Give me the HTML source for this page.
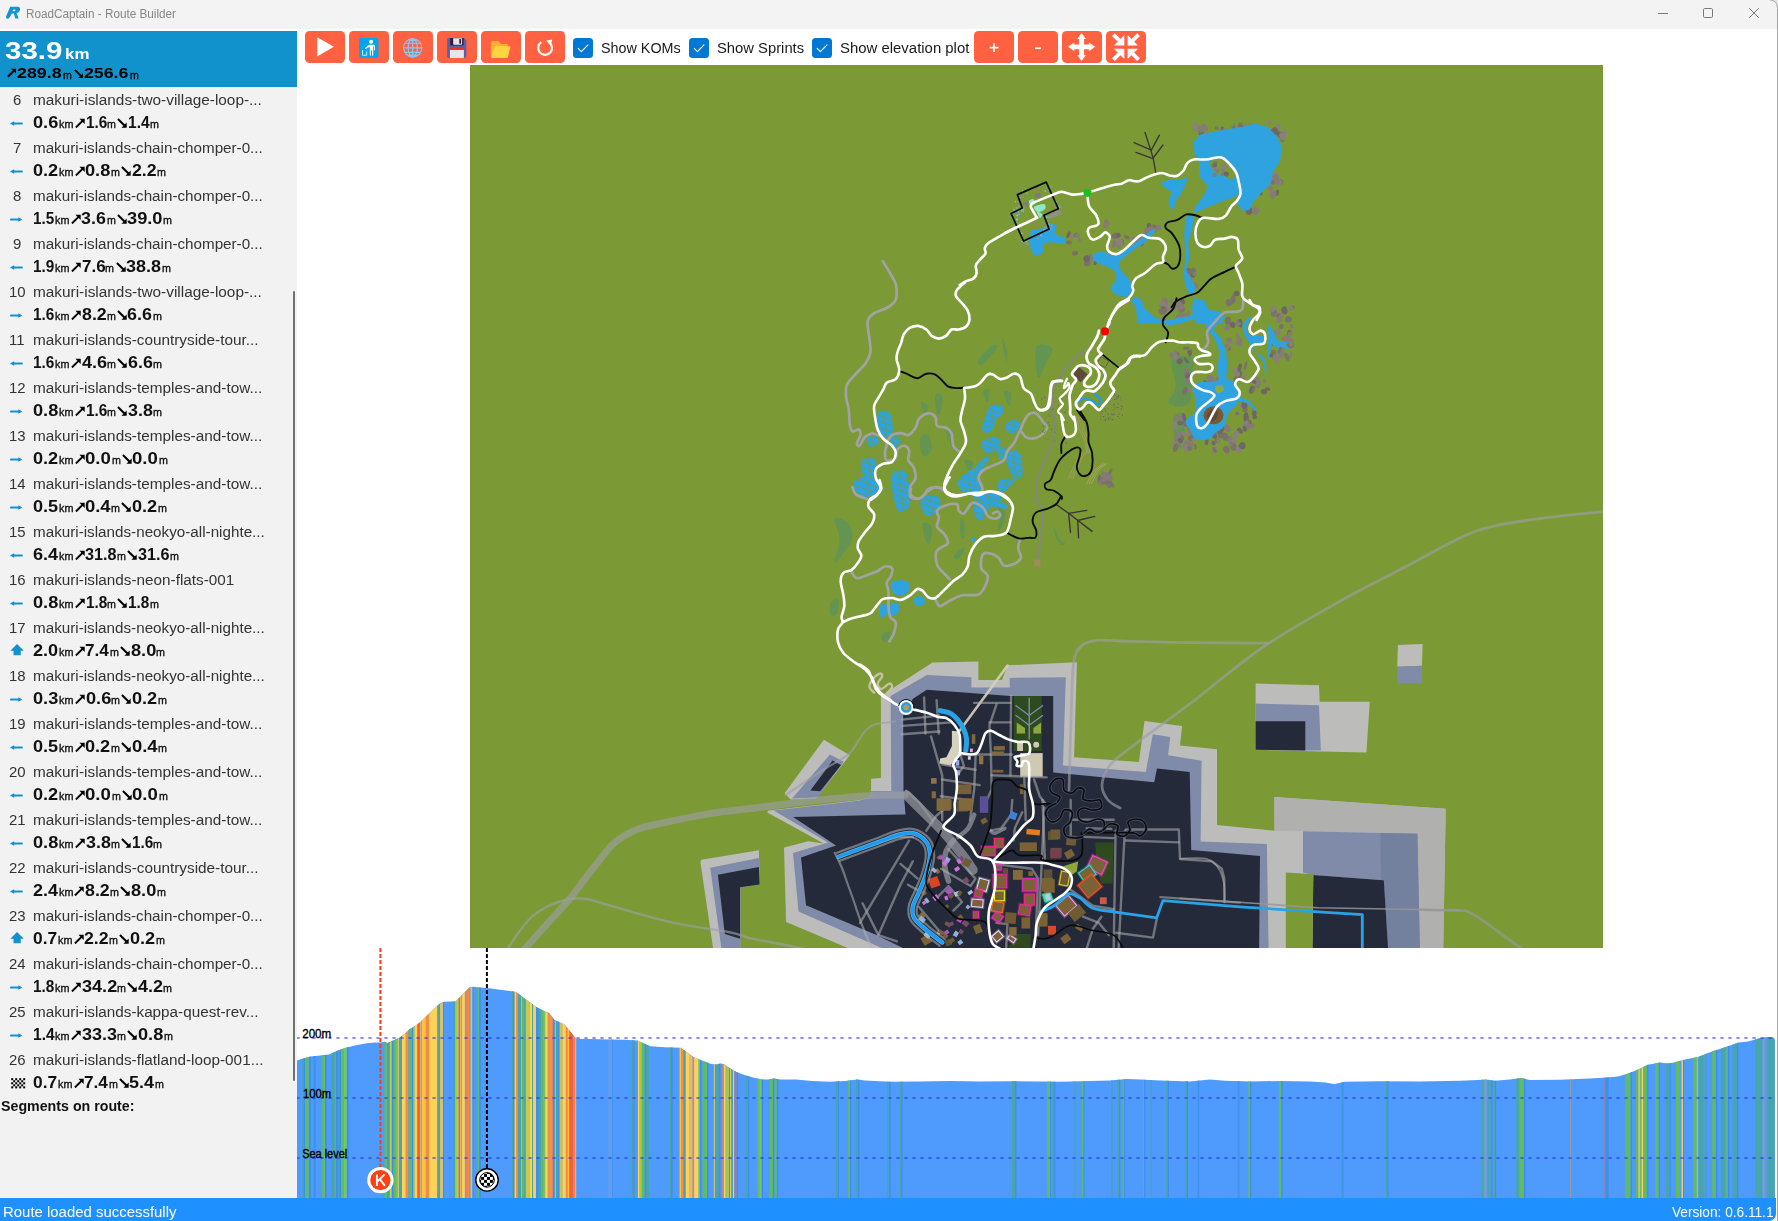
<!DOCTYPE html>
<html><head><meta charset="utf-8"><title>RoadCaptain - Route Builder</title>
<style>
html,body{margin:0;padding:0;}
body{width:1778px;height:1221px;overflow:hidden;background:#fff;position:relative;font-family:"Liberation Sans",sans-serif;}
.t{position:absolute;white-space:nowrap;transform-origin:0 0;line-height:normal;display:block;}
#titlebar{position:absolute;left:0;top:0;width:1778px;height:29px;background:#f3f3f3;}
#sidebar{position:absolute;left:0;top:31px;width:297px;height:1167px;background:#f2f2f2;}
#summary{position:absolute;left:0;top:0;width:297px;height:56px;background:#1192cc;}
#toolbar{position:absolute;left:297px;top:29px;width:1480px;height:36px;background:#fff;}
.btn{position:absolute;top:2px;width:40px;height:32px;border-radius:4.5px;background:#ff6141;}
.btn svg{position:absolute;left:0;top:0;}
.cb{position:absolute;top:9px;width:20px;height:20px;border-radius:3.5px;background:#0078d4;}
#map{position:absolute;left:470px;top:65px;width:1133px;height:883px;background:#7b9a36;overflow:hidden;}
#plot{position:absolute;left:297px;top:948px;width:1480px;height:250px;}
#status{position:absolute;left:0;top:1198px;width:1776px;height:23px;background:#1e90ff;border-bottom-right-radius:7px;}
#thumb{position:absolute;left:293px;top:260px;width:2px;height:790px;background:#727272;border-radius:1px;}
.row{position:absolute;left:0;width:290px;height:48px;}
</style></head><body>

<div id="titlebar">
<svg style="position:absolute;left:5px;top:6px" width="16" height="14" viewBox="0 0 16 14"><path d="M5.2 0.8 L12.6 0.8 C15.2 0.8 15.6 3.2 14.6 5 C13.9 6.3 12.8 6.9 11.6 7.1 L13.6 12.6 L10.3 12.6 L8.9 7.6 L6.9 7.6 L4.6 11.6 C3.9 12.8 2.6 13 1.6 12.4 C0.8 11.9 0.8 10.8 1.4 9.8 Z" fill="#1593d0"/><path d="M8.3 3.4 L10.6 3.4 L9.8 5.2 L7.4 5.2 Z" fill="#f3f3f3"/></svg>
<span class="t" style="left:26.30px;top:7.04px;font-size:12px;color:#868686;transform:scaleX(0.9777);">RoadCaptain - Route Builder</span>
<svg style="position:absolute;left:1640px;top:0" width="138" height="29" viewBox="0 0 138 29" fill="none" stroke="#7a7a7a" stroke-width="1"><path d="M18 13.5 H28"/><rect x="63.5" y="8.5" width="9" height="9" rx="1.2"/><path d="M109.3 8.3 L118.7 17.7 M118.7 8.3 L109.3 17.7"/></svg>
</div>
<div id="sidebar"><div id="summary">
<span class="t" style="left:5.20px;top:6.58px;font-size:23px;font-weight:bold;color:#fff;transform:scaleX(1.2823);">33.9</span>
<span class="t" style="left:64.80px;top:14.73px;font-size:14px;font-weight:bold;color:#fff;transform:scaleX(1.2059);">km</span>
<svg style="position:absolute;left:6.50px;top:37.30px" width="9.6" height="9.6" viewBox="0 0 10 10"><path d="M0.9 9.1 L8.2 1.8" stroke="#000" stroke-width="2.0" fill="none"/><path d="M4.3 0.7 H9.3 V5.7 Z" fill="#000"/></svg>
<span class="t" style="left:17.40px;top:33.47px;font-size:15.5px;font-weight:bold;color:#000;transform:scaleX(1.1498);">289.8</span>
<span class="t" style="left:63.20px;top:37.55px;font-size:11px;color:#000;transform:scaleX(0.9604);-webkit-text-stroke:0.3px #000;">m</span>
<svg style="position:absolute;left:73.60px;top:37.60px" width="9.6" height="9.6" viewBox="0 0 10 10"><path d="M0.9 0.9 L8.2 8.2" stroke="#000" stroke-width="2.0" fill="none"/><path d="M4.3 9.3 H9.3 V4.3 Z" fill="#000"/></svg>
<span class="t" style="left:84.40px;top:33.47px;font-size:15.5px;font-weight:bold;color:#000;transform:scaleX(1.1447);">256.6</span>
<span class="t" style="left:130.00px;top:37.55px;font-size:11px;color:#000;transform:scaleX(0.9604);-webkit-text-stroke:0.3px #000;">m</span>
</div>
<div class="row" style="top:56px">
<span class="t" style="left:13.04px;top:5.02px;font-size:14.67px;color:#333;transform:scaleX(1.0200);">6</span>
<span class="t" style="left:33.00px;top:5.02px;font-size:14.67px;color:#333;transform:scaleX(1.0486);">makuri-islands-two-village-loop-...</span>
<svg style="position:absolute;left:9px;top:29.8px" width="15" height="13" viewBox="0 0 15 13"><path d="M4 6.5 H12.8" stroke="#1192cc" stroke-width="2.2" stroke-linecap="round" fill="none"/><path d="M0.9 6.5 L5.1 4.2 V8.8 Z" fill="#1192cc"/></svg>
<span class="t" style="left:33.00px;top:26.72px;font-size:16px;font-weight:bold;color:#111;transform:scaleX(1.1375);">0.6</span>
<span class="t" style="left:58.90px;top:31.25px;font-size:11px;color:#111;transform:scaleX(0.9821);-webkit-text-stroke:0.35px #111;">km</span>
<svg style="position:absolute;left:74.70px;top:30.60px" width="10.4" height="10.4" viewBox="0 0 10 10"><path d="M0.9 9.1 L8.2 1.8" stroke="#000" stroke-width="1.9" fill="none"/><path d="M4.3 0.7 H9.3 V5.7 Z" fill="#000"/></svg>
<span class="t" style="left:85.50px;top:26.72px;font-size:16px;font-weight:bold;color:#111;transform:scaleX(0.9576);">1.6</span>
<span class="t" style="left:107.10px;top:31.25px;font-size:11px;color:#111;transform:scaleX(0.9713);-webkit-text-stroke:0.35px #111;">m</span>
<svg style="position:absolute;left:117.20px;top:30.90px" width="10.4" height="10.4" viewBox="0 0 10 10"><path d="M0.9 0.9 L8.2 8.2" stroke="#000" stroke-width="1.9" fill="none"/><path d="M4.3 9.3 H9.3 V4.3 Z" fill="#000"/></svg>
<span class="t" style="left:128.00px;top:26.72px;font-size:16px;font-weight:bold;color:#111;transform:scaleX(0.9711);">1.4</span>
<span class="t" style="left:149.90px;top:31.25px;font-size:11px;color:#111;transform:scaleX(0.9713);-webkit-text-stroke:0.35px #111;">m</span>
</div>
<div class="row" style="top:104px">
<span class="t" style="left:13.04px;top:5.02px;font-size:14.67px;color:#333;transform:scaleX(1.0200);">7</span>
<span class="t" style="left:33.00px;top:5.02px;font-size:14.67px;color:#333;transform:scaleX(1.0372);">makuri-islands-chain-chomper-0...</span>
<svg style="position:absolute;left:9px;top:29.8px" width="15" height="13" viewBox="0 0 15 13"><path d="M4 6.5 H12.8" stroke="#1192cc" stroke-width="2.2" stroke-linecap="round" fill="none"/><path d="M0.9 6.5 L5.1 4.2 V8.8 Z" fill="#1192cc"/></svg>
<span class="t" style="left:33.00px;top:26.72px;font-size:16px;font-weight:bold;color:#111;transform:scaleX(1.1330);">0.2</span>
<span class="t" style="left:58.80px;top:31.25px;font-size:11px;color:#111;transform:scaleX(0.9821);-webkit-text-stroke:0.35px #111;">km</span>
<svg style="position:absolute;left:74.60px;top:30.60px" width="10.4" height="10.4" viewBox="0 0 10 10"><path d="M0.9 9.1 L8.2 1.8" stroke="#000" stroke-width="1.9" fill="none"/><path d="M4.3 0.7 H9.3 V5.7 Z" fill="#000"/></svg>
<span class="t" style="left:85.40px;top:26.72px;font-size:16px;font-weight:bold;color:#111;transform:scaleX(1.1375);">0.8</span>
<span class="t" style="left:111.00px;top:31.25px;font-size:11px;color:#111;transform:scaleX(0.9713);-webkit-text-stroke:0.35px #111;">m</span>
<svg style="position:absolute;left:121.10px;top:30.90px" width="10.4" height="10.4" viewBox="0 0 10 10"><path d="M0.9 0.9 L8.2 8.2" stroke="#000" stroke-width="1.9" fill="none"/><path d="M4.3 9.3 H9.3 V4.3 Z" fill="#000"/></svg>
<span class="t" style="left:131.90px;top:26.72px;font-size:16px;font-weight:bold;color:#111;transform:scaleX(1.1060);">2.2</span>
<span class="t" style="left:156.80px;top:31.25px;font-size:11px;color:#111;transform:scaleX(0.9713);-webkit-text-stroke:0.35px #111;">m</span>
</div>
<div class="row" style="top:152px">
<span class="t" style="left:13.04px;top:5.02px;font-size:14.67px;color:#333;transform:scaleX(1.0200);">8</span>
<span class="t" style="left:33.00px;top:5.02px;font-size:14.67px;color:#333;transform:scaleX(1.0372);">makuri-islands-chain-chomper-0...</span>
<svg style="position:absolute;left:9px;top:29.8px" width="15" height="13" viewBox="0 0 15 13"><path d="M2.05 6.5 H9.6" stroke="#1192cc" stroke-width="2.2" stroke-linecap="round" fill="none"/><path d="M13.5 6.5 L9.3 4.2 V8.8 Z" fill="#1192cc"/></svg>
<span class="t" style="left:33.00px;top:26.72px;font-size:16px;font-weight:bold;color:#111;transform:scaleX(0.9531);">1.5</span>
<span class="t" style="left:54.80px;top:31.25px;font-size:11px;color:#111;transform:scaleX(0.9821);-webkit-text-stroke:0.35px #111;">km</span>
<svg style="position:absolute;left:70.60px;top:30.60px" width="10.4" height="10.4" viewBox="0 0 10 10"><path d="M0.9 9.1 L8.2 1.8" stroke="#000" stroke-width="1.9" fill="none"/><path d="M4.3 0.7 H9.3 V5.7 Z" fill="#000"/></svg>
<span class="t" style="left:81.40px;top:26.72px;font-size:16px;font-weight:bold;color:#111;transform:scaleX(1.1150);">3.6</span>
<span class="t" style="left:106.50px;top:31.25px;font-size:11px;color:#111;transform:scaleX(0.9713);-webkit-text-stroke:0.35px #111;">m</span>
<svg style="position:absolute;left:116.60px;top:30.90px" width="10.4" height="10.4" viewBox="0 0 10 10"><path d="M0.9 0.9 L8.2 8.2" stroke="#000" stroke-width="1.9" fill="none"/><path d="M4.3 9.3 H9.3 V4.3 Z" fill="#000"/></svg>
<span class="t" style="left:127.40px;top:26.72px;font-size:16px;font-weight:bold;color:#111;transform:scaleX(1.1400);">39.0</span>
<span class="t" style="left:163.20px;top:31.25px;font-size:11px;color:#111;transform:scaleX(0.9713);-webkit-text-stroke:0.35px #111;">m</span>
</div>
<div class="row" style="top:200px">
<span class="t" style="left:13.04px;top:5.02px;font-size:14.67px;color:#333;transform:scaleX(1.0200);">9</span>
<span class="t" style="left:33.00px;top:5.02px;font-size:14.67px;color:#333;transform:scaleX(1.0372);">makuri-islands-chain-chomper-0...</span>
<svg style="position:absolute;left:9px;top:29.8px" width="15" height="13" viewBox="0 0 15 13"><path d="M4 6.5 H12.8" stroke="#1192cc" stroke-width="2.2" stroke-linecap="round" fill="none"/><path d="M0.9 6.5 L5.1 4.2 V8.8 Z" fill="#1192cc"/></svg>
<span class="t" style="left:33.00px;top:26.72px;font-size:16px;font-weight:bold;color:#111;transform:scaleX(0.9576);">1.9</span>
<span class="t" style="left:54.90px;top:31.25px;font-size:11px;color:#111;transform:scaleX(0.9821);-webkit-text-stroke:0.35px #111;">km</span>
<svg style="position:absolute;left:70.70px;top:30.60px" width="10.4" height="10.4" viewBox="0 0 10 10"><path d="M0.9 9.1 L8.2 1.8" stroke="#000" stroke-width="1.9" fill="none"/><path d="M4.3 0.7 H9.3 V5.7 Z" fill="#000"/></svg>
<span class="t" style="left:81.50px;top:26.72px;font-size:16px;font-weight:bold;color:#111;transform:scaleX(1.0610);">7.6</span>
<span class="t" style="left:105.40px;top:31.25px;font-size:11px;color:#111;transform:scaleX(0.9713);-webkit-text-stroke:0.35px #111;">m</span>
<svg style="position:absolute;left:115.50px;top:30.90px" width="10.4" height="10.4" viewBox="0 0 10 10"><path d="M0.9 0.9 L8.2 8.2" stroke="#000" stroke-width="1.9" fill="none"/><path d="M4.3 9.3 H9.3 V4.3 Z" fill="#000"/></svg>
<span class="t" style="left:126.30px;top:26.72px;font-size:16px;font-weight:bold;color:#111;transform:scaleX(1.1239);">38.8</span>
<span class="t" style="left:161.60px;top:31.25px;font-size:11px;color:#111;transform:scaleX(0.9713);-webkit-text-stroke:0.35px #111;">m</span>
</div>
<div class="row" style="top:248px">
<span class="t" style="left:8.88px;top:5.02px;font-size:14.67px;color:#333;transform:scaleX(1.0200);">10</span>
<span class="t" style="left:33.00px;top:5.02px;font-size:14.67px;color:#333;transform:scaleX(1.0486);">makuri-islands-two-village-loop-...</span>
<svg style="position:absolute;left:9px;top:29.8px" width="15" height="13" viewBox="0 0 15 13"><path d="M2.05 6.5 H9.6" stroke="#1192cc" stroke-width="2.2" stroke-linecap="round" fill="none"/><path d="M13.5 6.5 L9.3 4.2 V8.8 Z" fill="#1192cc"/></svg>
<span class="t" style="left:33.00px;top:26.72px;font-size:16px;font-weight:bold;color:#111;transform:scaleX(0.9576);">1.6</span>
<span class="t" style="left:54.90px;top:31.25px;font-size:11px;color:#111;transform:scaleX(0.9821);-webkit-text-stroke:0.35px #111;">km</span>
<svg style="position:absolute;left:70.70px;top:30.60px" width="10.4" height="10.4" viewBox="0 0 10 10"><path d="M0.9 9.1 L8.2 1.8" stroke="#000" stroke-width="1.9" fill="none"/><path d="M4.3 0.7 H9.3 V5.7 Z" fill="#000"/></svg>
<span class="t" style="left:81.50px;top:26.72px;font-size:16px;font-weight:bold;color:#111;transform:scaleX(1.1105);">8.2</span>
<span class="t" style="left:106.50px;top:31.25px;font-size:11px;color:#111;transform:scaleX(0.9713);-webkit-text-stroke:0.35px #111;">m</span>
<svg style="position:absolute;left:116.60px;top:30.90px" width="10.4" height="10.4" viewBox="0 0 10 10"><path d="M0.9 0.9 L8.2 8.2" stroke="#000" stroke-width="1.9" fill="none"/><path d="M4.3 9.3 H9.3 V4.3 Z" fill="#000"/></svg>
<span class="t" style="left:127.40px;top:26.72px;font-size:16px;font-weight:bold;color:#111;transform:scaleX(1.1150);">6.6</span>
<span class="t" style="left:152.50px;top:31.25px;font-size:11px;color:#111;transform:scaleX(0.9713);-webkit-text-stroke:0.35px #111;">m</span>
</div>
<div class="row" style="top:296px">
<span class="t" style="left:9.43px;top:5.02px;font-size:14.67px;color:#333;transform:scaleX(1.0200);">11</span>
<span class="t" style="left:33.00px;top:5.02px;font-size:14.67px;color:#333;transform:scaleX(1.0446);">makuri-islands-countryside-tour...</span>
<svg style="position:absolute;left:9px;top:29.8px" width="15" height="13" viewBox="0 0 15 13"><path d="M4 6.5 H12.8" stroke="#1192cc" stroke-width="2.2" stroke-linecap="round" fill="none"/><path d="M0.9 6.5 L5.1 4.2 V8.8 Z" fill="#1192cc"/></svg>
<span class="t" style="left:33.00px;top:26.72px;font-size:16px;font-weight:bold;color:#111;transform:scaleX(0.9576);">1.6</span>
<span class="t" style="left:54.90px;top:31.25px;font-size:11px;color:#111;transform:scaleX(0.9821);-webkit-text-stroke:0.35px #111;">km</span>
<svg style="position:absolute;left:70.70px;top:30.60px" width="10.4" height="10.4" viewBox="0 0 10 10"><path d="M0.9 9.1 L8.2 1.8" stroke="#000" stroke-width="1.9" fill="none"/><path d="M4.3 0.7 H9.3 V5.7 Z" fill="#000"/></svg>
<span class="t" style="left:81.50px;top:26.72px;font-size:16px;font-weight:bold;color:#111;transform:scaleX(1.1285);">4.6</span>
<span class="t" style="left:106.90px;top:31.25px;font-size:11px;color:#111;transform:scaleX(0.9713);-webkit-text-stroke:0.35px #111;">m</span>
<svg style="position:absolute;left:117.00px;top:30.90px" width="10.4" height="10.4" viewBox="0 0 10 10"><path d="M0.9 0.9 L8.2 8.2" stroke="#000" stroke-width="1.9" fill="none"/><path d="M4.3 9.3 H9.3 V4.3 Z" fill="#000"/></svg>
<span class="t" style="left:127.80px;top:26.72px;font-size:16px;font-weight:bold;color:#111;transform:scaleX(1.1150);">6.6</span>
<span class="t" style="left:152.90px;top:31.25px;font-size:11px;color:#111;transform:scaleX(0.9713);-webkit-text-stroke:0.35px #111;">m</span>
</div>
<div class="row" style="top:344px">
<span class="t" style="left:8.88px;top:5.02px;font-size:14.67px;color:#333;transform:scaleX(1.0200);">12</span>
<span class="t" style="left:33.00px;top:5.02px;font-size:14.67px;color:#333;transform:scaleX(1.0460);">makuri-islands-temples-and-tow...</span>
<svg style="position:absolute;left:9px;top:29.8px" width="15" height="13" viewBox="0 0 15 13"><path d="M2.05 6.5 H9.6" stroke="#1192cc" stroke-width="2.2" stroke-linecap="round" fill="none"/><path d="M13.5 6.5 L9.3 4.2 V8.8 Z" fill="#1192cc"/></svg>
<span class="t" style="left:33.00px;top:26.72px;font-size:16px;font-weight:bold;color:#111;transform:scaleX(1.1375);">0.8</span>
<span class="t" style="left:58.90px;top:31.25px;font-size:11px;color:#111;transform:scaleX(0.9821);-webkit-text-stroke:0.35px #111;">km</span>
<svg style="position:absolute;left:74.70px;top:30.60px" width="10.4" height="10.4" viewBox="0 0 10 10"><path d="M0.9 9.1 L8.2 1.8" stroke="#000" stroke-width="1.9" fill="none"/><path d="M4.3 0.7 H9.3 V5.7 Z" fill="#000"/></svg>
<span class="t" style="left:85.50px;top:26.72px;font-size:16px;font-weight:bold;color:#111;transform:scaleX(0.9576);">1.6</span>
<span class="t" style="left:107.10px;top:31.25px;font-size:11px;color:#111;transform:scaleX(0.9713);-webkit-text-stroke:0.35px #111;">m</span>
<svg style="position:absolute;left:117.20px;top:30.90px" width="10.4" height="10.4" viewBox="0 0 10 10"><path d="M0.9 0.9 L8.2 8.2" stroke="#000" stroke-width="1.9" fill="none"/><path d="M4.3 9.3 H9.3 V4.3 Z" fill="#000"/></svg>
<span class="t" style="left:128.00px;top:26.72px;font-size:16px;font-weight:bold;color:#111;transform:scaleX(1.1150);">3.8</span>
<span class="t" style="left:153.10px;top:31.25px;font-size:11px;color:#111;transform:scaleX(0.9713);-webkit-text-stroke:0.35px #111;">m</span>
</div>
<div class="row" style="top:392px">
<span class="t" style="left:8.88px;top:5.02px;font-size:14.67px;color:#333;transform:scaleX(1.0200);">13</span>
<span class="t" style="left:33.00px;top:5.02px;font-size:14.67px;color:#333;transform:scaleX(1.0460);">makuri-islands-temples-and-tow...</span>
<svg style="position:absolute;left:9px;top:29.8px" width="15" height="13" viewBox="0 0 15 13"><path d="M2.05 6.5 H9.6" stroke="#1192cc" stroke-width="2.2" stroke-linecap="round" fill="none"/><path d="M13.5 6.5 L9.3 4.2 V8.8 Z" fill="#1192cc"/></svg>
<span class="t" style="left:33.00px;top:26.72px;font-size:16px;font-weight:bold;color:#111;transform:scaleX(1.1330);">0.2</span>
<span class="t" style="left:58.80px;top:31.25px;font-size:11px;color:#111;transform:scaleX(0.9821);-webkit-text-stroke:0.35px #111;">km</span>
<svg style="position:absolute;left:74.60px;top:30.60px" width="10.4" height="10.4" viewBox="0 0 10 10"><path d="M0.9 9.1 L8.2 1.8" stroke="#000" stroke-width="1.9" fill="none"/><path d="M4.3 0.7 H9.3 V5.7 Z" fill="#000"/></svg>
<span class="t" style="left:85.40px;top:26.72px;font-size:16px;font-weight:bold;color:#111;transform:scaleX(1.1600);">0.0</span>
<span class="t" style="left:111.50px;top:31.25px;font-size:11px;color:#111;transform:scaleX(0.9713);-webkit-text-stroke:0.35px #111;">m</span>
<svg style="position:absolute;left:121.60px;top:30.90px" width="10.4" height="10.4" viewBox="0 0 10 10"><path d="M0.9 0.9 L8.2 8.2" stroke="#000" stroke-width="1.9" fill="none"/><path d="M4.3 9.3 H9.3 V4.3 Z" fill="#000"/></svg>
<span class="t" style="left:132.40px;top:26.72px;font-size:16px;font-weight:bold;color:#111;transform:scaleX(1.1600);">0.0</span>
<span class="t" style="left:158.50px;top:31.25px;font-size:11px;color:#111;transform:scaleX(0.9713);-webkit-text-stroke:0.35px #111;">m</span>
</div>
<div class="row" style="top:440px">
<span class="t" style="left:8.88px;top:5.02px;font-size:14.67px;color:#333;transform:scaleX(1.0200);">14</span>
<span class="t" style="left:33.00px;top:5.02px;font-size:14.67px;color:#333;transform:scaleX(1.0460);">makuri-islands-temples-and-tow...</span>
<svg style="position:absolute;left:9px;top:29.8px" width="15" height="13" viewBox="0 0 15 13"><path d="M2.05 6.5 H9.6" stroke="#1192cc" stroke-width="2.2" stroke-linecap="round" fill="none"/><path d="M13.5 6.5 L9.3 4.2 V8.8 Z" fill="#1192cc"/></svg>
<span class="t" style="left:33.00px;top:26.72px;font-size:16px;font-weight:bold;color:#111;transform:scaleX(1.1330);">0.5</span>
<span class="t" style="left:58.80px;top:31.25px;font-size:11px;color:#111;transform:scaleX(0.9821);-webkit-text-stroke:0.35px #111;">km</span>
<svg style="position:absolute;left:74.60px;top:30.60px" width="10.4" height="10.4" viewBox="0 0 10 10"><path d="M0.9 9.1 L8.2 1.8" stroke="#000" stroke-width="1.9" fill="none"/><path d="M4.3 0.7 H9.3 V5.7 Z" fill="#000"/></svg>
<span class="t" style="left:85.40px;top:26.72px;font-size:16px;font-weight:bold;color:#111;transform:scaleX(1.1510);">0.4</span>
<span class="t" style="left:111.30px;top:31.25px;font-size:11px;color:#111;transform:scaleX(0.9713);-webkit-text-stroke:0.35px #111;">m</span>
<svg style="position:absolute;left:121.40px;top:30.90px" width="10.4" height="10.4" viewBox="0 0 10 10"><path d="M0.9 0.9 L8.2 8.2" stroke="#000" stroke-width="1.9" fill="none"/><path d="M4.3 9.3 H9.3 V4.3 Z" fill="#000"/></svg>
<span class="t" style="left:132.20px;top:26.72px;font-size:16px;font-weight:bold;color:#111;transform:scaleX(1.1330);">0.2</span>
<span class="t" style="left:157.70px;top:31.25px;font-size:11px;color:#111;transform:scaleX(0.9713);-webkit-text-stroke:0.35px #111;">m</span>
</div>
<div class="row" style="top:488px">
<span class="t" style="left:8.88px;top:5.02px;font-size:14.67px;color:#333;transform:scaleX(1.0200);">15</span>
<span class="t" style="left:33.00px;top:5.02px;font-size:14.67px;color:#333;transform:scaleX(1.0385);">makuri-islands-neokyo-all-nighte...</span>
<svg style="position:absolute;left:9px;top:29.8px" width="15" height="13" viewBox="0 0 15 13"><path d="M4 6.5 H12.8" stroke="#1192cc" stroke-width="2.2" stroke-linecap="round" fill="none"/><path d="M0.9 6.5 L5.1 4.2 V8.8 Z" fill="#1192cc"/></svg>
<span class="t" style="left:33.00px;top:26.72px;font-size:16px;font-weight:bold;color:#111;transform:scaleX(1.1285);">6.4</span>
<span class="t" style="left:58.70px;top:31.25px;font-size:11px;color:#111;transform:scaleX(0.9821);-webkit-text-stroke:0.35px #111;">km</span>
<svg style="position:absolute;left:74.50px;top:30.60px" width="10.4" height="10.4" viewBox="0 0 10 10"><path d="M0.9 9.1 L8.2 1.8" stroke="#000" stroke-width="1.9" fill="none"/><path d="M4.3 0.7 H9.3 V5.7 Z" fill="#000"/></svg>
<span class="t" style="left:85.30px;top:26.72px;font-size:16px;font-weight:bold;color:#111;transform:scaleX(1.0115);">31.8</span>
<span class="t" style="left:117.10px;top:31.25px;font-size:11px;color:#111;transform:scaleX(0.9713);-webkit-text-stroke:0.35px #111;">m</span>
<svg style="position:absolute;left:127.20px;top:30.90px" width="10.4" height="10.4" viewBox="0 0 10 10"><path d="M0.9 0.9 L8.2 8.2" stroke="#000" stroke-width="1.9" fill="none"/><path d="M4.3 9.3 H9.3 V4.3 Z" fill="#000"/></svg>
<span class="t" style="left:138.00px;top:26.72px;font-size:16px;font-weight:bold;color:#111;transform:scaleX(1.0115);">31.6</span>
<span class="t" style="left:169.80px;top:31.25px;font-size:11px;color:#111;transform:scaleX(0.9713);-webkit-text-stroke:0.35px #111;">m</span>
</div>
<div class="row" style="top:536px">
<span class="t" style="left:8.88px;top:5.02px;font-size:14.67px;color:#333;transform:scaleX(1.0200);">16</span>
<span class="t" style="left:33.00px;top:5.02px;font-size:14.67px;color:#333;transform:scaleX(1.0427);">makuri-islands-neon-flats-001</span>
<svg style="position:absolute;left:9px;top:29.8px" width="15" height="13" viewBox="0 0 15 13"><path d="M4 6.5 H12.8" stroke="#1192cc" stroke-width="2.2" stroke-linecap="round" fill="none"/><path d="M0.9 6.5 L5.1 4.2 V8.8 Z" fill="#1192cc"/></svg>
<span class="t" style="left:33.00px;top:26.72px;font-size:16px;font-weight:bold;color:#111;transform:scaleX(1.1375);">0.8</span>
<span class="t" style="left:58.90px;top:31.25px;font-size:11px;color:#111;transform:scaleX(0.9821);-webkit-text-stroke:0.35px #111;">km</span>
<svg style="position:absolute;left:74.70px;top:30.60px" width="10.4" height="10.4" viewBox="0 0 10 10"><path d="M0.9 9.1 L8.2 1.8" stroke="#000" stroke-width="1.9" fill="none"/><path d="M4.3 0.7 H9.3 V5.7 Z" fill="#000"/></svg>
<span class="t" style="left:85.50px;top:26.72px;font-size:16px;font-weight:bold;color:#111;transform:scaleX(0.9576);">1.8</span>
<span class="t" style="left:107.10px;top:31.25px;font-size:11px;color:#111;transform:scaleX(0.9713);-webkit-text-stroke:0.35px #111;">m</span>
<svg style="position:absolute;left:117.20px;top:30.90px" width="10.4" height="10.4" viewBox="0 0 10 10"><path d="M0.9 0.9 L8.2 8.2" stroke="#000" stroke-width="1.9" fill="none"/><path d="M4.3 9.3 H9.3 V4.3 Z" fill="#000"/></svg>
<span class="t" style="left:128.00px;top:26.72px;font-size:16px;font-weight:bold;color:#111;transform:scaleX(0.9576);">1.8</span>
<span class="t" style="left:149.60px;top:31.25px;font-size:11px;color:#111;transform:scaleX(0.9713);-webkit-text-stroke:0.35px #111;">m</span>
</div>
<div class="row" style="top:584px">
<span class="t" style="left:8.88px;top:5.02px;font-size:14.67px;color:#333;transform:scaleX(1.0200);">17</span>
<span class="t" style="left:33.00px;top:5.02px;font-size:14.67px;color:#333;transform:scaleX(1.0385);">makuri-islands-neokyo-all-nighte...</span>
<svg style="position:absolute;left:9.5px;top:28.8px" width="14" height="13" viewBox="0 0 14 13"><path d="M7 0 L13.8 6.8 H10.75 V11.2 H3.5 V6.8 H0.4 Z" fill="#1192cc"/></svg>
<span class="t" style="left:33.00px;top:26.72px;font-size:16px;font-weight:bold;color:#111;transform:scaleX(1.1330);">2.0</span>
<span class="t" style="left:58.80px;top:31.25px;font-size:11px;color:#111;transform:scaleX(0.9821);-webkit-text-stroke:0.35px #111;">km</span>
<svg style="position:absolute;left:74.60px;top:30.60px" width="10.4" height="10.4" viewBox="0 0 10 10"><path d="M0.9 9.1 L8.2 1.8" stroke="#000" stroke-width="1.9" fill="none"/><path d="M4.3 0.7 H9.3 V5.7 Z" fill="#000"/></svg>
<span class="t" style="left:85.40px;top:26.72px;font-size:16px;font-weight:bold;color:#111;transform:scaleX(1.0745);">7.4</span>
<span class="t" style="left:109.60px;top:31.25px;font-size:11px;color:#111;transform:scaleX(0.9713);-webkit-text-stroke:0.35px #111;">m</span>
<svg style="position:absolute;left:119.70px;top:30.90px" width="10.4" height="10.4" viewBox="0 0 10 10"><path d="M0.9 0.9 L8.2 8.2" stroke="#000" stroke-width="1.9" fill="none"/><path d="M4.3 9.3 H9.3 V4.3 Z" fill="#000"/></svg>
<span class="t" style="left:130.50px;top:26.72px;font-size:16px;font-weight:bold;color:#111;transform:scaleX(1.1375);">8.0</span>
<span class="t" style="left:156.10px;top:31.25px;font-size:11px;color:#111;transform:scaleX(0.9713);-webkit-text-stroke:0.35px #111;">m</span>
</div>
<div class="row" style="top:632px">
<span class="t" style="left:8.88px;top:5.02px;font-size:14.67px;color:#333;transform:scaleX(1.0200);">18</span>
<span class="t" style="left:33.00px;top:5.02px;font-size:14.67px;color:#333;transform:scaleX(1.0385);">makuri-islands-neokyo-all-nighte...</span>
<svg style="position:absolute;left:9px;top:29.8px" width="15" height="13" viewBox="0 0 15 13"><path d="M2.05 6.5 H9.6" stroke="#1192cc" stroke-width="2.2" stroke-linecap="round" fill="none"/><path d="M13.5 6.5 L9.3 4.2 V8.8 Z" fill="#1192cc"/></svg>
<span class="t" style="left:33.00px;top:26.72px;font-size:16px;font-weight:bold;color:#111;transform:scaleX(1.1375);">0.3</span>
<span class="t" style="left:58.90px;top:31.25px;font-size:11px;color:#111;transform:scaleX(0.9821);-webkit-text-stroke:0.35px #111;">km</span>
<svg style="position:absolute;left:74.70px;top:30.60px" width="10.4" height="10.4" viewBox="0 0 10 10"><path d="M0.9 9.1 L8.2 1.8" stroke="#000" stroke-width="1.9" fill="none"/><path d="M4.3 0.7 H9.3 V5.7 Z" fill="#000"/></svg>
<span class="t" style="left:85.50px;top:26.72px;font-size:16px;font-weight:bold;color:#111;transform:scaleX(1.1375);">0.6</span>
<span class="t" style="left:111.10px;top:31.25px;font-size:11px;color:#111;transform:scaleX(0.9713);-webkit-text-stroke:0.35px #111;">m</span>
<svg style="position:absolute;left:121.20px;top:30.90px" width="10.4" height="10.4" viewBox="0 0 10 10"><path d="M0.9 0.9 L8.2 8.2" stroke="#000" stroke-width="1.9" fill="none"/><path d="M4.3 9.3 H9.3 V4.3 Z" fill="#000"/></svg>
<span class="t" style="left:132.00px;top:26.72px;font-size:16px;font-weight:bold;color:#111;transform:scaleX(1.1330);">0.2</span>
<span class="t" style="left:157.50px;top:31.25px;font-size:11px;color:#111;transform:scaleX(0.9713);-webkit-text-stroke:0.35px #111;">m</span>
</div>
<div class="row" style="top:680px">
<span class="t" style="left:8.88px;top:5.02px;font-size:14.67px;color:#333;transform:scaleX(1.0200);">19</span>
<span class="t" style="left:33.00px;top:5.02px;font-size:14.67px;color:#333;transform:scaleX(1.0460);">makuri-islands-temples-and-tow...</span>
<svg style="position:absolute;left:9px;top:29.8px" width="15" height="13" viewBox="0 0 15 13"><path d="M4 6.5 H12.8" stroke="#1192cc" stroke-width="2.2" stroke-linecap="round" fill="none"/><path d="M0.9 6.5 L5.1 4.2 V8.8 Z" fill="#1192cc"/></svg>
<span class="t" style="left:33.00px;top:26.72px;font-size:16px;font-weight:bold;color:#111;transform:scaleX(1.1330);">0.5</span>
<span class="t" style="left:58.80px;top:31.25px;font-size:11px;color:#111;transform:scaleX(0.9821);-webkit-text-stroke:0.35px #111;">km</span>
<svg style="position:absolute;left:74.60px;top:30.60px" width="10.4" height="10.4" viewBox="0 0 10 10"><path d="M0.9 9.1 L8.2 1.8" stroke="#000" stroke-width="1.9" fill="none"/><path d="M4.3 0.7 H9.3 V5.7 Z" fill="#000"/></svg>
<span class="t" style="left:85.40px;top:26.72px;font-size:16px;font-weight:bold;color:#111;transform:scaleX(1.1330);">0.2</span>
<span class="t" style="left:110.90px;top:31.25px;font-size:11px;color:#111;transform:scaleX(0.9713);-webkit-text-stroke:0.35px #111;">m</span>
<svg style="position:absolute;left:121.00px;top:30.90px" width="10.4" height="10.4" viewBox="0 0 10 10"><path d="M0.9 0.9 L8.2 8.2" stroke="#000" stroke-width="1.9" fill="none"/><path d="M4.3 9.3 H9.3 V4.3 Z" fill="#000"/></svg>
<span class="t" style="left:131.80px;top:26.72px;font-size:16px;font-weight:bold;color:#111;transform:scaleX(1.1510);">0.4</span>
<span class="t" style="left:157.70px;top:31.25px;font-size:11px;color:#111;transform:scaleX(0.9713);-webkit-text-stroke:0.35px #111;">m</span>
</div>
<div class="row" style="top:728px">
<span class="t" style="left:8.88px;top:5.02px;font-size:14.67px;color:#333;transform:scaleX(1.0200);">20</span>
<span class="t" style="left:33.00px;top:5.02px;font-size:14.67px;color:#333;transform:scaleX(1.0460);">makuri-islands-temples-and-tow...</span>
<svg style="position:absolute;left:9px;top:29.8px" width="15" height="13" viewBox="0 0 15 13"><path d="M4 6.5 H12.8" stroke="#1192cc" stroke-width="2.2" stroke-linecap="round" fill="none"/><path d="M0.9 6.5 L5.1 4.2 V8.8 Z" fill="#1192cc"/></svg>
<span class="t" style="left:33.00px;top:26.72px;font-size:16px;font-weight:bold;color:#111;transform:scaleX(1.1330);">0.2</span>
<span class="t" style="left:58.80px;top:31.25px;font-size:11px;color:#111;transform:scaleX(0.9821);-webkit-text-stroke:0.35px #111;">km</span>
<svg style="position:absolute;left:74.60px;top:30.60px" width="10.4" height="10.4" viewBox="0 0 10 10"><path d="M0.9 9.1 L8.2 1.8" stroke="#000" stroke-width="1.9" fill="none"/><path d="M4.3 0.7 H9.3 V5.7 Z" fill="#000"/></svg>
<span class="t" style="left:85.40px;top:26.72px;font-size:16px;font-weight:bold;color:#111;transform:scaleX(1.1600);">0.0</span>
<span class="t" style="left:111.50px;top:31.25px;font-size:11px;color:#111;transform:scaleX(0.9713);-webkit-text-stroke:0.35px #111;">m</span>
<svg style="position:absolute;left:121.60px;top:30.90px" width="10.4" height="10.4" viewBox="0 0 10 10"><path d="M0.9 0.9 L8.2 8.2" stroke="#000" stroke-width="1.9" fill="none"/><path d="M4.3 9.3 H9.3 V4.3 Z" fill="#000"/></svg>
<span class="t" style="left:132.40px;top:26.72px;font-size:16px;font-weight:bold;color:#111;transform:scaleX(1.1600);">0.0</span>
<span class="t" style="left:158.50px;top:31.25px;font-size:11px;color:#111;transform:scaleX(0.9713);-webkit-text-stroke:0.35px #111;">m</span>
</div>
<div class="row" style="top:776px">
<span class="t" style="left:8.88px;top:5.02px;font-size:14.67px;color:#333;transform:scaleX(1.0200);">21</span>
<span class="t" style="left:33.00px;top:5.02px;font-size:14.67px;color:#333;transform:scaleX(1.0460);">makuri-islands-temples-and-tow...</span>
<svg style="position:absolute;left:9px;top:29.8px" width="15" height="13" viewBox="0 0 15 13"><path d="M4 6.5 H12.8" stroke="#1192cc" stroke-width="2.2" stroke-linecap="round" fill="none"/><path d="M0.9 6.5 L5.1 4.2 V8.8 Z" fill="#1192cc"/></svg>
<span class="t" style="left:33.00px;top:26.72px;font-size:16px;font-weight:bold;color:#111;transform:scaleX(1.1375);">0.8</span>
<span class="t" style="left:58.90px;top:31.25px;font-size:11px;color:#111;transform:scaleX(0.9821);-webkit-text-stroke:0.35px #111;">km</span>
<svg style="position:absolute;left:74.70px;top:30.60px" width="10.4" height="10.4" viewBox="0 0 10 10"><path d="M0.9 9.1 L8.2 1.8" stroke="#000" stroke-width="1.9" fill="none"/><path d="M4.3 0.7 H9.3 V5.7 Z" fill="#000"/></svg>
<span class="t" style="left:85.50px;top:26.72px;font-size:16px;font-weight:bold;color:#111;transform:scaleX(1.1150);">3.8</span>
<span class="t" style="left:110.60px;top:31.25px;font-size:11px;color:#111;transform:scaleX(0.9713);-webkit-text-stroke:0.35px #111;">m</span>
<svg style="position:absolute;left:120.70px;top:30.90px" width="10.4" height="10.4" viewBox="0 0 10 10"><path d="M0.9 0.9 L8.2 8.2" stroke="#000" stroke-width="1.9" fill="none"/><path d="M4.3 9.3 H9.3 V4.3 Z" fill="#000"/></svg>
<span class="t" style="left:131.50px;top:26.72px;font-size:16px;font-weight:bold;color:#111;transform:scaleX(0.9576);">1.6</span>
<span class="t" style="left:153.10px;top:31.25px;font-size:11px;color:#111;transform:scaleX(0.9713);-webkit-text-stroke:0.35px #111;">m</span>
</div>
<div class="row" style="top:824px">
<span class="t" style="left:8.88px;top:5.02px;font-size:14.67px;color:#333;transform:scaleX(1.0200);">22</span>
<span class="t" style="left:33.00px;top:5.02px;font-size:14.67px;color:#333;transform:scaleX(1.0446);">makuri-islands-countryside-tour...</span>
<svg style="position:absolute;left:9px;top:29.8px" width="15" height="13" viewBox="0 0 15 13"><path d="M4 6.5 H12.8" stroke="#1192cc" stroke-width="2.2" stroke-linecap="round" fill="none"/><path d="M0.9 6.5 L5.1 4.2 V8.8 Z" fill="#1192cc"/></svg>
<span class="t" style="left:33.00px;top:26.72px;font-size:16px;font-weight:bold;color:#111;transform:scaleX(1.1240);">2.4</span>
<span class="t" style="left:58.60px;top:31.25px;font-size:11px;color:#111;transform:scaleX(0.9821);-webkit-text-stroke:0.35px #111;">km</span>
<svg style="position:absolute;left:74.40px;top:30.60px" width="10.4" height="10.4" viewBox="0 0 10 10"><path d="M0.9 9.1 L8.2 1.8" stroke="#000" stroke-width="1.9" fill="none"/><path d="M4.3 0.7 H9.3 V5.7 Z" fill="#000"/></svg>
<span class="t" style="left:85.20px;top:26.72px;font-size:16px;font-weight:bold;color:#111;transform:scaleX(1.1105);">8.2</span>
<span class="t" style="left:110.20px;top:31.25px;font-size:11px;color:#111;transform:scaleX(0.9713);-webkit-text-stroke:0.35px #111;">m</span>
<svg style="position:absolute;left:120.30px;top:30.90px" width="10.4" height="10.4" viewBox="0 0 10 10"><path d="M0.9 0.9 L8.2 8.2" stroke="#000" stroke-width="1.9" fill="none"/><path d="M4.3 9.3 H9.3 V4.3 Z" fill="#000"/></svg>
<span class="t" style="left:131.10px;top:26.72px;font-size:16px;font-weight:bold;color:#111;transform:scaleX(1.1375);">8.0</span>
<span class="t" style="left:156.70px;top:31.25px;font-size:11px;color:#111;transform:scaleX(0.9713);-webkit-text-stroke:0.35px #111;">m</span>
</div>
<div class="row" style="top:872px">
<span class="t" style="left:8.88px;top:5.02px;font-size:14.67px;color:#333;transform:scaleX(1.0200);">23</span>
<span class="t" style="left:33.00px;top:5.02px;font-size:14.67px;color:#333;transform:scaleX(1.0372);">makuri-islands-chain-chomper-0...</span>
<svg style="position:absolute;left:9.5px;top:28.8px" width="14" height="13" viewBox="0 0 14 13"><path d="M7 0 L13.8 6.8 H10.75 V11.2 H3.5 V6.8 H0.4 Z" fill="#1192cc"/></svg>
<span class="t" style="left:33.00px;top:26.72px;font-size:16px;font-weight:bold;color:#111;transform:scaleX(1.0835);">0.7</span>
<span class="t" style="left:57.70px;top:31.25px;font-size:11px;color:#111;transform:scaleX(0.9821);-webkit-text-stroke:0.35px #111;">km</span>
<svg style="position:absolute;left:73.50px;top:30.60px" width="10.4" height="10.4" viewBox="0 0 10 10"><path d="M0.9 9.1 L8.2 1.8" stroke="#000" stroke-width="1.9" fill="none"/><path d="M4.3 0.7 H9.3 V5.7 Z" fill="#000"/></svg>
<span class="t" style="left:84.30px;top:26.72px;font-size:16px;font-weight:bold;color:#111;transform:scaleX(1.1060);">2.2</span>
<span class="t" style="left:109.20px;top:31.25px;font-size:11px;color:#111;transform:scaleX(0.9713);-webkit-text-stroke:0.35px #111;">m</span>
<svg style="position:absolute;left:119.30px;top:30.90px" width="10.4" height="10.4" viewBox="0 0 10 10"><path d="M0.9 0.9 L8.2 8.2" stroke="#000" stroke-width="1.9" fill="none"/><path d="M4.3 9.3 H9.3 V4.3 Z" fill="#000"/></svg>
<span class="t" style="left:130.10px;top:26.72px;font-size:16px;font-weight:bold;color:#111;transform:scaleX(1.1330);">0.2</span>
<span class="t" style="left:155.60px;top:31.25px;font-size:11px;color:#111;transform:scaleX(0.9713);-webkit-text-stroke:0.35px #111;">m</span>
</div>
<div class="row" style="top:920px">
<span class="t" style="left:8.88px;top:5.02px;font-size:14.67px;color:#333;transform:scaleX(1.0200);">24</span>
<span class="t" style="left:33.00px;top:5.02px;font-size:14.67px;color:#333;transform:scaleX(1.0372);">makuri-islands-chain-chomper-0...</span>
<svg style="position:absolute;left:9px;top:29.8px" width="15" height="13" viewBox="0 0 15 13"><path d="M2.05 6.5 H9.6" stroke="#1192cc" stroke-width="2.2" stroke-linecap="round" fill="none"/><path d="M13.5 6.5 L9.3 4.2 V8.8 Z" fill="#1192cc"/></svg>
<span class="t" style="left:33.00px;top:26.72px;font-size:16px;font-weight:bold;color:#111;transform:scaleX(0.9576);">1.8</span>
<span class="t" style="left:54.90px;top:31.25px;font-size:11px;color:#111;transform:scaleX(0.9821);-webkit-text-stroke:0.35px #111;">km</span>
<svg style="position:absolute;left:70.70px;top:30.60px" width="10.4" height="10.4" viewBox="0 0 10 10"><path d="M0.9 9.1 L8.2 1.8" stroke="#000" stroke-width="1.9" fill="none"/><path d="M4.3 0.7 H9.3 V5.7 Z" fill="#000"/></svg>
<span class="t" style="left:81.50px;top:26.72px;font-size:16px;font-weight:bold;color:#111;transform:scaleX(1.1304);">34.2</span>
<span class="t" style="left:117.00px;top:31.25px;font-size:11px;color:#111;transform:scaleX(0.9713);-webkit-text-stroke:0.35px #111;">m</span>
<svg style="position:absolute;left:127.10px;top:30.90px" width="10.4" height="10.4" viewBox="0 0 10 10"><path d="M0.9 0.9 L8.2 8.2" stroke="#000" stroke-width="1.9" fill="none"/><path d="M4.3 9.3 H9.3 V4.3 Z" fill="#000"/></svg>
<span class="t" style="left:137.90px;top:26.72px;font-size:16px;font-weight:bold;color:#111;transform:scaleX(1.1240);">4.2</span>
<span class="t" style="left:163.20px;top:31.25px;font-size:11px;color:#111;transform:scaleX(0.9713);-webkit-text-stroke:0.35px #111;">m</span>
</div>
<div class="row" style="top:968px">
<span class="t" style="left:8.88px;top:5.02px;font-size:14.67px;color:#333;transform:scaleX(1.0200);">25</span>
<span class="t" style="left:33.00px;top:5.02px;font-size:14.67px;color:#333;transform:scaleX(1.0416);">makuri-islands-kappa-quest-rev...</span>
<svg style="position:absolute;left:9px;top:29.8px" width="15" height="13" viewBox="0 0 15 13"><path d="M2.05 6.5 H9.6" stroke="#1192cc" stroke-width="2.2" stroke-linecap="round" fill="none"/><path d="M13.5 6.5 L9.3 4.2 V8.8 Z" fill="#1192cc"/></svg>
<span class="t" style="left:33.00px;top:26.72px;font-size:16px;font-weight:bold;color:#111;transform:scaleX(0.9711);">1.4</span>
<span class="t" style="left:55.20px;top:31.25px;font-size:11px;color:#111;transform:scaleX(0.9821);-webkit-text-stroke:0.35px #111;">km</span>
<svg style="position:absolute;left:71.00px;top:30.60px" width="10.4" height="10.4" viewBox="0 0 10 10"><path d="M0.9 9.1 L8.2 1.8" stroke="#000" stroke-width="1.9" fill="none"/><path d="M4.3 0.7 H9.3 V5.7 Z" fill="#000"/></svg>
<span class="t" style="left:81.80px;top:26.72px;font-size:16px;font-weight:bold;color:#111;transform:scaleX(1.1239);">33.3</span>
<span class="t" style="left:117.10px;top:31.25px;font-size:11px;color:#111;transform:scaleX(0.9713);-webkit-text-stroke:0.35px #111;">m</span>
<svg style="position:absolute;left:127.20px;top:30.90px" width="10.4" height="10.4" viewBox="0 0 10 10"><path d="M0.9 0.9 L8.2 8.2" stroke="#000" stroke-width="1.9" fill="none"/><path d="M4.3 9.3 H9.3 V4.3 Z" fill="#000"/></svg>
<span class="t" style="left:138.00px;top:26.72px;font-size:16px;font-weight:bold;color:#111;transform:scaleX(1.1375);">0.8</span>
<span class="t" style="left:163.60px;top:31.25px;font-size:11px;color:#111;transform:scaleX(0.9713);-webkit-text-stroke:0.35px #111;">m</span>
</div>
<div class="row" style="top:1016px">
<span class="t" style="left:8.88px;top:5.02px;font-size:14.67px;color:#333;transform:scaleX(1.0200);">26</span>
<span class="t" style="left:33.00px;top:5.02px;font-size:14.67px;color:#333;transform:scaleX(1.0436);">makuri-islands-flatland-loop-001...</span>
<svg style="position:absolute;left:11.1px;top:30.5px" width="15" height="11" viewBox="0 0 15 11" fill="#000"><rect x="0.20" y="0.20" width="2.0" height="2.03"/><rect x="0.20" y="4.26" width="2.0" height="2.03"/><rect x="0.20" y="8.32" width="2.0" height="2.03"/><rect x="2.20" y="2.23" width="2.0" height="2.03"/><rect x="2.20" y="6.29" width="2.0" height="2.03"/><rect x="4.20" y="0.20" width="2.0" height="2.03"/><rect x="4.20" y="4.26" width="2.0" height="2.03"/><rect x="4.20" y="8.32" width="2.0" height="2.03"/><rect x="6.20" y="2.23" width="2.0" height="2.03"/><rect x="6.20" y="6.29" width="2.0" height="2.03"/><rect x="8.20" y="0.20" width="2.0" height="2.03"/><rect x="8.20" y="4.26" width="2.0" height="2.03"/><rect x="8.20" y="8.32" width="2.0" height="2.03"/><rect x="10.20" y="2.23" width="2.0" height="2.03"/><rect x="10.20" y="6.29" width="2.0" height="2.03"/><rect x="12.20" y="0.20" width="2.0" height="2.03"/><rect x="12.20" y="4.26" width="2.0" height="2.03"/><rect x="12.20" y="8.32" width="2.0" height="2.03"/></svg>
<span class="t" style="left:33.00px;top:26.72px;font-size:16px;font-weight:bold;color:#111;transform:scaleX(1.0835);">0.7</span>
<span class="t" style="left:57.70px;top:31.25px;font-size:11px;color:#111;transform:scaleX(0.9821);-webkit-text-stroke:0.35px #111;">km</span>
<svg style="position:absolute;left:73.50px;top:30.60px" width="10.4" height="10.4" viewBox="0 0 10 10"><path d="M0.9 9.1 L8.2 1.8" stroke="#000" stroke-width="1.9" fill="none"/><path d="M4.3 0.7 H9.3 V5.7 Z" fill="#000"/></svg>
<span class="t" style="left:84.30px;top:26.72px;font-size:16px;font-weight:bold;color:#111;transform:scaleX(1.0745);">7.4</span>
<span class="t" style="left:108.50px;top:31.25px;font-size:11px;color:#111;transform:scaleX(0.9713);-webkit-text-stroke:0.35px #111;">m</span>
<svg style="position:absolute;left:118.60px;top:30.90px" width="10.4" height="10.4" viewBox="0 0 10 10"><path d="M0.9 0.9 L8.2 8.2" stroke="#000" stroke-width="1.9" fill="none"/><path d="M4.3 9.3 H9.3 V4.3 Z" fill="#000"/></svg>
<span class="t" style="left:129.40px;top:26.72px;font-size:16px;font-weight:bold;color:#111;transform:scaleX(1.1240);">5.4</span>
<span class="t" style="left:154.70px;top:31.25px;font-size:11px;color:#111;transform:scaleX(0.9713);-webkit-text-stroke:0.35px #111;">m</span>
</div>
<span class="t" style="left:1.00px;top:1067.32px;font-size:14.67px;font-weight:bold;color:#111;transform:scaleX(0.9699);">Segments on route:</span>
<div id="thumb"></div>
</div>
<div id="toolbar">
<div class="btn" style="left:8px"><svg width="40" height="32" viewBox="0 0 40 32"><path d="M12.2 6.2 L28.8 15.7 L12.2 25.4 Z" fill="#fff"/></svg></div>
<div class="btn" style="left:52px"><svg width="40" height="32" viewBox="0 0 40 32"><rect x="10.1" y="7" width="19.3" height="19.95" rx="1.8" fill="#00a6ed"/>
<circle cx="22.05" cy="10.65" r="2" fill="#fff"/>
<path d="M20.4 13.7 H24.6 Q25.95 13.7 25.95 15.1 V19 Q25.95 19.5 25.5 19.5 Q25.05 19.5 25.05 19 V15.6 H24.2 V24.1 Q24.2 24.65 23.6 24.65 Q23 24.65 23 24.1 V19.6 H22 V24.1 Q22 24.65 21.4 24.65 Q20.8 24.65 20.8 24.1 V15.7 L16.7 18 Q16.2 18.2 16 17.75 Q15.85 17.35 16.3 17.1 L19.5 14 Q19.9 13.7 20.4 13.7 Z" fill="#fff"/>
<path d="M13.55 19 V24.25 H17.7 V20.3" stroke="#fff" stroke-width="0.8" fill="none"/>
</svg></div>
<div class="btn" style="left:96px"><svg width="40" height="32" viewBox="0 0 40 32"><g fill="none" stroke="#7fccff" stroke-width="1.15">
<circle cx="19.7" cy="16.8" r="9.1"/>
<ellipse cx="19.7" cy="16.8" rx="4.6" ry="9.1"/>
<path d="M19.7 7.7 V25.9 M10.6 16.8 H28.8 M12 12.2 H27.4 M12 21.4 H27.4 M15.2 8.9 Q19.7 10.4 24.2 8.9 M15.2 24.7 Q19.7 23.2 24.2 24.7"/>
</g>
</svg></div>
<div class="btn" style="left:140px"><svg width="40" height="32" viewBox="0 0 40 32"><path d="M11.6 7 H27 L29.4 9.2 V25.5 Q29.4 26.95 27.9 26.95 H11.6 Q10.1 26.95 10.1 25.5 V8.5 Q10.1 7 11.6 7 Z" fill="#5c5fa0"/>
<path d="M13.2 7 H26.6 V13.4 Q26.6 14.4 25.6 14.4 H14.2 Q13.2 14.4 13.2 13.4 Z" fill="#2e1d4b"/>
<path d="M16.2 7.3 H25.1 V12.9 Q25.1 13.7 24.3 13.7 H17 Q16.2 13.7 16.2 12.9 Z" fill="#e6e6e6"/>
<rect x="22.3" y="8.1" width="1.8" height="4.6" rx="0.5" fill="#2e1d4b"/>
<path d="M13.7 17.1 H26.1 Q26.9 17.1 26.9 17.9 V19 H12.95 V17.9 Q12.95 17.1 13.7 17.1 Z" fill="#ff2a1f"/>
<rect x="12.95" y="19" width="13.95" height="7.95" fill="#e6e6e6"/>
<rect x="12.95" y="19" width="13.95" height="0.5" fill="#cfe9f5"/>
</svg></div>
<div class="btn" style="left:184px"><svg width="40" height="32" viewBox="0 0 40 32"><path d="M11 10.1 H16.6 Q17.3 10.1 17.8 10.6 L19.6 12.6 Q19.9 12.9 20.4 12.9 H25.8 Q26.9 12.9 26.9 14 V25.8 Q26.9 26.95 25.8 26.95 H11 Q9.9 26.95 9.9 25.8 V11.2 Q9.9 10.1 11 10.1 Z" fill="#ffb02e"/>
<path d="M15.2 15.2 H28.4 Q29.7 15.2 29.35 16.4 L26.9 26 Q26.6 26.95 25.6 26.95 H11.2 Q10 26.95 10.3 25.9 L13.4 16.3 Q13.75 15.2 15.2 15.2 Z" fill="#fcd53f"/>
</svg></div>
<div class="btn" style="left:228px"><svg width="40" height="32" viewBox="0 0 40 32"><path d="M16.4 11.1 A6.9 6.9 0 1 0 24.2 11.4" stroke="#fff" stroke-width="2.1" fill="none"/>
<path d="M21.1 9.5 L27.3 8.6 L25.6 14.4 Z" fill="#fff"/>
</svg></div>
<div class="cb" style="left:276px"><svg width="20" height="20" viewBox="0 0 20 20"><path d="M5.2 10.4 L8.4 13.6 L15 6.8" stroke="#fff" stroke-width="1.1" fill="none" stroke-linecap="round" stroke-linejoin="round"/></svg></div>
<span class="t" style="left:303.80px;top:11.32px;font-size:14.67px;color:#1a1a1a;transform:scaleX(0.9789);">Show KOMs</span>
<div class="cb" style="left:392px"><svg width="20" height="20" viewBox="0 0 20 20"><path d="M5.2 10.4 L8.4 13.6 L15 6.8" stroke="#fff" stroke-width="1.1" fill="none" stroke-linecap="round" stroke-linejoin="round"/></svg></div>
<span class="t" style="left:419.80px;top:11.32px;font-size:14.67px;color:#1a1a1a;transform:scaleX(1.0089);">Show Sprints</span>
<div class="cb" style="left:515px"><svg width="20" height="20" viewBox="0 0 20 20"><path d="M5.2 10.4 L8.4 13.6 L15 6.8" stroke="#fff" stroke-width="1.1" fill="none" stroke-linecap="round" stroke-linejoin="round"/></svg></div>
<span class="t" style="left:542.80px;top:11.32px;font-size:14.67px;color:#1a1a1a;transform:scaleX(1.0179);">Show elevation plot</span>
<div class="btn" style="left:677px"><svg width="40" height="32" viewBox="0 0 40 32"><path d="M15.6 16.6 H24.4 M20 12.2 V21" stroke="#fff" stroke-width="1.7" fill="none"/></svg></div>
<div class="btn" style="left:721px"><svg width="40" height="32" viewBox="0 0 40 32"><path d="M17 17.2 H23" stroke="#fff" stroke-width="1.7" fill="none"/></svg></div>
<div class="btn" style="left:765px"><svg width="40" height="32" viewBox="0 0 40 32"><path d="M19.55 2.05 L23.85 8.1 H22.05 V13.5 H26.9 V11.5 L33.2 15.85 L26.9 20.2 V18.3 H22.05 V24.05 H23.85 L19.55 29.9 L15.25 24.05 H17.05 V18.3 H12.2 V20.2 L6.1 15.85 L12.2 11.5 V13.5 H17.05 V8.1 H15.25 Z" fill="#fff"/>
</svg></div>
<div class="btn" style="left:809px"><svg width="40" height="32" viewBox="0 0 40 32"><path d="M18.30 4.10 L18.30 14.45 L7.95 14.45 Z" fill="#fff"/><path d="M7.40 3.60 L14.60 10.80" stroke="#fff" stroke-width="3.9" fill="none"/><path d="M18.30 28.04 L18.30 17.69 L7.95 17.69 Z" fill="#fff"/><path d="M7.40 28.54 L14.60 21.34" stroke="#fff" stroke-width="3.9" fill="none"/><path d="M21.60 4.10 L21.60 14.45 L31.95 14.45 Z" fill="#fff"/><path d="M32.50 3.60 L25.30 10.80" stroke="#fff" stroke-width="3.9" fill="none"/><path d="M21.60 28.04 L21.60 17.69 L31.95 17.69 Z" fill="#fff"/><path d="M32.50 28.54 L25.30 21.34" stroke="#fff" stroke-width="3.9" fill="none"/></svg></div>
</div>
<div id="map"><svg width="1133" height="883" viewBox="470 65 1133 883">
<polygon points="880.9,696.0 932.4,662.5 978.4,661.4 978.4,679.9 1002.0,679.9 1007.6,665.3 1076.9,662.3 1074.1,757.2 1138.9,762.1 1144.5,721.0 1182.1,725.9 1180.0,745.4 1217.0,749.2 1217.0,825.1 1274.6,830.8 1274.3,797.1 1445.7,808.8 1443.2,949.0 850.2,949.0 786.1,922.0 784.0,847.5 808.4,841.3 823.7,843.4 767.3,812.5 767.8,810.8 773.6,810.0 860.0,800.0 871.1,796.0 871.1,778.8 880.9,778.0" fill="#bcbdba" />
<polygon points="890.6,696.0 926.9,675.1 971.4,677.2 971.4,687.6 1009.7,687.6 1009.7,677.9 1065.8,677.2 1063.0,765.6 1145.8,771.9 1152.8,734.3 1170.2,737.0 1168.1,755.2 1201.6,760.7 1200.6,841.5 1266.9,844.1 1268.6,949.0 884.0,949.0 798.5,911.6 793.0,853.0 828.0,842.5 773.6,810.4 860.0,800.5 871.1,796.0 871.1,791.0 891.3,791.0" fill="#7f8ba8" />
<polygon points="903.2,715.5 912.9,698.7 926.9,689.7 1010.4,696.0 1053.2,696.0 1053.2,772.6 1154.2,782.3 1157.0,768.4 1189.7,771.9 1191.2,850.1 1260.0,856.1 1259.1,949.0 905.0,949.0 875.2,934.6 806.0,905.3 801.0,857.5 836.0,845.5 793.1,816.9 890.0,814.8 905.5,814.5 903.5,790.0" fill="#252a3a" />
<polygon points="1274.3,797.1 1445.7,808.8 1443.2,949.0 1419.9,949.0 1417.4,833.7 1303.0,831.2 1274.6,830.8" fill="#b0b0af" />
<polygon points="1303.0,831.2 1417.4,833.7 1419.9,949.0 1388.1,949.0 1383.8,880.2 1313.3,875.0 1303.0,872.4" fill="#7f8ba8" />
<polygon points="1380.4,833.0 1417.4,833.7 1419.9,949.0 1388.1,949.0 1383.8,880.2 1381.0,880.0" fill="#73809e" />
<polygon points="1313.3,875.0 1383.8,880.2 1388.1,949.0 1312.4,949.0" fill="#252a3a" />
<polygon points="1285.8,872.4 1313.3,874.2 1312.4,949.0 1285.8,949.0" fill="#7b9a36" />
<polygon points="1255.6,683.6 1319.0,685.3 1319.7,701.7 1369.8,701.7 1366.4,752.5 1320.8,751.5 1255.6,749.8" fill="#bcbdba" />
<polygon points="1255.6,703.5 1319.0,705.2 1320.8,750.5 1255.6,749.8" fill="#7f8ba8" />
<polygon points="1255.6,721.3 1305.3,721.3 1305.3,750.5 1255.6,749.8" fill="#252a3a" />
<polygon points="1397.9,645.1 1422.6,644.1 1422.0,665.7 1397.3,666.8" fill="#bcbdba" />
<polygon points="1397.3,666.8 1422.0,665.7 1422.0,683.6 1397.3,683.6" fill="#7f8ba8" />
<polygon points="700.4,862.0 701.5,859.8 758.9,850.3 759.6,884.5 740.4,887.2 740.4,949.0 713.2,949.0" fill="#bcbdba" />
<polygon points="710.2,867.7 758.9,858.0 759.6,884.5 740.4,887.2 740.4,949.0 721.5,949.0" fill="#7f8ba8" />
<polygon points="717.9,874.7 758.9,867.0 759.6,884.5 740.1,887.2 740.1,938.8 724.8,933.9" fill="#252a3a" />
<polygon points="823.9,739.7 849.7,755.2 816.5,798.6 790.7,799.4 784.6,793.2" fill="#bcbdba" />
<polygon points="830.0,754.4 843.6,761.8 817.8,797.4 792.0,798.6" fill="#7f8ba8" />
<polygon points="832.5,760.6 841.1,765.0 820.2,791.3 810.4,790.5" fill="#252a3a" />
<path d="M520.0 954.0 C521.0 953.0 521.2 953.0 525.7 948.0 C530.2 943.0 539.9 931.9 547.0 924.0 C554.1 916.1 562.2 907.9 568.4 900.6 C574.6 893.3 578.8 886.8 584.0 880.0 C589.2 873.2 595.2 865.6 599.9 859.8 C604.6 854.0 607.4 849.3 612.0 845.0 C616.6 840.7 623.1 836.5 627.8 833.8 C632.5 831.0 635.4 830.0 640.0 828.5 C644.6 827.0 643.7 827.0 655.6 824.5 C667.5 822.0 692.7 816.4 711.3 813.4 C729.9 810.4 752.2 808.4 767.0 806.5 C781.8 804.6 789.5 803.5 800.0 802.3 C810.5 801.0 817.5 800.2 830.0 799.0 C842.5 797.8 862.4 795.8 875.0 795.2 C887.6 794.6 900.3 795.2 905.4 795.2" fill="none" stroke="rgba(158,158,166,0.62)" stroke-width="7" stroke-linejoin="round" stroke-linecap="round" />
<path d="M502.0 954.0 C503.0 953.0 505.2 951.7 508.0 948.0 C510.8 944.3 515.1 937.1 519.0 932.0 C522.9 926.9 526.4 921.6 531.2 917.3 C536.0 913.0 542.1 909.1 548.0 906.2 C553.9 903.3 560.3 900.9 566.5 899.7 C572.7 898.5 576.3 897.4 585.0 898.8 C593.7 900.2 603.6 904.0 618.5 908.0 C633.4 912.0 655.7 918.9 674.2 922.9 C692.8 926.9 717.4 929.7 729.8 932.2 C742.2 934.7 740.9 936.0 748.4 937.8 C755.9 939.6 766.4 941.3 775.0 943.0 C783.6 944.7 793.8 946.7 800.0 948.0 C806.2 949.3 810.0 950.5 812.0 951.0" fill="none" stroke="rgba(158,158,166,0.62)" stroke-width="2.4" stroke-linejoin="round" stroke-linecap="round" />
<path d="M785.6 795.2 C791.3 791.3 809.6 778.8 820.0 772.0 C830.4 765.2 841.6 759.8 848.0 754.7 C854.4 749.6 855.1 745.3 858.1 741.2 C861.1 737.1 863.2 732.8 866.0 730.0 C868.8 727.2 870.1 725.8 875.0 724.4 C879.9 723.0 891.9 722.0 895.3 721.5" fill="none" stroke="rgba(158,158,166,0.62)" stroke-width="2.2" stroke-linejoin="round" stroke-linecap="round" />
<path d="M1606.0 511.0 C1605.2 511.1 1612.4 510.5 1601.3 511.8 C1590.2 513.1 1557.5 516.2 1539.4 518.6 C1521.4 521.0 1505.9 523.2 1493.0 526.3 C1480.1 529.4 1477.6 529.9 1462.1 537.1 C1446.6 544.3 1420.8 558.8 1400.2 569.6 C1379.6 580.4 1360.1 590.0 1338.4 602.1 C1316.8 614.2 1288.4 630.6 1270.3 642.3 C1252.2 653.9 1242.6 662.4 1230.0 672.0 C1217.4 681.6 1205.7 691.7 1194.9 700.0 C1184.1 708.3 1175.8 714.0 1165.0 722.0 C1154.2 730.0 1139.2 740.8 1130.0 748.0 C1120.8 755.2 1114.7 758.8 1110.0 765.0 C1105.3 771.2 1102.3 779.2 1102.0 785.0 C1101.7 790.8 1105.0 796.2 1108.0 800.0 C1111.0 803.8 1118.0 806.7 1120.0 808.0" fill="none" stroke="rgba(158,158,166,0.62)" stroke-width="2.8" stroke-linejoin="round" stroke-linecap="round" />
<path d="M1267.4 643.2 C1251.4 643.1 1195.8 642.7 1171.2 642.3 C1146.6 641.9 1132.4 641.3 1120.0 641.0 C1107.6 640.7 1103.0 639.8 1097.0 640.3 C1091.0 640.8 1087.4 642.0 1084.0 644.0 C1080.6 646.0 1078.5 648.0 1076.7 652.0 C1074.9 656.0 1074.0 656.7 1073.0 668.0 C1072.0 679.3 1071.7 699.7 1071.0 720.0 C1070.3 740.3 1069.3 778.3 1069.0 790.0" fill="none" stroke="rgba(158,158,166,0.62)" stroke-width="2.8" stroke-linejoin="round" stroke-linecap="round" />
<polyline points="1419.0,909.8 1465.6,910.6 1478.0,917.0 1521.4,948.5" fill="none" stroke="rgba(150,152,150,0.72)" stroke-width="2.6" stroke-linejoin="round" stroke-linecap="round" />
<polygon points="1013.9,696.0 1041.8,696.0 1041.8,751.0 1013.9,751.0" fill="#2e4a1f" />
<polygon points="1020.2,753.1 1042.7,753.1 1042.7,776.7 1020.2,776.7" fill="#cfc9b2" />
<polygon points="1017.1,742.6 1023.0,742.6 1023.0,751.0 1017.1,751.0" fill="#cfc9b2" />
<circle cx="1036.2" cy="744.7" r="3" fill="#cfc9b2"/>
<polyline points="1029.2,698.1 1029.2,739.1" fill="none" stroke="#7f8ba8" stroke-width="1.4" stroke-linejoin="round" stroke-linecap="round" />
<polyline points="1016.0,705.7 1029.2,715.5" fill="none" stroke="#7f8ba8" stroke-width="1.4" stroke-linejoin="round" stroke-linecap="round" />
<polyline points="1042.5,705.7 1029.2,715.5" fill="none" stroke="#7f8ba8" stroke-width="1.4" stroke-linejoin="round" stroke-linecap="round" />
<polyline points="1016.0,715.5 1029.2,725.2" fill="none" stroke="#7f8ba8" stroke-width="1.4" stroke-linejoin="round" stroke-linecap="round" />
<polyline points="1042.5,715.5 1029.2,725.2" fill="none" stroke="#7f8ba8" stroke-width="1.4" stroke-linejoin="round" stroke-linecap="round" />
<polygon points="1016.7,722.4 1025.0,728.0 1025.0,733.6 1016.7,733.6" fill="#8ca83c" />
<polygon points="1041.1,722.4 1033.4,728.0 1033.4,733.6 1041.1,733.6" fill="#8ca83c" />
<polygon points="951.9,730.8 958.9,731.5 959.6,753.1 950.5,765.6 939.4,763.5 940.1,758.6 946.4,757.2 951.9,746.1" fill="#d6d2c0" />
<polyline points="1007.6,665.6 959.6,730.8" fill="none" stroke="rgba(214,208,190,0.9)" stroke-width="2.6" stroke-linejoin="round" stroke-linecap="round" />
<polyline points="901.8,719.6 939.4,715.5" fill="none" stroke="rgba(176,176,176,0.56)" stroke-width="2.4" stroke-linejoin="round" stroke-linecap="round" />
<polyline points="901.8,725.9 951.9,722.4" fill="none" stroke="rgba(176,176,176,0.56)" stroke-width="2.4" stroke-linejoin="round" stroke-linecap="round" />
<polyline points="901.8,734.3 939.4,731.5" fill="none" stroke="rgba(176,176,176,0.56)" stroke-width="2.4" stroke-linejoin="round" stroke-linecap="round" />
<polyline points="924.1,697.4 925.5,733.6" fill="none" stroke="rgba(176,176,176,0.56)" stroke-width="2.4" stroke-linejoin="round" stroke-linecap="round" />
<polyline points="936.6,700.1 938.7,733.6" fill="none" stroke="rgba(176,176,176,0.56)" stroke-width="2.4" stroke-linejoin="round" stroke-linecap="round" />
<polyline points="931.0,736.4 942.2,775.3 942.2,820.1" fill="none" stroke="rgba(176,176,176,0.56)" stroke-width="2.4" stroke-linejoin="round" stroke-linecap="round" />
<polyline points="942.2,764.2 957.5,767.0 975.6,769.8" fill="none" stroke="rgba(176,176,176,0.56)" stroke-width="2.4" stroke-linejoin="round" stroke-linecap="round" />
<polyline points="942.2,779.5 979.8,785.1" fill="none" stroke="rgba(176,176,176,0.56)" stroke-width="2.4" stroke-linejoin="round" stroke-linecap="round" />
<polyline points="940.8,796.2 971.4,800.4" fill="none" stroke="rgba(176,176,176,0.56)" stroke-width="2.4" stroke-linejoin="round" stroke-linecap="round" />
<polyline points="960.3,754.5 963.8,765.6 957.5,775.3" fill="none" stroke="rgba(176,176,176,0.56)" stroke-width="2.4" stroke-linejoin="round" stroke-linecap="round" />
<polyline points="974.2,702.9 1010.4,702.9" fill="none" stroke="rgba(176,176,176,0.56)" stroke-width="2.4" stroke-linejoin="round" stroke-linecap="round" />
<polyline points="996.5,704.3 989.5,725.2 990.9,753.1 991.6,789.3 985.3,803.2" fill="none" stroke="rgba(176,176,176,0.56)" stroke-width="2.4" stroke-linejoin="round" stroke-linecap="round" />
<polyline points="1011.1,696.0 1010.4,775.3" fill="none" stroke="rgba(176,176,176,0.56)" stroke-width="2.4" stroke-linejoin="round" stroke-linecap="round" />
<polyline points="989.5,722.4 1010.4,722.4" fill="none" stroke="rgba(176,176,176,0.56)" stroke-width="2.4" stroke-linejoin="round" stroke-linecap="round" />
<polyline points="961.7,754.5 1011.8,754.5" fill="none" stroke="rgba(176,176,176,0.56)" stroke-width="2.4" stroke-linejoin="round" stroke-linecap="round" />
<polyline points="975.6,755.8 974.2,789.3 970.0,820.1" fill="none" stroke="rgba(176,176,176,0.56)" stroke-width="2.4" stroke-linejoin="round" stroke-linecap="round" />
<polyline points="991.6,775.3 1046.6,777.4" fill="none" stroke="rgba(176,176,176,0.56)" stroke-width="2.4" stroke-linejoin="round" stroke-linecap="round" />
<polyline points="1024.3,778.1 1025.7,820.1" fill="none" stroke="rgba(176,176,176,0.56)" stroke-width="2.4" stroke-linejoin="round" stroke-linecap="round" />
<polyline points="1034.1,779.5 1039.7,796.2 1045.2,803.2" fill="none" stroke="rgba(176,176,176,0.56)" stroke-width="2.4" stroke-linejoin="round" stroke-linecap="round" />
<polyline points="906.0,790.7 919.9,803.2 932.4,820.1" fill="none" stroke="rgba(176,176,176,0.56)" stroke-width="2.4" stroke-linejoin="round" stroke-linecap="round" />
<path d="M906.7 795.1 C909.5 798.0 918.1 806.6 923.9 812.3 C929.6 818.0 935.8 823.8 941.1 829.5 C946.4 835.2 951.7 841.8 955.8 846.7 C959.9 851.6 962.8 855.1 965.7 859.0 C968.5 862.9 971.8 868.2 973.0 870.0" fill="none" stroke="rgba(150,152,158,0.72)" stroke-width="9.5" stroke-linejoin="round" stroke-linecap="round" />
<path d="M953.4 840.5 C952.1 842.4 947.4 847.3 946.0 851.6 C944.6 855.9 944.4 861.4 944.8 866.3 C945.2 871.3 947.8 878.6 948.5 881.1" fill="none" stroke="rgba(150,152,158,0.72)" stroke-width="5.5" stroke-linejoin="round" stroke-linecap="round" />
<path d="M974.3 814.7 C973.2 817.0 970.8 824.6 968.1 828.3 C965.4 831.9 959.9 835.4 958.3 836.9" fill="none" stroke="rgba(150,152,158,0.72)" stroke-width="4.5" stroke-linejoin="round" stroke-linecap="round" />
<path d="M1005.0 828.3 C1003.3 829.1 997.6 832.8 995.1 833.2 C992.7 833.6 991.0 831.1 990.2 830.7" fill="none" stroke="rgba(150,152,158,0.72)" stroke-width="3.5" stroke-linejoin="round" stroke-linecap="round" />
<polyline points="860.0,849.1 896.9,836.9 912.8,836.9" fill="none" stroke="rgba(176,176,176,0.56)" stroke-width="2.4" stroke-linejoin="round" stroke-linecap="round" />
<polyline points="909.1,840.5 860.0,922.9" fill="none" stroke="rgba(176,176,176,0.56)" stroke-width="2.4" stroke-linejoin="round" stroke-linecap="round" />
<polyline points="912.8,861.4 900.5,884.8 878.4,935.1" fill="none" stroke="rgba(176,176,176,0.56)" stroke-width="2.4" stroke-linejoin="round" stroke-linecap="round" />
<polyline points="900.5,863.9 917.7,878.6" fill="none" stroke="rgba(176,176,176,0.56)" stroke-width="2.4" stroke-linejoin="round" stroke-linecap="round" />
<polyline points="907.9,884.8 919.0,890.9" fill="none" stroke="rgba(176,176,176,0.56)" stroke-width="2.4" stroke-linejoin="round" stroke-linecap="round" />
<polyline points="862.5,903.2 878.4,935.1 896.9,941.3" fill="none" stroke="rgba(176,176,176,0.56)" stroke-width="2.4" stroke-linejoin="round" stroke-linecap="round" />
<polyline points="919.0,906.9 938.6,930.2" fill="none" stroke="rgba(176,176,176,0.56)" stroke-width="2.4" stroke-linejoin="round" stroke-linecap="round" />
<polyline points="936.2,898.3 948.5,886.0 962.0,902.0 953.4,910.6" fill="none" stroke="rgba(176,176,176,0.56)" stroke-width="2.4" stroke-linejoin="round" stroke-linecap="round" />
<polyline points="941.1,868.8 970.6,886.0 975.5,878.6 962.0,863.9 948.5,849.1" fill="none" stroke="rgba(176,176,176,0.56)" stroke-width="2.4" stroke-linejoin="round" stroke-linecap="round" />
<polyline points="926.3,830.7 936.2,816.0 946.0,807.4" fill="none" stroke="rgba(176,176,176,0.56)" stroke-width="2.4" stroke-linejoin="round" stroke-linecap="round" />
<polyline points="1012.3,800.0 1011.1,814.7 1001.3,828.3 990.2,830.7" fill="none" stroke="rgba(176,176,176,0.56)" stroke-width="2.4" stroke-linejoin="round" stroke-linecap="round" />
<polyline points="1022.2,812.3 1014.8,828.3 1013.6,840.5" fill="none" stroke="rgba(176,176,176,0.56)" stroke-width="2.4" stroke-linejoin="round" stroke-linecap="round" />
<polyline points="1044.3,807.4 1041.8,861.4 1038.1,935.1" fill="none" stroke="rgba(176,176,176,0.56)" stroke-width="2.4" stroke-linejoin="round" stroke-linecap="round" />
<polyline points="996.4,922.9 1007.4,924.1 1006.2,947.4" fill="none" stroke="rgba(176,176,176,0.56)" stroke-width="2.4" stroke-linejoin="round" stroke-linecap="round" />
<polyline points="993.9,863.9 1032.0,868.8 1038.1,878.6 1035.7,935.1" fill="none" stroke="rgba(176,176,176,0.56)" stroke-width="2.4" stroke-linejoin="round" stroke-linecap="round" />
<polyline points="1115.6,830.7 1113.7,948.3" fill="none" stroke="rgba(176,176,176,0.56)" stroke-width="2.4" stroke-linejoin="round" stroke-linecap="round" />
<polyline points="1124.8,830.7 1118.6,948.3" fill="none" stroke="rgba(176,176,176,0.56)" stroke-width="2.4" stroke-linejoin="round" stroke-linecap="round" />
<polyline points="1126.0,829.5 1178.8,829.5 1180.0,859.0 1212.0,861.4 1221.8,868.8 1224.3,878.6 1224.3,902.0" fill="none" stroke="rgba(176,176,176,0.56)" stroke-width="2.4" stroke-linejoin="round" stroke-linecap="round" />
<polyline points="1126.0,840.5 1178.8,842.4" fill="none" stroke="rgba(176,176,176,0.56)" stroke-width="2.4" stroke-linejoin="round" stroke-linecap="round" />
<polyline points="1160.4,897.1 1240.0,902.6" fill="none" stroke="rgba(176,176,176,0.56)" stroke-width="2.4" stroke-linejoin="round" stroke-linecap="round" />
<polyline points="1156.7,919.2 1153.0,937.6 1116.2,932.7" fill="none" stroke="rgba(176,176,176,0.56)" stroke-width="2.4" stroke-linejoin="round" stroke-linecap="round" />
<polyline points="1071.9,819.7 1113.7,819.7" fill="none" stroke="rgba(176,176,176,0.56)" stroke-width="2.4" stroke-linejoin="round" stroke-linecap="round" />
<polyline points="1070.7,800.0 1070.7,836.9" fill="none" stroke="rgba(176,176,176,0.56)" stroke-width="2.4" stroke-linejoin="round" stroke-linecap="round" />
<polyline points="1084.2,836.9 1113.7,838.1" fill="none" stroke="rgba(176,176,176,0.56)" stroke-width="2.4" stroke-linejoin="round" stroke-linecap="round" />
<polyline points="1086.7,828.3 1111.3,828.9" fill="none" stroke="rgba(176,176,176,0.56)" stroke-width="2.4" stroke-linejoin="round" stroke-linecap="round" />
<polyline points="1070.7,889.7 1092.8,905.7 1113.7,909.3" fill="none" stroke="rgba(176,176,176,0.56)" stroke-width="2.4" stroke-linejoin="round" stroke-linecap="round" />
<polyline points="1083.0,916.7 1099.0,922.9 1108.8,935.1" fill="none" stroke="rgba(176,176,176,0.56)" stroke-width="2.4" stroke-linejoin="round" stroke-linecap="round" />
<polyline points="1086.7,948.3 1092.8,929.0 1101.4,916.7" fill="none" stroke="rgba(176,176,176,0.56)" stroke-width="2.4" stroke-linejoin="round" stroke-linecap="round" />
<polyline points="1042.5,800.0 1044.9,859.0" fill="none" stroke="rgba(176,176,176,0.56)" stroke-width="2.4" stroke-linejoin="round" stroke-linecap="round" />
<path d="M1180.0 858.7 C1184.3 858.7 1199.5 857.2 1205.8 858.7 C1212.1 860.1 1214.8 863.3 1217.8 867.3 C1220.8 871.3 1222.7 877.0 1223.9 882.8 C1225.0 888.5 1224.6 898.5 1224.7 901.7" fill="none" stroke="rgba(176,176,176,0.56)" stroke-width="1.8" stroke-linejoin="round" stroke-linecap="round" />
<polyline points="1180.0,898.2 1317.6,907.7 1460.0,910.3" fill="none" stroke="rgba(150,150,150,0.85)" stroke-width="1.6" stroke-linejoin="round" stroke-linecap="round" />
<polygon points="1095.3,842.4 1113.7,842.4 1112.5,883.5 1101.4,883.5 1096.5,868.8" fill="#2f4a1e" />
<polygon points="1063.3,866.3 1078.1,861.4 1076.9,871.3 1071.9,874.9" fill="#8ca83c" />
<polygon points="1016.0,933.9 1030.8,933.9 1030.1,948.3 1008.6,948.3" fill="#2f4a1e" />
<rect x="-8.0" y="-6.8" width="16.0" height="13.5" fill="none" stroke="#ff3dd4" stroke-width="3.5" opacity="0.33" transform="translate(1097.1 865.1) rotate(25)"/>
<rect x="-8.0" y="-6.8" width="16.0" height="13.5" fill="#7a6236" stroke="#ff3dd4" stroke-width="1.1" transform="translate(1097.1 865.1) rotate(25)"/>
<rect x="-6.8" y="-5.5" width="13.5" height="11.1" fill="none" stroke="#1fe6d6" stroke-width="3.2" opacity="0.33" transform="translate(1087.3 873.7) rotate(-35)"/>
<rect x="-6.8" y="-5.5" width="13.5" height="11.1" fill="#7a6236" stroke="#1fe6d6" stroke-width="1.0" transform="translate(1087.3 873.7) rotate(-35)"/>
<rect x="-8.6" y="-8.0" width="17.2" height="16.0" fill="none" stroke="#ff4a1f" stroke-width="3.5" opacity="0.33" transform="translate(1089.8 886.0) rotate(-40)"/>
<rect x="-8.6" y="-8.0" width="17.2" height="16.0" fill="#7a6236" stroke="#ff4a1f" stroke-width="1.1" transform="translate(1089.8 886.0) rotate(-40)"/>
<rect x="-8.0" y="-6.8" width="16.0" height="13.5" fill="none" stroke="#f0a0ff" stroke-width="3.5" opacity="0.33" transform="translate(1066.4 905.7) rotate(-40)"/>
<rect x="-8.0" y="-6.8" width="16.0" height="13.5" fill="#7a6236" stroke="#f0a0ff" stroke-width="1.1" transform="translate(1066.4 905.7) rotate(-40)"/>
<rect x="-5.5" y="-6.8" width="11.1" height="13.5" fill="#7a6236" transform="translate(1047.4 884.8) rotate(0)"/>
<rect x="-4.3" y="-6.8" width="8.6" height="13.5" fill="none" stroke="#ffe11f" stroke-width="2.6" opacity="0.33" transform="translate(1064.6 878.6) rotate(10)"/>
<rect x="-4.3" y="-6.8" width="8.6" height="13.5" fill="#6e5a33" stroke="#ffe11f" stroke-width="0.8" transform="translate(1064.6 878.6) rotate(10)"/>
<rect x="-3.7" y="-3.7" width="7.4" height="7.4" fill="none" stroke="#1fe6a0" stroke-width="2.9" opacity="0.33" transform="translate(1047.4 897.1) rotate(-20)"/>
<rect x="-3.7" y="-3.7" width="7.4" height="7.4" fill="#c9b8e8" stroke="#1fe6a0" stroke-width="0.9" transform="translate(1047.4 897.1) rotate(-20)"/>
<rect x="-4.9" y="-4.9" width="9.8" height="9.8" fill="#6e5a33" transform="translate(1071.3 840.5) rotate(5)"/>
<rect x="-4.3" y="-3.7" width="8.6" height="7.4" fill="#7a6236" transform="translate(1069.5 854.1) rotate(-30)"/>
<rect x="-4.9" y="-4.3" width="9.8" height="8.6" fill="#5f5138" transform="translate(1052.9 835.6) rotate(0)"/>
<rect x="-5.5" y="-4.9" width="11.1" height="9.8" fill="#6b4a4a" transform="translate(1056.0 852.8) rotate(0)"/>
<rect x="-7.4" y="-5.5" width="14.7" height="11.1" fill="#6e5a33" transform="translate(1076.9 913.0) rotate(-40)"/>
<rect x="-3.7" y="-4.3" width="7.4" height="8.6" fill="#d8492a" transform="translate(1051.7 930.2) rotate(0)"/>
<rect x="-3.4" y="-3.4" width="6.8" height="6.8" fill="#c85a4a" transform="translate(1103.3 900.7) rotate(0)"/>
<rect x="-4.9" y="-6.1" width="9.8" height="12.3" fill="#7a6236" transform="translate(1042.5 920.4) rotate(0)"/>
<rect x="-4.3" y="-3.7" width="8.6" height="7.4" fill="#7a6236" transform="translate(1065.8 938.8) rotate(-35)"/>
<rect x="-3.7" y="-2.5" width="7.4" height="4.9" fill="#7a6236" transform="translate(1079.3 927.8) rotate(30)"/>
<rect x="-4.3" y="-4.3" width="8.6" height="8.6" fill="none" stroke="#ff2a6e" stroke-width="3.2" opacity="0.33" transform="translate(998.8 843.0) rotate(0)"/>
<rect x="-4.3" y="-4.3" width="8.6" height="8.6" fill="#7a6236" stroke="#ff2a6e" stroke-width="1.0" transform="translate(998.8 843.0) rotate(0)"/>
<rect x="-6.8" y="-4.3" width="13.5" height="8.6" fill="none" stroke="#ff1fa8" stroke-width="3.2" opacity="0.33" transform="translate(988.4 851.0) rotate(0)"/>
<rect x="-6.8" y="-4.3" width="13.5" height="8.6" fill="#7a6236" stroke="#ff1fa8" stroke-width="1.0" transform="translate(988.4 851.0) rotate(0)"/>
<rect x="-6.8" y="-6.8" width="13.5" height="13.5" fill="none" stroke="#ff1fa8" stroke-width="3.2" opacity="0.33" transform="translate(1000.0 881.1) rotate(0)"/>
<rect x="-6.8" y="-6.8" width="13.5" height="13.5" fill="#7a6236" stroke="#ff1fa8" stroke-width="1.0" transform="translate(1000.0 881.1) rotate(0)"/>
<rect x="-4.9" y="-5.5" width="9.8" height="11.1" fill="none" stroke="#e8e0ff" stroke-width="3.2" opacity="0.33" transform="translate(982.9 884.8) rotate(15)"/>
<rect x="-4.9" y="-5.5" width="9.8" height="11.1" fill="#7a6236" stroke="#e8e0ff" stroke-width="1.0" transform="translate(982.9 884.8) rotate(15)"/>
<rect x="-3.7" y="-3.7" width="7.4" height="7.4" fill="none" stroke="#ff1fa8" stroke-width="3.2" opacity="0.33" transform="translate(978.6 893.4) rotate(10)"/>
<rect x="-3.7" y="-3.7" width="7.4" height="7.4" fill="#7a6236" stroke="#ff1fa8" stroke-width="1.0" transform="translate(978.6 893.4) rotate(10)"/>
<rect x="-4.9" y="-4.9" width="9.8" height="9.8" fill="none" stroke="#f4ff1f" stroke-width="3.2" opacity="0.33" transform="translate(999.4 895.8) rotate(0)"/>
<rect x="-4.9" y="-4.9" width="9.8" height="9.8" fill="#7a6236" stroke="#f4ff1f" stroke-width="1.0" transform="translate(999.4 895.8) rotate(0)"/>
<rect x="-5.5" y="-3.7" width="11.1" height="7.4" fill="none" stroke="#f0d0ff" stroke-width="3.2" opacity="0.33" transform="translate(977.3 903.2) rotate(5)"/>
<rect x="-5.5" y="-3.7" width="11.1" height="7.4" fill="#7a6236" stroke="#f0d0ff" stroke-width="1.0" transform="translate(977.3 903.2) rotate(5)"/>
<rect x="-5.5" y="-4.9" width="11.1" height="9.8" fill="none" stroke="#ff6a1f" stroke-width="3.2" opacity="0.33" transform="translate(997.6 906.9) rotate(10)"/>
<rect x="-5.5" y="-4.9" width="11.1" height="9.8" fill="#7a6236" stroke="#ff6a1f" stroke-width="1.0" transform="translate(997.6 906.9) rotate(10)"/>
<rect x="-4.3" y="-3.7" width="8.6" height="7.4" fill="none" stroke="#ff1fd0" stroke-width="3.2" opacity="0.33" transform="translate(997.6 917.3) rotate(35)"/>
<rect x="-4.3" y="-3.7" width="8.6" height="7.4" fill="#7a6236" stroke="#ff1fd0" stroke-width="1.0" transform="translate(997.6 917.3) rotate(35)"/>
<rect x="-6.8" y="-6.1" width="13.5" height="12.3" fill="none" stroke="#ff1fd0" stroke-width="3.2" opacity="0.33" transform="translate(1029.5 884.8) rotate(0)"/>
<rect x="-6.8" y="-6.1" width="13.5" height="12.3" fill="#7a6236" stroke="#ff1fd0" stroke-width="1.0" transform="translate(1029.5 884.8) rotate(0)"/>
<rect x="-4.9" y="-5.5" width="9.8" height="11.1" fill="none" stroke="#ff1f8a" stroke-width="3.2" opacity="0.33" transform="translate(1029.5 899.5) rotate(0)"/>
<rect x="-4.9" y="-5.5" width="9.8" height="11.1" fill="#7a6236" stroke="#ff1f8a" stroke-width="1.0" transform="translate(1029.5 899.5) rotate(0)"/>
<rect x="-5.5" y="-4.9" width="11.1" height="9.8" fill="none" stroke="#ff1fa8" stroke-width="3.2" opacity="0.33" transform="translate(1024.6 910.0) rotate(10)"/>
<rect x="-5.5" y="-4.9" width="11.1" height="9.8" fill="#7a6236" stroke="#ff1fa8" stroke-width="1.0" transform="translate(1024.6 910.0) rotate(10)"/>
<rect x="-2.5" y="-3.1" width="4.9" height="6.1" fill="none" stroke="#ff1fa8" stroke-width="3.2" opacity="0.33" transform="translate(976.1 914.9) rotate(0)"/>
<rect x="-2.5" y="-3.1" width="4.9" height="6.1" fill="#7a6236" stroke="#ff1fa8" stroke-width="1.0" transform="translate(976.1 914.9) rotate(0)"/>
<rect x="-4.3" y="-3.7" width="8.6" height="7.4" fill="none" stroke="#f8d8ff" stroke-width="3.2" opacity="0.33" transform="translate(997.6 936.4) rotate(-40)"/>
<rect x="-4.3" y="-3.7" width="8.6" height="7.4" fill="#7a6236" stroke="#f8d8ff" stroke-width="1.0" transform="translate(997.6 936.4) rotate(-40)"/>
<rect x="-3.7" y="-2.1" width="7.4" height="4.3" fill="none" stroke="#f8c0ff" stroke-width="3.2" opacity="0.33" transform="translate(1011.7 938.8) rotate(35)"/>
<rect x="-3.7" y="-2.1" width="7.4" height="4.3" fill="#7a6236" stroke="#f8c0ff" stroke-width="1.0" transform="translate(1011.7 938.8) rotate(35)"/>
<rect x="-3.1" y="-2.5" width="6.1" height="4.9" fill="none" stroke="#ff1fd0" stroke-width="3.2" opacity="0.33" transform="translate(998.2 867.6) rotate(0)"/>
<rect x="-3.1" y="-2.5" width="6.1" height="4.9" fill="#7a6236" stroke="#ff1fd0" stroke-width="1.0" transform="translate(998.2 867.6) rotate(0)"/>
<rect x="-3.1" y="-3.7" width="6.1" height="7.4" fill="none" stroke="#1fe6a0" stroke-width="3.2" opacity="0.33" transform="translate(1048.0 897.1) rotate(-20)"/>
<rect x="-3.1" y="-3.7" width="6.1" height="7.4" fill="#c9c0e8" stroke="#1fe6a0" stroke-width="1.0" transform="translate(1048.0 897.1) rotate(-20)"/>
<rect x="-4.9" y="-4.9" width="9.8" height="9.8" fill="#86693a" transform="translate(1017.9 874.9) rotate(0)"/>
<rect x="-5.5" y="-5.5" width="11.1" height="11.1" fill="#6e5a33" transform="translate(1010.5 917.9) rotate(5)"/>
<rect x="-4.3" y="-4.3" width="8.6" height="8.6" fill="#5f5138" transform="translate(1048.0 873.7) rotate(0)"/>
<rect x="-5.5" y="-6.8" width="11.1" height="13.5" fill="#7a6236" transform="translate(1049.2 886.0) rotate(0)"/>
<rect x="-4.3" y="-5.5" width="8.6" height="11.1" fill="#7a6236" transform="translate(1025.8 922.9) rotate(0)"/>
<rect x="-4.3" y="-6.1" width="8.6" height="12.3" fill="#7a6236" transform="translate(1043.0 919.2) rotate(0)"/>
<rect x="-3.7" y="-4.3" width="7.4" height="8.6" fill="#86693a" transform="translate(1012.9 931.4) rotate(0)"/>
<rect x="-3.7" y="-4.3" width="7.4" height="8.6" fill="#7a6236" transform="translate(977.9 929.0) rotate(-20)"/>
<rect x="-3.7" y="-3.7" width="7.4" height="7.4" fill="#6e5a33" transform="translate(966.9 862.7) rotate(30)"/>
<rect x="-3.1" y="-2.5" width="6.1" height="4.9" fill="#7a6236" transform="translate(984.1 820.9) rotate(-30)"/>
<rect x="-5.5" y="-4.9" width="11.1" height="9.8" fill="#7a6236" transform="translate(946.0 804.3) rotate(0)"/>
<rect x="-5.5" y="-5.5" width="11.1" height="11.1" fill="#5f5138" transform="translate(962.0 806.1) rotate(0)"/>
<rect x="-3.1" y="-3.1" width="6.1" height="6.1" fill="#5f5138" transform="translate(948.5 942.5) rotate(-20)"/>
<rect x="-4.3" y="-4.3" width="8.6" height="8.6" fill="#7a6236" transform="translate(926.3 940.0) rotate(-30)"/>
<rect x="-4.9" y="-4.9" width="9.8" height="9.8" fill="#6e5a33" transform="translate(1055.3 834.4) rotate(0)"/>
<rect x="-8.6" y="-4.3" width="17.2" height="8.6" fill="#7a6236" transform="translate(1028.3 846.7) rotate(0)"/>
<rect x="-2.5" y="-3.1" width="4.9" height="6.1" fill="#5f5138" transform="translate(1005.6 871.3) rotate(0)"/>
<rect x="-2.5" y="-2.5" width="4.9" height="4.9" fill="#7a6236" transform="translate(1030.8 873.7) rotate(0)"/>
<rect x="-4.9" y="-4.9" width="9.8" height="9.8" fill="#d8461f" transform="translate(934.3 882.3) rotate(-20)"/>
<rect x="-6.8" y="-2.8" width="13.5" height="5.5" fill="#e87a1f" transform="translate(1033.2 832.2) rotate(5)"/>
<rect x="-3.1" y="-3.1" width="6.1" height="6.1" fill="#3f7fd8" transform="translate(1012.9 815.4) rotate(35)"/>
<rect x="-4.9" y="-4.3" width="9.8" height="8.6" fill="#7a3f4f" transform="translate(1055.3 854.1) rotate(0)"/>
<rect x="-3.7" y="-4.3" width="7.4" height="8.6" fill="#d8492a" transform="translate(1052.3 930.2) rotate(0)"/>
<rect x="-1.9" y="-2.3" width="3.9" height="4.6" fill="#7a4a6a" transform="translate(961.6 858.9) rotate(-35)"/>
<rect x="-2.3" y="-2.2" width="4.6" height="4.4" fill="#8fb0d8" transform="translate(947.7 859.8) rotate(30)"/>
<rect x="-1.9" y="-1.7" width="3.8" height="3.3" fill="#d070e0" transform="translate(924.3 902.8) rotate(-35)"/>
<rect x="-2.5" y="-2.5" width="5.0" height="5.0" fill="#6e5a33" transform="translate(950.9 895.5) rotate(40)"/>
<rect x="-1.9" y="-2.5" width="3.7" height="5.0" fill="#86693a" transform="translate(937.6 871.1) rotate(-35)"/>
<rect x="-2.9" y="-1.9" width="5.8" height="3.8" fill="#b050c8" transform="translate(946.1 932.7) rotate(-35)"/>
<rect x="-2.2" y="-2.7" width="4.3" height="5.4" fill="#d070e0" transform="translate(945.4 862.9) rotate(40)"/>
<rect x="-3.0" y="-2.0" width="6.1" height="3.9" fill="#6e5a33" transform="translate(947.8 924.2) rotate(30)"/>
<rect x="-3.1" y="-2.7" width="6.2" height="5.4" fill="#b050c8" transform="translate(948.9 891.5) rotate(40)"/>
<rect x="-2.7" y="-2.8" width="5.5" height="5.5" fill="#86693a" transform="translate(922.1 915.6) rotate(40)"/>
<rect x="-2.2" y="-2.7" width="4.4" height="5.4" fill="#8fb0d8" transform="translate(955.9 933.9) rotate(30)"/>
<rect x="-1.9" y="-1.9" width="3.9" height="3.8" fill="#7a4a6a" transform="translate(950.5 895.2) rotate(-20)"/>
<rect x="-1.7" y="-2.1" width="3.4" height="4.2" fill="#8fb0d8" transform="translate(939.1 932.3) rotate(30)"/>
<rect x="-2.0" y="-2.0" width="4.1" height="4.1" fill="#7a4a6a" transform="translate(961.2 931.6) rotate(30)"/>
<rect x="-2.0" y="-2.1" width="3.9" height="4.3" fill="#86693a" transform="translate(928.1 869.5) rotate(-20)"/>
<rect x="-2.1" y="-1.7" width="4.2" height="3.4" fill="#6e5a33" transform="translate(946.6 906.6) rotate(-35)"/>
<rect x="-3.1" y="-2.5" width="6.3" height="5.0" fill="#7a4a6a" transform="translate(965.4 923.3) rotate(40)"/>
<rect x="-2.7" y="-1.6" width="5.4" height="3.2" fill="#7a6236" transform="translate(939.6 856.9) rotate(-35)"/>
<rect x="-2.6" y="-1.7" width="5.3" height="3.3" fill="#b050c8" transform="translate(941.7 857.5) rotate(-20)"/>
<rect x="-1.7" y="-1.8" width="3.3" height="3.6" fill="#8fb0d8" transform="translate(967.9 907.0) rotate(40)"/>
<rect x="-2.6" y="-2.1" width="5.3" height="4.2" fill="#6e5a33" transform="translate(951.7 940.6) rotate(-35)"/>
<rect x="-2.4" y="-1.6" width="4.9" height="3.3" fill="#9fc8e0" transform="translate(970.2 892.5) rotate(-35)"/>
<rect x="-2.8" y="-2.2" width="5.6" height="4.3" fill="#9fc8e0" transform="translate(957.2 893.7) rotate(-20)"/>
<rect x="-1.6" y="-2.2" width="3.2" height="4.4" fill="#86693a" transform="translate(926.5 900.1) rotate(-35)"/>
<rect x="-2.2" y="-1.8" width="4.4" height="3.6" fill="#7a6236" transform="translate(945.7 935.9) rotate(30)"/>
<rect x="-2.9" y="-1.8" width="5.9" height="3.6" fill="#7a4a6a" transform="translate(950.6 924.2) rotate(-20)"/>
<rect x="-2.5" y="-2.0" width="5.0" height="3.9" fill="#d070e0" transform="translate(957.1 869.0) rotate(-35)"/>
<rect x="-1.9" y="-2.3" width="3.8" height="4.6" fill="#6e5a33" transform="translate(959.7 893.1) rotate(30)"/>
<rect x="-2.2" y="-2.7" width="4.4" height="5.5" fill="#7a6236" transform="translate(960.7 917.8) rotate(-35)"/>
<rect x="-2.2" y="-2.1" width="4.3" height="4.3" fill="#6e5a33" transform="translate(924.2 892.9) rotate(-35)"/>
<rect x="-2.7" y="-2.6" width="5.4" height="5.1" fill="#7a4a6a" transform="translate(965.9 880.5) rotate(-35)"/>
<rect x="-2.4" y="-1.8" width="4.8" height="3.5" fill="#b050c8" transform="translate(959.3 920.4) rotate(30)"/>
<rect x="-2.3" y="-2.0" width="4.5" height="4.1" fill="#8fb0d8" transform="translate(960.3 942.2) rotate(-35)"/>
<rect x="-3.0" y="-1.7" width="6.0" height="3.4" fill="#9fc8e0" transform="translate(926.8 935.6) rotate(40)"/>
<rect x="-1.6" y="-2.5" width="3.2" height="5.0" fill="#8fb0d8" transform="translate(927.0 900.6) rotate(-35)"/>
<rect x="-3.1" y="-1.8" width="6.1" height="3.6" fill="#7a6236" transform="translate(941.4 932.4) rotate(30)"/>
<rect x="-2.6" y="-1.9" width="5.2" height="3.7" fill="#8fb0d8" transform="translate(934.1 870.3) rotate(40)"/>
<rect x="-3.2" y="-2.3" width="6.4" height="4.7" fill="#8fb0d8" transform="translate(922.1 919.4) rotate(40)"/>
<rect x="-1.6" y="-2.1" width="3.1" height="4.2" fill="#d070e0" transform="translate(946.4 898.1) rotate(-20)"/>
<rect x="-1.8" y="-2.3" width="3.6" height="4.6" fill="#d070e0" transform="translate(959.0 861.4) rotate(-35)"/>
<rect x="-2.6" y="-2.5" width="5.1" height="5.0" fill="#d070e0" transform="translate(935.8 897.6) rotate(-35)"/>
<rect x="-7.0" y="-6.3" width="13.9" height="12.5" fill="#806a3c" transform="translate(943.6 804.6) rotate(0)"/>
<rect x="-7.0" y="-6.3" width="13.9" height="12.5" fill="#806a3c" transform="translate(965.8 804.6) rotate(0)"/>
<rect x="-7.0" y="-4.9" width="13.9" height="9.7" fill="#75603a" transform="translate(964.5 789.3) rotate(0)"/>
<rect x="-5.6" y="-2.1" width="11.1" height="4.2" fill="#806a3c" transform="translate(999.3 748.2) rotate(0)"/>
<rect x="-6.3" y="-1.7" width="12.5" height="3.5" fill="#806a3c" transform="translate(997.9 753.1) rotate(0)"/>
<rect x="-2.1" y="-4.2" width="4.2" height="8.4" fill="#8c7648" transform="translate(981.2 760.0) rotate(0)"/>
<rect x="-5.6" y="-1.4" width="11.1" height="2.8" fill="#75603a" transform="translate(997.9 771.2) rotate(0)"/>
<rect x="-2.8" y="-2.8" width="5.6" height="5.6" fill="#8c7648" transform="translate(933.8 780.9) rotate(0)"/>
<rect x="-2.1" y="-3.5" width="4.2" height="7.0" fill="#806a3c" transform="translate(933.8 794.8) rotate(0)"/>
<rect x="-1.7" y="-4.9" width="3.5" height="9.7" fill="#806a3c" transform="translate(973.5 739.1) rotate(0)"/>
<rect x="-1.7" y="-4.9" width="3.5" height="9.7" fill="#75603a" transform="translate(1021.6 789.3) rotate(0)"/>
<rect x="-4.2" y="-8.4" width="8.4" height="16.7" fill="#5a4f9a" transform="translate(984.0 804.6) rotate(0)"/>
<rect x="-3.5" y="-3.5" width="7.0" height="7.0" fill="#3f7fd8" transform="translate(1013.2 815.7) rotate(20)"/>
<rect x="-1.7" y="-2.8" width="3.5" height="5.6" fill="#8fa8f0" transform="translate(957.5 762.8) rotate(0)"/>
<rect x="-1.7" y="-2.4" width="3.5" height="4.9" fill="#8fa8f0" transform="translate(958.2 772.6) rotate(0)"/>
<rect x="-1.4" y="-1.7" width="2.8" height="3.5" fill="#f0a0e0" transform="translate(971.4 750.3) rotate(0)"/>
<rect x="-1.4" y="-1.7" width="2.8" height="3.5" fill="#e8d0e8" transform="translate(969.3 757.9) rotate(0)"/>
<path d="M840.1 860.6 C843.6 859.3 854.8 855.2 861.4 852.7 C868.1 850.3 873.6 848.3 879.8 846.0 C886.0 843.8 893.3 840.5 898.7 839.1 C904.0 837.6 907.8 836.4 911.8 837.3 C915.9 838.2 920.7 841.4 923.0 844.4 C925.3 847.4 925.9 850.6 925.8 855.3 C925.7 860.0 924.1 866.6 922.3 872.5 C920.5 878.4 917.4 884.9 915.1 890.5 C912.8 896.1 909.5 901.2 908.7 906.1 C907.9 911.0 908.2 915.6 910.4 919.9 C912.7 924.3 917.5 927.9 922.3 932.2 C927.2 936.5 936.8 943.5 939.7 945.8" fill="none" stroke="rgba(176,176,176,0.56)" stroke-width="2.2" stroke-linejoin="round" stroke-linecap="round" />
<path d="M837.1 852.8 C840.7 851.4 851.9 847.3 858.6 844.9 C865.2 842.4 870.6 840.5 877.0 838.2 C883.3 835.8 890.4 832.4 896.5 830.9 C902.7 829.4 908.3 827.7 913.8 829.1 C919.3 830.5 926.2 834.9 929.6 839.2 C933.0 843.6 934.1 849.4 934.2 855.3 C934.3 861.2 932.2 868.5 930.3 874.9 C928.4 881.3 925.1 888.2 922.9 893.7 C920.7 899.1 917.8 904.0 916.9 907.7 C916.1 911.4 915.9 912.8 917.8 915.9 C919.6 918.9 923.3 921.9 927.9 925.8 C932.4 929.7 942.1 937.0 944.9 939.2" fill="none" stroke="rgba(176,176,176,0.56)" stroke-width="2.2" stroke-linejoin="round" stroke-linecap="round" />
<path d="M834.7 852.7 C835.9 855.2 839.8 862.6 842.0 868.0 C844.2 873.4 846.1 879.7 848.0 885.0 C849.9 890.3 851.1 893.3 853.4 900.0 C855.7 906.7 858.9 916.8 862.0 925.0 C865.1 933.2 870.3 945.0 872.0 949.0" fill="none" stroke="rgba(176,176,176,0.56)" stroke-width="2.2" stroke-linejoin="round" stroke-linecap="round" />
<path d="M838.6 856.7 C842.2 855.4 853.4 851.2 860.0 848.8 C866.6 846.4 872.1 844.4 878.4 842.1 C884.7 839.8 891.9 836.5 897.6 835.0 C903.3 833.5 908.0 832.1 912.8 833.2 C917.6 834.3 923.4 838.1 926.3 841.8 C929.2 845.5 930.0 850.0 930.0 855.3 C930.0 860.6 928.1 867.6 926.3 873.7 C924.5 879.8 921.2 886.6 919.0 892.1 C916.8 897.6 913.6 902.6 912.8 906.9 C912.0 911.2 912.0 914.2 914.1 917.9 C916.2 921.6 920.4 924.9 925.1 929.0 C929.8 933.1 939.4 940.2 942.3 942.5" fill="none" stroke="#56b6f5" stroke-width="4.4" stroke-linejoin="round" stroke-linecap="round" />
<path d="M838.6 856.7 C842.2 855.4 853.4 851.2 860.0 848.8 C866.6 846.4 872.1 844.4 878.4 842.1 C884.7 839.8 891.9 836.5 897.6 835.0 C903.3 833.5 908.0 832.1 912.8 833.2 C917.6 834.3 923.4 838.1 926.3 841.8 C929.2 845.5 930.0 850.0 930.0 855.3 C930.0 860.6 928.1 867.6 926.3 873.7 C924.5 879.8 921.2 886.6 919.0 892.1 C916.8 897.6 913.6 902.6 912.8 906.9 C912.0 911.2 912.0 914.2 914.1 917.9 C916.2 921.6 920.4 924.9 925.1 929.0 C929.8 933.1 939.4 940.2 942.3 942.5" fill="none" stroke="#1e9bef" stroke-width="3.0" stroke-linejoin="round" stroke-linecap="round" />
<path d="M1040.0 911.8 C1042.0 911.0 1048.6 909.0 1052.3 906.9 C1056.0 904.8 1059.1 901.2 1062.0 899.0 C1064.9 896.8 1066.4 893.5 1069.5 893.4 C1072.6 893.3 1076.6 895.8 1080.5 898.3 C1084.4 900.8 1087.3 905.9 1092.8 908.1 C1098.3 910.4 1110.2 911.2 1113.7 911.8" fill="none" stroke="#29a3e6" stroke-width="3.0" stroke-linejoin="round" stroke-linecap="round" />
<polyline points="1113.7,911.8 1156.7,917.9 1162.9,900.7 1240.0,906.9 1362.3,914.6 1362.3,949.0" fill="none" stroke="#29a3e6" stroke-width="2.8" stroke-linejoin="round" stroke-linecap="round" />
<path d="M940.1 710.6 C941.8 711.0 947.5 711.7 950.5 713.4 C953.5 715.0 956.0 717.7 958.2 720.3 C960.4 723.0 962.4 726.3 963.8 729.4 C965.2 732.5 966.2 735.6 966.5 739.1 C966.9 742.7 966.0 748.7 965.8 750.6" fill="none" stroke="#29a3e6" stroke-width="5.0" stroke-linejoin="round" stroke-linecap="round" stroke-linecap="butt"/>
<path d="M1036.2 346.7 C1038.6 341.9 1050.9 345.5 1052.4 348.5 C1053.9 351.5 1047.6 359.9 1045.2 364.7 C1042.8 369.5 1039.5 380.3 1038.0 377.3 C1036.5 374.3 1033.8 351.5 1036.2 346.7Z" fill="rgba(70,140,120,0.42)" />
<path d="M978.6 359.3 C980.4 356.0 990.0 346.7 993.0 344.9 C996.0 343.1 998.4 345.2 996.6 348.5 C994.8 351.8 985.2 362.9 982.2 364.7 C979.2 366.5 976.8 362.6 978.6 359.3Z" fill="rgba(70,140,120,0.42)" />
<path d="M1002.0 337.7 C1002.3 336.2 1006.8 348.2 1007.4 352.1 C1008.0 356.0 1006.5 363.5 1005.6 361.1 C1004.7 358.7 1001.7 339.2 1002.0 337.7Z" fill="rgba(70,140,120,0.42)" />
<path d="M920.9 436.8 C922.1 434.1 926.3 433.2 928.1 435.0 C929.9 436.8 932.0 444.0 931.7 447.6 C931.4 451.2 928.1 456.0 926.3 456.6 C924.5 457.2 921.8 454.5 920.9 451.2 C920.0 447.9 919.7 439.5 920.9 436.8Z" fill="rgba(70,140,120,0.42)" />
<path d="M935.3 395.3 C936.2 392.3 941.6 392.6 942.5 395.3 C943.4 398.0 941.6 408.5 940.7 411.5 C939.8 414.5 938.0 416.0 937.1 413.3 C936.2 410.6 934.4 398.3 935.3 395.3Z" fill="rgba(70,140,120,0.42)" />
<path d="M946.1 431.4 C946.4 429.2 952.4 430.8 953.3 433.2 C954.2 435.6 952.7 446.1 951.5 445.8 C950.3 445.5 945.8 433.5 946.1 431.4Z" fill="rgba(70,140,120,0.42)" />
<path d="M920.9 402.5 C921.5 401.3 927.5 404.3 928.1 406.1 C928.7 407.9 925.7 413.9 924.5 413.3 C923.3 412.7 920.3 403.7 920.9 402.5Z" fill="rgba(70,140,120,0.42)" />
<path d="M983.1 391.7 C983.4 389.6 988.6 388.1 989.4 389.9 C990.1 391.7 988.6 402.2 987.6 402.5 C986.5 402.8 982.8 393.8 983.1 391.7Z" fill="rgba(70,140,120,0.42)" />
<path d="M1003.8 391.7 C1004.1 389.6 1010.1 391.1 1011.0 393.5 C1011.9 395.9 1010.4 406.4 1009.2 406.1 C1008.0 405.8 1003.5 393.8 1003.8 391.7Z" fill="rgba(70,140,120,0.42)" />
<path d="M964.1 460.2 C964.7 458.7 972.3 460.2 973.2 462.0 C974.1 463.8 971.1 471.3 969.5 471.0 C968.0 470.7 963.5 461.7 964.1 460.2Z" fill="rgba(70,140,120,0.42)" />
<path d="M834.4 518.7 C835.6 515.9 844.0 519.2 847.0 522.3 C850.0 525.5 853.3 532.1 852.4 537.7 C851.5 543.2 844.6 551.5 841.6 555.7 C838.6 559.9 834.7 565.6 834.4 562.9 C834.1 560.2 839.8 546.8 839.8 539.5 C839.8 532.1 833.2 521.6 834.4 518.7Z" fill="rgba(70,140,120,0.42)" />
<path d="M922.7 523.2 C923.8 521.1 930.5 523.5 931.7 526.8 C932.9 530.2 931.0 541.0 929.9 543.1 C928.9 545.2 926.6 542.8 925.4 539.5 C924.2 536.2 921.7 525.3 922.7 523.2Z" fill="rgba(70,140,120,0.42)" />
<path d="M960.5 519.6 C961.1 517.5 963.5 518.4 964.1 521.4 C964.7 524.4 964.7 535.6 964.1 537.7 C963.5 539.8 961.1 537.1 960.5 534.1 C959.9 531.1 959.9 521.7 960.5 519.6Z" fill="rgba(70,140,120,0.42)" />
<path d="M954.2 555.7 C955.4 553.6 962.8 547.0 964.1 546.7 C965.5 546.4 963.5 551.8 962.3 553.9 C961.1 556.0 958.3 559.0 956.9 559.3 C955.6 559.6 953.0 557.8 954.2 555.7Z" fill="rgba(70,140,120,0.42)" />
<path d="M1054.2 526.8 C1055.0 527.4 1057.8 536.8 1059.6 539.5 C1061.4 542.2 1064.7 542.2 1065.0 543.1 C1065.3 544.0 1063.1 546.1 1061.4 544.9 C1059.8 543.7 1056.3 538.9 1055.1 535.9 C1053.9 532.9 1053.5 526.2 1054.2 526.8Z" fill="rgba(70,140,120,0.42)" />
<path d="M997.5 507.0 C998.4 506.4 1004.8 509.1 1005.6 512.4 C1006.3 515.7 1003.3 523.8 1002.0 526.8 C1000.6 529.8 997.8 532.3 997.5 530.5 C997.2 528.6 1000.2 519.9 1000.2 516.0 C1000.2 512.1 996.6 507.6 997.5 507.0Z" fill="rgba(70,140,120,0.42)" />
<path d="M883.1 633.2 C884.6 631.8 890.6 630.9 891.2 632.3 C891.8 633.6 888.2 639.9 886.7 641.3 C885.2 642.6 882.8 641.7 882.2 640.4 C881.6 639.0 881.6 634.5 883.1 633.2Z" fill="rgba(70,140,120,0.42)" />
<path d="M829.9 604.3 C831.1 601.6 836.8 597.4 838.0 598.9 C839.2 600.4 838.3 610.6 837.1 613.3 C835.9 616.0 832.0 616.6 830.8 615.1 C829.6 613.6 828.7 607.0 829.9 604.3Z" fill="rgba(70,140,120,0.42)" />
<path d="M1172.1 359.5 C1175.1 354.7 1190.4 355.0 1193.7 357.7 C1197.0 360.4 1192.5 368.5 1191.9 375.7 C1191.3 382.9 1192.2 395.8 1190.1 400.9 C1188.0 406.0 1182.9 406.0 1179.3 406.3 C1175.7 406.6 1169.1 406.0 1168.5 402.7 C1167.9 399.4 1175.1 393.7 1175.7 386.5 C1176.3 379.3 1169.1 364.3 1172.1 359.5Z" fill="rgba(70,140,120,0.42)" />
<path d="M1173.9 417.1 C1175.4 412.0 1183.2 410.8 1184.7 415.3 C1186.2 419.8 1184.4 439.0 1182.9 444.1 C1181.4 449.2 1177.2 450.5 1175.7 445.9 C1174.2 441.4 1172.4 422.2 1173.9 417.1Z" fill="rgba(70,140,120,0.42)" />
<ellipse cx="1201.8" cy="133.8" rx="3.1" ry="2.4" fill="#6f6762" transform="rotate(21 1201.8 133.8)"/>
<ellipse cx="1222.5" cy="129.5" rx="1.8" ry="3.0" fill="#6f6762" transform="rotate(-5 1222.5 129.5)"/>
<ellipse cx="1240.3" cy="126.1" rx="2.3" ry="3.7" fill="#7a716b" transform="rotate(7 1240.3 126.1)"/>
<ellipse cx="1199.9" cy="129.0" rx="1.3" ry="3.5" fill="#857b74" transform="rotate(35 1199.9 129.0)"/>
<ellipse cx="1217.0" cy="128.1" rx="2.3" ry="1.7" fill="#7a716b" transform="rotate(21 1217.0 128.1)"/>
<ellipse cx="1251.1" cy="131.1" rx="2.1" ry="3.6" fill="#6f6762" transform="rotate(36 1251.1 131.1)"/>
<ellipse cx="1250.4" cy="129.9" rx="3.4" ry="4.3" fill="#857b74" transform="rotate(-25 1250.4 129.9)"/>
<ellipse cx="1254.4" cy="133.9" rx="1.5" ry="2.6" fill="#8a807a" transform="rotate(35 1254.4 133.9)"/>
<ellipse cx="1219.5" cy="133.6" rx="2.8" ry="2.5" fill="#8a807a" transform="rotate(38 1219.5 133.6)"/>
<ellipse cx="1224.2" cy="134.6" rx="2.2" ry="4.1" fill="#6f6762" transform="rotate(-21 1224.2 134.6)"/>
<ellipse cx="1242.5" cy="129.9" rx="1.7" ry="3.2" fill="#857b75" transform="rotate(-33 1242.5 129.9)"/>
<ellipse cx="1234.3" cy="127.1" rx="1.6" ry="4.0" fill="#857b75" transform="rotate(-1 1234.3 127.1)"/>
<ellipse cx="1195.4" cy="126.5" rx="2.9" ry="4.5" fill="#8a807a" transform="rotate(6 1195.4 126.5)"/>
<ellipse cx="1233.2" cy="127.6" rx="1.8" ry="1.7" fill="#7a716b" transform="rotate(3 1233.2 127.6)"/>
<ellipse cx="1246.3" cy="128.2" rx="2.5" ry="4.4" fill="#8a807a" transform="rotate(-12 1246.3 128.2)"/>
<ellipse cx="1249.3" cy="132.1" rx="2.7" ry="3.7" fill="#6f6762" transform="rotate(23 1249.3 132.1)"/>
<ellipse cx="1243.9" cy="134.1" rx="3.0" ry="4.0" fill="#8a807a" transform="rotate(22 1243.9 134.1)"/>
<ellipse cx="1206.2" cy="134.7" rx="2.4" ry="2.7" fill="#8a807a" transform="rotate(-24 1206.2 134.7)"/>
<ellipse cx="1224.5" cy="130.5" rx="2.1" ry="2.6" fill="#8a807a" transform="rotate(3 1224.5 130.5)"/>
<ellipse cx="1241.8" cy="129.1" rx="2.7" ry="3.9" fill="#7a716b" transform="rotate(4 1241.8 129.1)"/>
<ellipse cx="1204.7" cy="127.0" rx="2.6" ry="4.1" fill="#857b75" transform="rotate(-37 1204.7 127.0)"/>
<ellipse cx="1251.4" cy="126.8" rx="3.3" ry="2.9" fill="#857b75" transform="rotate(-20 1251.4 126.8)"/>
<ellipse cx="1200.3" cy="131.8" rx="2.1" ry="1.8" fill="#7a716b" transform="rotate(-20 1200.3 131.8)"/>
<ellipse cx="1251.9" cy="132.0" rx="2.8" ry="2.5" fill="#857b75" transform="rotate(-0 1251.9 132.0)"/>
<ellipse cx="1200.6" cy="128.9" rx="2.1" ry="3.9" fill="#857b75" transform="rotate(-31 1200.6 128.9)"/>
<ellipse cx="1248.7" cy="130.7" rx="1.8" ry="3.4" fill="#857b74" transform="rotate(-22 1248.7 130.7)"/>
<ellipse cx="1282.9" cy="138.7" rx="1.4" ry="1.9" fill="#7a716b" transform="rotate(19 1282.9 138.7)"/>
<ellipse cx="1277.7" cy="127.2" rx="2.7" ry="3.4" fill="#8a807a" transform="rotate(14 1277.7 127.2)"/>
<ellipse cx="1283.7" cy="133.1" rx="3.1" ry="4.1" fill="#8a807a" transform="rotate(36 1283.7 133.1)"/>
<ellipse cx="1275.5" cy="129.6" rx="1.9" ry="1.7" fill="#857b74" transform="rotate(-11 1275.5 129.6)"/>
<ellipse cx="1282.5" cy="138.0" rx="2.3" ry="4.2" fill="#7a716b" transform="rotate(5 1282.5 138.0)"/>
<ellipse cx="1269.9" cy="122.1" rx="2.0" ry="2.0" fill="#8a807a" transform="rotate(-11 1269.9 122.1)"/>
<ellipse cx="1274.9" cy="131.7" rx="3.6" ry="2.9" fill="#6f6762" transform="rotate(19 1274.9 131.7)"/>
<ellipse cx="1282.0" cy="135.4" rx="3.1" ry="2.6" fill="#6f6762" transform="rotate(-27 1282.0 135.4)"/>
<ellipse cx="1279.3" cy="134.5" rx="2.3" ry="3.2" fill="#6f6762" transform="rotate(-18 1279.3 134.5)"/>
<ellipse cx="1274.6" cy="130.9" rx="3.1" ry="3.5" fill="#6f6762" transform="rotate(32 1274.6 130.9)"/>
<ellipse cx="1274.0" cy="131.9" rx="3.4" ry="3.7" fill="#6f6762" transform="rotate(13 1274.0 131.9)"/>
<ellipse cx="1282.6" cy="136.3" rx="3.2" ry="4.1" fill="#8a807a" transform="rotate(-19 1282.6 136.3)"/>
<ellipse cx="1265.4" cy="185.8" rx="2.1" ry="3.4" fill="#8a807a" transform="rotate(-35 1265.4 185.8)"/>
<ellipse cx="1260.6" cy="193.2" rx="1.9" ry="2.3" fill="#6f6762" transform="rotate(3 1260.6 193.2)"/>
<ellipse cx="1272.2" cy="182.1" rx="3.3" ry="2.3" fill="#7a716b" transform="rotate(29 1272.2 182.1)"/>
<ellipse cx="1271.6" cy="190.8" rx="2.8" ry="1.8" fill="#8a807a" transform="rotate(-37 1271.6 190.8)"/>
<ellipse cx="1277.1" cy="192.8" rx="1.9" ry="3.3" fill="#6f6762" transform="rotate(17 1277.1 192.8)"/>
<ellipse cx="1280.2" cy="182.0" rx="3.1" ry="2.9" fill="#7a716b" transform="rotate(30 1280.2 182.0)"/>
<ellipse cx="1262.4" cy="175.5" rx="1.8" ry="4.4" fill="#6f6762" transform="rotate(22 1262.4 175.5)"/>
<ellipse cx="1278.8" cy="182.7" rx="3.2" ry="3.3" fill="#8a807a" transform="rotate(7 1278.8 182.7)"/>
<ellipse cx="1272.9" cy="194.9" rx="2.9" ry="4.3" fill="#857b75" transform="rotate(39 1272.9 194.9)"/>
<ellipse cx="1274.8" cy="176.2" rx="3.3" ry="4.4" fill="#8a807a" transform="rotate(6 1274.8 176.2)"/>
<ellipse cx="1275.7" cy="177.4" rx="3.2" ry="3.3" fill="#857b75" transform="rotate(-30 1275.7 177.4)"/>
<ellipse cx="1270.7" cy="188.2" rx="2.4" ry="2.6" fill="#857b74" transform="rotate(-7 1270.7 188.2)"/>
<ellipse cx="1263.5" cy="179.5" rx="3.1" ry="4.1" fill="#857b74" transform="rotate(8 1263.5 179.5)"/>
<ellipse cx="1276.7" cy="181.6" rx="2.6" ry="3.2" fill="#857b75" transform="rotate(0 1276.7 181.6)"/>
<ellipse cx="1242.9" cy="204.5" rx="2.2" ry="2.1" fill="#857b74" transform="rotate(-38 1242.9 204.5)"/>
<ellipse cx="1248.5" cy="206.2" rx="3.6" ry="1.8" fill="#8a807a" transform="rotate(3 1248.5 206.2)"/>
<ellipse cx="1243.6" cy="205.2" rx="1.5" ry="2.2" fill="#857b74" transform="rotate(26 1243.6 205.2)"/>
<ellipse cx="1253.2" cy="210.8" rx="1.7" ry="2.5" fill="#857b75" transform="rotate(-33 1253.2 210.8)"/>
<ellipse cx="1249.6" cy="209.7" rx="2.4" ry="2.1" fill="#6f6762" transform="rotate(-18 1249.6 209.7)"/>
<ellipse cx="1255.7" cy="211.0" rx="3.5" ry="4.0" fill="#857b74" transform="rotate(33 1255.7 211.0)"/>
<ellipse cx="1249.0" cy="211.6" rx="3.2" ry="3.1" fill="#6f6762" transform="rotate(-6 1249.0 211.6)"/>
<ellipse cx="1243.8" cy="207.7" rx="1.8" ry="2.4" fill="#857b74" transform="rotate(-34 1243.8 207.7)"/>
<ellipse cx="1222.8" cy="172.0" rx="3.1" ry="4.3" fill="#8a807a" transform="rotate(-38 1222.8 172.0)"/>
<ellipse cx="1220.0" cy="174.9" rx="2.8" ry="4.2" fill="#857b74" transform="rotate(-10 1220.0 174.9)"/>
<ellipse cx="1227.3" cy="166.7" rx="1.5" ry="2.3" fill="#7a716b" transform="rotate(-7 1227.3 166.7)"/>
<ellipse cx="1214.9" cy="173.8" rx="2.2" ry="3.8" fill="#857b74" transform="rotate(-29 1214.9 173.8)"/>
<ellipse cx="1222.7" cy="163.1" rx="1.3" ry="4.1" fill="#7a716b" transform="rotate(22 1222.7 163.1)"/>
<ellipse cx="1228.9" cy="163.7" rx="1.7" ry="2.5" fill="#7a716b" transform="rotate(3 1228.9 163.7)"/>
<ellipse cx="1223.8" cy="164.2" rx="3.5" ry="3.6" fill="#6f6762" transform="rotate(-16 1223.8 164.2)"/>
<ellipse cx="1218.1" cy="163.7" rx="1.6" ry="1.8" fill="#857b75" transform="rotate(25 1218.1 163.7)"/>
<ellipse cx="1222.2" cy="169.9" rx="2.9" ry="1.8" fill="#857b75" transform="rotate(25 1222.2 169.9)"/>
<ellipse cx="1220.3" cy="165.8" rx="2.4" ry="3.7" fill="#857b74" transform="rotate(-20 1220.3 165.8)"/>
<ellipse cx="1106.9" cy="223.6" rx="2.4" ry="2.4" fill="#857b74" transform="rotate(-28 1106.9 223.6)"/>
<ellipse cx="1105.8" cy="225.6" rx="3.0" ry="2.5" fill="#857b74" transform="rotate(-18 1105.8 225.6)"/>
<ellipse cx="1106.9" cy="222.2" rx="2.2" ry="3.2" fill="#857b74" transform="rotate(-25 1106.9 222.2)"/>
<ellipse cx="1105.6" cy="223.3" rx="1.9" ry="3.9" fill="#857b74" transform="rotate(28 1105.6 223.3)"/>
<ellipse cx="1072.1" cy="236.6" rx="2.8" ry="1.8" fill="#8a807a" transform="rotate(-32 1072.1 236.6)"/>
<ellipse cx="1075.9" cy="253.0" rx="1.8" ry="1.9" fill="#6f6762" transform="rotate(-34 1075.9 253.0)"/>
<ellipse cx="1068.8" cy="242.5" rx="3.2" ry="2.0" fill="#7a716b" transform="rotate(10 1068.8 242.5)"/>
<ellipse cx="1075.9" cy="234.7" rx="2.6" ry="1.8" fill="#7a716b" transform="rotate(-36 1075.9 234.7)"/>
<ellipse cx="1079.9" cy="239.6" rx="1.6" ry="2.0" fill="#857b75" transform="rotate(5 1079.9 239.6)"/>
<ellipse cx="1077.3" cy="235.6" rx="2.6" ry="2.2" fill="#857b74" transform="rotate(4 1077.3 235.6)"/>
<ellipse cx="1068.4" cy="234.6" rx="1.7" ry="3.6" fill="#6f6762" transform="rotate(22 1068.4 234.6)"/>
<ellipse cx="1074.2" cy="253.3" rx="2.1" ry="2.3" fill="#7a716b" transform="rotate(16 1074.2 253.3)"/>
<ellipse cx="1118.1" cy="245.5" rx="1.6" ry="3.7" fill="#857b74" transform="rotate(-29 1118.1 245.5)"/>
<ellipse cx="1137.0" cy="240.6" rx="2.2" ry="1.7" fill="#6f6762" transform="rotate(-4 1137.0 240.6)"/>
<ellipse cx="1126.8" cy="237.2" rx="3.2" ry="1.9" fill="#7a716b" transform="rotate(21 1126.8 237.2)"/>
<ellipse cx="1133.5" cy="240.8" rx="2.4" ry="4.2" fill="#857b74" transform="rotate(13 1133.5 240.8)"/>
<ellipse cx="1113.9" cy="243.9" rx="2.2" ry="4.0" fill="#857b74" transform="rotate(13 1113.9 243.9)"/>
<ellipse cx="1121.7" cy="242.6" rx="2.4" ry="3.5" fill="#7a716b" transform="rotate(7 1121.7 242.6)"/>
<ellipse cx="1115.3" cy="235.8" rx="3.5" ry="3.0" fill="#7a716b" transform="rotate(-28 1115.3 235.8)"/>
<ellipse cx="1138.6" cy="240.1" rx="2.6" ry="2.9" fill="#8a807a" transform="rotate(-11 1138.6 240.1)"/>
<ellipse cx="1139.2" cy="236.6" rx="3.1" ry="1.9" fill="#857b75" transform="rotate(16 1139.2 236.6)"/>
<ellipse cx="1141.5" cy="244.3" rx="2.4" ry="2.2" fill="#7a716b" transform="rotate(-12 1141.5 244.3)"/>
<ellipse cx="1119.9" cy="242.2" rx="3.2" ry="4.1" fill="#8a807a" transform="rotate(-22 1119.9 242.2)"/>
<ellipse cx="1118.6" cy="235.3" rx="2.1" ry="2.4" fill="#6f6762" transform="rotate(-20 1118.6 235.3)"/>
<ellipse cx="1090.5" cy="257.2" rx="1.6" ry="4.1" fill="#857b74" transform="rotate(-13 1090.5 257.2)"/>
<ellipse cx="1090.5" cy="259.7" rx="2.0" ry="4.3" fill="#857b74" transform="rotate(18 1090.5 259.7)"/>
<ellipse cx="1087.3" cy="263.4" rx="3.5" ry="2.8" fill="#7a716b" transform="rotate(-21 1087.3 263.4)"/>
<ellipse cx="1086.7" cy="258.6" rx="3.4" ry="3.3" fill="#6f6762" transform="rotate(23 1086.7 258.6)"/>
<ellipse cx="1095.1" cy="263.1" rx="1.7" ry="2.3" fill="#6f6762" transform="rotate(31 1095.1 263.1)"/>
<ellipse cx="1192.6" cy="275.3" rx="2.6" ry="2.2" fill="#6f6762" transform="rotate(26 1192.6 275.3)"/>
<ellipse cx="1193.5" cy="270.5" rx="2.5" ry="2.6" fill="#7a716b" transform="rotate(36 1193.5 270.5)"/>
<ellipse cx="1194.5" cy="274.1" rx="2.2" ry="2.0" fill="#857b75" transform="rotate(-9 1194.5 274.1)"/>
<ellipse cx="1189.5" cy="279.7" rx="2.3" ry="3.6" fill="#857b75" transform="rotate(-29 1189.5 279.7)"/>
<ellipse cx="1194.7" cy="285.3" rx="3.5" ry="3.4" fill="#857b74" transform="rotate(7 1194.7 285.3)"/>
<ellipse cx="1188.9" cy="271.1" rx="3.4" ry="3.2" fill="#7a716b" transform="rotate(-15 1188.9 271.1)"/>
<ellipse cx="1168.8" cy="308.1" rx="3.4" ry="3.0" fill="#8a807a" transform="rotate(28 1168.8 308.1)"/>
<ellipse cx="1161.2" cy="311.6" rx="2.4" ry="3.4" fill="#7a716b" transform="rotate(-32 1161.2 311.6)"/>
<ellipse cx="1164.5" cy="301.3" rx="3.2" ry="3.6" fill="#857b74" transform="rotate(8 1164.5 301.3)"/>
<ellipse cx="1167.2" cy="306.5" rx="3.0" ry="3.5" fill="#8a807a" transform="rotate(-39 1167.2 306.5)"/>
<ellipse cx="1171.0" cy="300.9" rx="1.7" ry="2.3" fill="#857b74" transform="rotate(22 1171.0 300.9)"/>
<ellipse cx="1165.2" cy="308.5" rx="1.7" ry="2.3" fill="#857b75" transform="rotate(-0 1165.2 308.5)"/>
<ellipse cx="1174.9" cy="306.6" rx="1.9" ry="4.5" fill="#857b74" transform="rotate(17 1174.9 306.6)"/>
<ellipse cx="1164.9" cy="303.3" rx="1.9" ry="1.8" fill="#857b74" transform="rotate(-8 1164.9 303.3)"/>
<ellipse cx="1180.2" cy="305.6" rx="3.5" ry="4.1" fill="#857b74" transform="rotate(-23 1180.2 305.6)"/>
<ellipse cx="1182.5" cy="300.8" rx="2.1" ry="3.7" fill="#6f6762" transform="rotate(-34 1182.5 300.8)"/>
<ellipse cx="1233.0" cy="299.9" rx="2.8" ry="2.0" fill="#857b74" transform="rotate(40 1233.0 299.9)"/>
<ellipse cx="1233.1" cy="299.7" rx="2.3" ry="4.1" fill="#7a716b" transform="rotate(5 1233.1 299.7)"/>
<ellipse cx="1235.0" cy="294.4" rx="2.3" ry="2.1" fill="#7a716b" transform="rotate(-35 1235.0 294.4)"/>
<ellipse cx="1236.7" cy="293.6" rx="2.9" ry="2.6" fill="#6f6762" transform="rotate(24 1236.7 293.6)"/>
<ellipse cx="1228.8" cy="302.7" rx="3.2" ry="3.5" fill="#7a716b" transform="rotate(-33 1228.8 302.7)"/>
<ellipse cx="1273.9" cy="312.8" rx="2.9" ry="4.1" fill="#7a716b" transform="rotate(12 1273.9 312.8)"/>
<ellipse cx="1278.3" cy="314.8" rx="2.8" ry="2.2" fill="#857b74" transform="rotate(3 1278.3 314.8)"/>
<ellipse cx="1273.4" cy="308.6" rx="2.3" ry="4.0" fill="#8a807a" transform="rotate(40 1273.4 308.6)"/>
<ellipse cx="1281.8" cy="314.4" rx="1.5" ry="3.9" fill="#857b75" transform="rotate(26 1281.8 314.4)"/>
<ellipse cx="1279.1" cy="315.7" rx="3.1" ry="2.4" fill="#7a716b" transform="rotate(-1 1279.1 315.7)"/>
<ellipse cx="1146.5" cy="231.6" rx="2.8" ry="4.3" fill="#857b75" transform="rotate(19 1146.5 231.6)"/>
<ellipse cx="1149.1" cy="225.9" rx="2.3" ry="3.0" fill="#6f6762" transform="rotate(-8 1149.1 225.9)"/>
<ellipse cx="1158.1" cy="227.6" rx="3.3" ry="2.5" fill="#857b75" transform="rotate(-11 1158.1 227.6)"/>
<ellipse cx="1154.1" cy="229.9" rx="1.6" ry="3.5" fill="#857b75" transform="rotate(-27 1154.1 229.9)"/>
<ellipse cx="1154.3" cy="226.3" rx="2.1" ry="1.9" fill="#7a716b" transform="rotate(28 1154.3 226.3)"/>
<ellipse cx="1150.5" cy="230.5" rx="3.4" ry="4.2" fill="#857b74" transform="rotate(30 1150.5 230.5)"/>
<ellipse cx="1292.0" cy="307.8" rx="3.0" ry="2.1" fill="#7a716b" transform="rotate(-39 1292.0 307.8)"/>
<ellipse cx="1290.2" cy="344.0" rx="3.3" ry="4.5" fill="#7a716b" transform="rotate(-31 1290.2 344.0)"/>
<ellipse cx="1281.3" cy="326.4" rx="2.2" ry="2.6" fill="#7a716b" transform="rotate(30 1281.3 326.4)"/>
<ellipse cx="1288.4" cy="319.3" rx="3.4" ry="3.1" fill="#7a716b" transform="rotate(6 1288.4 319.3)"/>
<ellipse cx="1289.3" cy="333.7" rx="2.3" ry="3.9" fill="#6f6762" transform="rotate(6 1289.3 333.7)"/>
<ellipse cx="1291.3" cy="342.1" rx="2.2" ry="4.1" fill="#857b74" transform="rotate(-1 1291.3 342.1)"/>
<ellipse cx="1291.6" cy="308.2" rx="1.6" ry="2.1" fill="#857b74" transform="rotate(-17 1291.6 308.2)"/>
<ellipse cx="1281.9" cy="355.2" rx="1.5" ry="2.0" fill="#857b74" transform="rotate(-34 1281.9 355.2)"/>
<ellipse cx="1286.9" cy="357.0" rx="2.0" ry="4.3" fill="#7a716b" transform="rotate(-26 1286.9 357.0)"/>
<ellipse cx="1291.7" cy="326.3" rx="1.8" ry="2.5" fill="#857b75" transform="rotate(-9 1291.7 326.3)"/>
<ellipse cx="1281.5" cy="354.2" rx="3.1" ry="3.8" fill="#857b75" transform="rotate(-2 1281.5 354.2)"/>
<ellipse cx="1273.7" cy="333.8" rx="2.1" ry="4.0" fill="#857b74" transform="rotate(-17 1273.7 333.8)"/>
<ellipse cx="1272.1" cy="355.5" rx="3.5" ry="2.1" fill="#6f6762" transform="rotate(5 1272.1 355.5)"/>
<ellipse cx="1290.0" cy="334.2" rx="2.4" ry="3.0" fill="#857b74" transform="rotate(6 1290.0 334.2)"/>
<ellipse cx="1281.2" cy="349.2" rx="2.7" ry="3.6" fill="#857b75" transform="rotate(14 1281.2 349.2)"/>
<ellipse cx="1284.4" cy="310.3" rx="3.0" ry="4.0" fill="#6f6762" transform="rotate(-12 1284.4 310.3)"/>
<ellipse cx="1284.5" cy="345.3" rx="2.7" ry="2.5" fill="#857b74" transform="rotate(24 1284.5 345.3)"/>
<ellipse cx="1290.5" cy="355.5" rx="1.3" ry="3.6" fill="#857b75" transform="rotate(9 1290.5 355.5)"/>
<ellipse cx="1290.8" cy="307.4" rx="1.8" ry="3.1" fill="#8a807a" transform="rotate(-14 1290.8 307.4)"/>
<ellipse cx="1290.9" cy="344.2" rx="2.0" ry="2.5" fill="#8a807a" transform="rotate(-12 1290.9 344.2)"/>
<ellipse cx="1276.0" cy="357.2" rx="3.3" ry="3.5" fill="#8a807a" transform="rotate(18 1276.0 357.2)"/>
<ellipse cx="1273.5" cy="352.3" rx="2.6" ry="2.6" fill="#7a716b" transform="rotate(-13 1273.5 352.3)"/>
<ellipse cx="1278.0" cy="332.0" rx="2.7" ry="3.4" fill="#8a807a" transform="rotate(33 1278.0 332.0)"/>
<ellipse cx="1279.7" cy="349.8" rx="1.3" ry="3.9" fill="#7a716b" transform="rotate(17 1279.7 349.8)"/>
<ellipse cx="1281.2" cy="315.8" rx="1.7" ry="3.2" fill="#8a807a" transform="rotate(20 1281.2 315.8)"/>
<ellipse cx="1279.1" cy="319.8" rx="2.6" ry="3.1" fill="#857b74" transform="rotate(40 1279.1 319.8)"/>
<ellipse cx="1286.8" cy="338.9" rx="3.2" ry="3.6" fill="#857b75" transform="rotate(-3 1286.8 338.9)"/>
<ellipse cx="1284.2" cy="337.8" rx="3.5" ry="1.7" fill="#857b75" transform="rotate(-30 1284.2 337.8)"/>
<ellipse cx="1277.1" cy="361.2" rx="1.4" ry="4.3" fill="#8a807a" transform="rotate(23 1277.1 361.2)"/>
<ellipse cx="1273.3" cy="342.1" rx="1.7" ry="3.6" fill="#6f6762" transform="rotate(3 1273.3 342.1)"/>
<ellipse cx="1257.9" cy="384.4" rx="2.2" ry="2.9" fill="#6f6762" transform="rotate(28 1257.9 384.4)"/>
<ellipse cx="1264.2" cy="380.9" rx="1.8" ry="2.5" fill="#857b75" transform="rotate(13 1264.2 380.9)"/>
<ellipse cx="1268.5" cy="386.2" rx="1.3" ry="2.3" fill="#8a807a" transform="rotate(-20 1268.5 386.2)"/>
<ellipse cx="1267.5" cy="389.1" rx="2.8" ry="1.7" fill="#6f6762" transform="rotate(8 1267.5 389.1)"/>
<ellipse cx="1264.0" cy="391.7" rx="3.1" ry="2.7" fill="#6f6762" transform="rotate(23 1264.0 391.7)"/>
<ellipse cx="1257.6" cy="383.6" rx="2.8" ry="4.4" fill="#857b75" transform="rotate(6 1257.6 383.6)"/>
<ellipse cx="1256.4" cy="378.7" rx="3.6" ry="1.6" fill="#857b75" transform="rotate(-21 1256.4 378.7)"/>
<ellipse cx="1254.1" cy="381.9" rx="2.3" ry="1.8" fill="#6f6762" transform="rotate(18 1254.1 381.9)"/>
<ellipse cx="1251.6" cy="389.6" rx="2.4" ry="4.3" fill="#6f6762" transform="rotate(16 1251.6 389.6)"/>
<ellipse cx="1253.6" cy="389.5" rx="1.4" ry="3.5" fill="#7a716b" transform="rotate(17 1253.6 389.5)"/>
<ellipse cx="1185.2" cy="443.3" rx="3.5" ry="2.5" fill="#8a807a" transform="rotate(13 1185.2 443.3)"/>
<ellipse cx="1176.3" cy="418.0" rx="2.2" ry="3.8" fill="#857b75" transform="rotate(29 1176.3 418.0)"/>
<ellipse cx="1191.2" cy="437.9" rx="2.9" ry="3.7" fill="#7a716b" transform="rotate(40 1191.2 437.9)"/>
<ellipse cx="1175.2" cy="443.5" rx="3.3" ry="2.1" fill="#8a807a" transform="rotate(5 1175.2 443.5)"/>
<ellipse cx="1194.5" cy="423.9" rx="2.5" ry="4.2" fill="#857b74" transform="rotate(-15 1194.5 423.9)"/>
<ellipse cx="1175.6" cy="447.6" rx="2.4" ry="4.5" fill="#7a716b" transform="rotate(15 1175.6 447.6)"/>
<ellipse cx="1182.7" cy="433.5" rx="2.0" ry="2.9" fill="#8a807a" transform="rotate(-36 1182.7 433.5)"/>
<ellipse cx="1190.1" cy="428.6" rx="3.5" ry="2.7" fill="#857b74" transform="rotate(29 1190.1 428.6)"/>
<ellipse cx="1179.0" cy="435.2" rx="3.5" ry="3.1" fill="#857b75" transform="rotate(-35 1179.0 435.2)"/>
<ellipse cx="1175.3" cy="426.1" rx="3.0" ry="4.0" fill="#8a807a" transform="rotate(4 1175.3 426.1)"/>
<ellipse cx="1176.7" cy="438.5" rx="3.4" ry="2.5" fill="#857b75" transform="rotate(-32 1176.7 438.5)"/>
<ellipse cx="1186.3" cy="442.5" rx="2.0" ry="1.8" fill="#857b75" transform="rotate(-38 1186.3 442.5)"/>
<ellipse cx="1190.0" cy="432.5" rx="1.4" ry="2.2" fill="#857b75" transform="rotate(-34 1190.0 432.5)"/>
<ellipse cx="1195.2" cy="446.6" rx="1.3" ry="3.2" fill="#7a716b" transform="rotate(-8 1195.2 446.6)"/>
<ellipse cx="1189.7" cy="448.2" rx="2.6" ry="2.8" fill="#7a716b" transform="rotate(40 1189.7 448.2)"/>
<ellipse cx="1194.7" cy="439.1" rx="3.4" ry="1.8" fill="#8a807a" transform="rotate(-16 1194.7 439.1)"/>
<ellipse cx="1193.1" cy="427.3" rx="2.0" ry="2.1" fill="#6f6762" transform="rotate(-33 1193.1 427.3)"/>
<ellipse cx="1190.5" cy="444.3" rx="2.8" ry="2.8" fill="#857b74" transform="rotate(3 1190.5 444.3)"/>
<ellipse cx="1185.6" cy="448.9" rx="1.8" ry="4.4" fill="#8a807a" transform="rotate(-27 1185.6 448.9)"/>
<ellipse cx="1180.3" cy="440.6" rx="2.4" ry="2.8" fill="#6f6762" transform="rotate(-22 1180.3 440.6)"/>
<ellipse cx="1182.7" cy="437.4" rx="1.4" ry="2.9" fill="#7a716b" transform="rotate(-22 1182.7 437.4)"/>
<ellipse cx="1180.8" cy="423.2" rx="2.1" ry="1.7" fill="#8a807a" transform="rotate(5 1180.8 423.2)"/>
<ellipse cx="1183.0" cy="446.1" rx="2.0" ry="3.3" fill="#8a807a" transform="rotate(-22 1183.0 446.1)"/>
<ellipse cx="1180.7" cy="422.7" rx="3.5" ry="2.2" fill="#6f6762" transform="rotate(-12 1180.7 422.7)"/>
<ellipse cx="1186.7" cy="433.9" rx="2.5" ry="2.2" fill="#8a807a" transform="rotate(32 1186.7 433.9)"/>
<ellipse cx="1185.8" cy="422.9" rx="2.3" ry="4.1" fill="#7a716b" transform="rotate(3 1185.8 422.9)"/>
<ellipse cx="1184.1" cy="417.5" rx="1.9" ry="4.5" fill="#6f6762" transform="rotate(-13 1184.1 417.5)"/>
<ellipse cx="1181.0" cy="418.8" rx="1.5" ry="3.5" fill="#857b74" transform="rotate(-38 1181.0 418.8)"/>
<ellipse cx="1213.5" cy="442.8" rx="2.0" ry="2.2" fill="#6f6762" transform="rotate(10 1213.5 442.8)"/>
<ellipse cx="1213.6" cy="433.6" rx="3.3" ry="2.2" fill="#857b74" transform="rotate(-14 1213.6 433.6)"/>
<ellipse cx="1233.1" cy="446.0" rx="3.3" ry="4.3" fill="#7a716b" transform="rotate(-26 1233.1 446.0)"/>
<ellipse cx="1214.2" cy="435.3" rx="2.5" ry="4.0" fill="#6f6762" transform="rotate(-23 1214.2 435.3)"/>
<ellipse cx="1218.2" cy="426.3" rx="3.5" ry="2.3" fill="#6f6762" transform="rotate(3 1218.2 426.3)"/>
<ellipse cx="1229.8" cy="439.4" rx="3.2" ry="3.4" fill="#857b75" transform="rotate(4 1229.8 439.4)"/>
<ellipse cx="1217.5" cy="440.5" rx="2.4" ry="3.1" fill="#7a716b" transform="rotate(-25 1217.5 440.5)"/>
<ellipse cx="1232.0" cy="446.5" rx="1.6" ry="3.1" fill="#8a807a" transform="rotate(-32 1232.0 446.5)"/>
<ellipse cx="1234.2" cy="441.0" rx="2.5" ry="2.6" fill="#8a807a" transform="rotate(-2 1234.2 441.0)"/>
<ellipse cx="1225.8" cy="438.2" rx="2.4" ry="2.3" fill="#857b74" transform="rotate(3 1225.8 438.2)"/>
<ellipse cx="1214.4" cy="449.1" rx="2.7" ry="3.9" fill="#8a807a" transform="rotate(15 1214.4 449.1)"/>
<ellipse cx="1227.2" cy="451.0" rx="1.6" ry="3.6" fill="#857b74" transform="rotate(-2 1227.2 451.0)"/>
<ellipse cx="1238.7" cy="430.7" rx="2.2" ry="2.4" fill="#6f6762" transform="rotate(14 1238.7 430.7)"/>
<ellipse cx="1220.6" cy="434.6" rx="3.0" ry="3.4" fill="#7a716b" transform="rotate(-5 1220.6 434.6)"/>
<ellipse cx="1234.0" cy="447.9" rx="3.4" ry="2.8" fill="#7a716b" transform="rotate(9 1234.0 447.9)"/>
<ellipse cx="1238.3" cy="448.6" rx="1.3" ry="3.2" fill="#6f6762" transform="rotate(4 1238.3 448.6)"/>
<ellipse cx="1206.7" cy="441.4" rx="1.9" ry="3.8" fill="#6f6762" transform="rotate(9 1206.7 441.4)"/>
<ellipse cx="1225.0" cy="436.6" rx="3.3" ry="4.2" fill="#7a716b" transform="rotate(-22 1225.0 436.6)"/>
<ellipse cx="1240.2" cy="430.6" rx="2.1" ry="3.4" fill="#6f6762" transform="rotate(-35 1240.2 430.6)"/>
<ellipse cx="1239.1" cy="449.6" rx="3.0" ry="3.7" fill="#8a807a" transform="rotate(-28 1239.1 449.6)"/>
<ellipse cx="1214.7" cy="450.0" rx="1.6" ry="3.3" fill="#7a716b" transform="rotate(-30 1214.7 450.0)"/>
<ellipse cx="1218.2" cy="440.9" rx="1.4" ry="2.6" fill="#8a807a" transform="rotate(-19 1218.2 440.9)"/>
<ellipse cx="1220.1" cy="430.4" rx="2.9" ry="4.0" fill="#6f6762" transform="rotate(19 1220.1 430.4)"/>
<ellipse cx="1245.8" cy="426.4" rx="3.4" ry="3.9" fill="#857b74" transform="rotate(5 1245.8 426.4)"/>
<ellipse cx="1222.3" cy="428.4" rx="1.9" ry="2.7" fill="#6f6762" transform="rotate(-33 1222.3 428.4)"/>
<ellipse cx="1236.3" cy="434.4" rx="2.9" ry="3.9" fill="#8a807a" transform="rotate(22 1236.3 434.4)"/>
<ellipse cx="1227.3" cy="428.3" rx="2.9" ry="4.1" fill="#857b75" transform="rotate(-27 1227.3 428.3)"/>
<ellipse cx="1245.0" cy="428.5" rx="2.1" ry="3.2" fill="#6f6762" transform="rotate(2 1245.0 428.5)"/>
<ellipse cx="1242.3" cy="445.7" rx="3.3" ry="3.6" fill="#6f6762" transform="rotate(21 1242.3 445.7)"/>
<ellipse cx="1226.5" cy="449.4" rx="3.2" ry="3.5" fill="#7a716b" transform="rotate(-39 1226.5 449.4)"/>
<ellipse cx="1249.1" cy="422.5" rx="2.5" ry="3.1" fill="#6f6762" transform="rotate(-12 1249.1 422.5)"/>
<ellipse cx="1246.5" cy="417.5" rx="2.7" ry="1.9" fill="#6f6762" transform="rotate(-14 1246.5 417.5)"/>
<ellipse cx="1241.8" cy="405.4" rx="2.0" ry="2.5" fill="#8a807a" transform="rotate(9 1241.8 405.4)"/>
<ellipse cx="1252.8" cy="425.9" rx="1.5" ry="2.9" fill="#857b74" transform="rotate(24 1252.8 425.9)"/>
<ellipse cx="1244.4" cy="405.2" rx="3.0" ry="3.8" fill="#6f6762" transform="rotate(-5 1244.4 405.2)"/>
<ellipse cx="1254.8" cy="417.1" rx="2.4" ry="2.1" fill="#6f6762" transform="rotate(-21 1254.8 417.1)"/>
<ellipse cx="1246.8" cy="421.2" rx="3.1" ry="2.7" fill="#7a716b" transform="rotate(-29 1246.8 421.2)"/>
<ellipse cx="1245.8" cy="416.5" rx="2.3" ry="4.4" fill="#6f6762" transform="rotate(8 1245.8 416.5)"/>
<ellipse cx="1246.3" cy="423.5" rx="2.4" ry="2.9" fill="#8a807a" transform="rotate(29 1246.3 423.5)"/>
<ellipse cx="1253.0" cy="408.9" rx="1.3" ry="2.7" fill="#857b74" transform="rotate(14 1253.0 408.9)"/>
<ellipse cx="1248.7" cy="426.3" rx="2.4" ry="2.9" fill="#857b75" transform="rotate(19 1248.7 426.3)"/>
<ellipse cx="1245.2" cy="410.3" rx="2.8" ry="1.8" fill="#7a716b" transform="rotate(-15 1245.2 410.3)"/>
<ellipse cx="1254.3" cy="413.3" rx="2.3" ry="3.0" fill="#6f6762" transform="rotate(13 1254.3 413.3)"/>
<ellipse cx="1237.2" cy="413.7" rx="1.9" ry="1.9" fill="#7a716b" transform="rotate(-6 1237.2 413.7)"/>
<ellipse cx="1239.2" cy="342.1" rx="3.1" ry="4.2" fill="#857b75" transform="rotate(14 1239.2 342.1)"/>
<ellipse cx="1238.4" cy="323.1" rx="2.0" ry="4.2" fill="#857b74" transform="rotate(-7 1238.4 323.1)"/>
<ellipse cx="1240.5" cy="323.2" rx="2.0" ry="4.4" fill="#6f6762" transform="rotate(-7 1240.5 323.2)"/>
<ellipse cx="1229.0" cy="340.1" rx="2.9" ry="2.6" fill="#857b74" transform="rotate(10 1229.0 340.1)"/>
<ellipse cx="1237.7" cy="335.8" rx="1.5" ry="3.3" fill="#857b74" transform="rotate(-24 1237.7 335.8)"/>
<ellipse cx="1227.3" cy="328.0" rx="3.1" ry="2.5" fill="#857b75" transform="rotate(-27 1227.3 328.0)"/>
<ellipse cx="1227.8" cy="320.6" rx="2.9" ry="4.1" fill="#7a716b" transform="rotate(6 1227.8 320.6)"/>
<ellipse cx="1226.9" cy="345.7" rx="2.7" ry="2.4" fill="#857b75" transform="rotate(8 1226.9 345.7)"/>
<ellipse cx="1232.6" cy="324.8" rx="2.8" ry="3.2" fill="#6f6762" transform="rotate(-27 1232.6 324.8)"/>
<ellipse cx="1232.0" cy="342.7" rx="1.5" ry="2.0" fill="#8a807a" transform="rotate(-6 1232.0 342.7)"/>
<ellipse cx="1229.4" cy="349.2" rx="1.4" ry="2.2" fill="#7a716b" transform="rotate(39 1229.4 349.2)"/>
<ellipse cx="1238.2" cy="323.5" rx="3.3" ry="1.6" fill="#857b75" transform="rotate(14 1238.2 323.5)"/>
<ellipse cx="1173.8" cy="356.8" rx="2.7" ry="3.0" fill="#7a716b" transform="rotate(39 1173.8 356.8)"/>
<ellipse cx="1180.5" cy="360.7" rx="1.7" ry="3.1" fill="#857b74" transform="rotate(-39 1180.5 360.7)"/>
<ellipse cx="1190.4" cy="353.0" rx="1.6" ry="3.8" fill="#7a716b" transform="rotate(16 1190.4 353.0)"/>
<ellipse cx="1179.7" cy="361.2" rx="3.1" ry="2.8" fill="#6f6762" transform="rotate(-37 1179.7 361.2)"/>
<ellipse cx="1177.4" cy="354.0" rx="1.5" ry="4.4" fill="#857b75" transform="rotate(-38 1177.4 354.0)"/>
<ellipse cx="1186.3" cy="348.1" rx="3.2" ry="1.7" fill="#7a716b" transform="rotate(4 1186.3 348.1)"/>
<ellipse cx="1177.7" cy="353.8" rx="1.7" ry="1.7" fill="#7a716b" transform="rotate(-34 1177.7 353.8)"/>
<ellipse cx="1174.5" cy="356.6" rx="3.1" ry="3.5" fill="#8a807a" transform="rotate(39 1174.5 356.6)"/>
<ellipse cx="1171.8" cy="354.9" rx="2.6" ry="2.7" fill="#857b75" transform="rotate(34 1171.8 354.9)"/>
<ellipse cx="1189.5" cy="352.8" rx="2.1" ry="2.9" fill="#6f6762" transform="rotate(-15 1189.5 352.8)"/>
<ellipse cx="1245.5" cy="365.6" rx="1.3" ry="4.5" fill="#7a716b" transform="rotate(16 1245.5 365.6)"/>
<ellipse cx="1243.1" cy="378.9" rx="3.1" ry="1.9" fill="#857b75" transform="rotate(37 1243.1 378.9)"/>
<ellipse cx="1238.6" cy="373.9" rx="3.4" ry="3.6" fill="#6f6762" transform="rotate(17 1238.6 373.9)"/>
<ellipse cx="1235.7" cy="378.9" rx="2.6" ry="2.5" fill="#7a716b" transform="rotate(-26 1235.7 378.9)"/>
<ellipse cx="1236.3" cy="372.6" rx="3.0" ry="4.5" fill="#8a807a" transform="rotate(-35 1236.3 372.6)"/>
<ellipse cx="1238.7" cy="369.1" rx="1.7" ry="2.8" fill="#8a807a" transform="rotate(-29 1238.7 369.1)"/>
<ellipse cx="1244.1" cy="375.1" rx="1.7" ry="1.8" fill="#8a807a" transform="rotate(32 1244.1 375.1)"/>
<ellipse cx="1239.7" cy="367.6" rx="1.9" ry="4.2" fill="#6f6762" transform="rotate(13 1239.7 367.6)"/>
<ellipse cx="1189.5" cy="390.2" rx="3.4" ry="1.9" fill="#8a807a" transform="rotate(-15 1189.5 390.2)"/>
<ellipse cx="1185.6" cy="371.1" rx="3.0" ry="2.4" fill="#857b74" transform="rotate(-22 1185.6 371.1)"/>
<ellipse cx="1186.2" cy="360.3" rx="1.5" ry="3.7" fill="#6f6762" transform="rotate(-38 1186.2 360.3)"/>
<ellipse cx="1187.4" cy="373.4" rx="3.1" ry="2.2" fill="#857b74" transform="rotate(7 1187.4 373.4)"/>
<ellipse cx="1187.6" cy="379.6" rx="3.5" ry="2.7" fill="#857b75" transform="rotate(37 1187.6 379.6)"/>
<ellipse cx="1184.9" cy="391.1" rx="2.6" ry="4.0" fill="#7a716b" transform="rotate(17 1184.9 391.1)"/>
<ellipse cx="1187.1" cy="374.0" rx="2.8" ry="2.1" fill="#7a716b" transform="rotate(3 1187.1 374.0)"/>
<ellipse cx="1187.7" cy="376.3" rx="2.6" ry="1.9" fill="#6f6762" transform="rotate(-37 1187.7 376.3)"/>
<ellipse cx="1108.1" cy="483.9" rx="1.7" ry="4.5" fill="#7a716b" transform="rotate(-26 1108.1 483.9)"/>
<ellipse cx="1107.7" cy="481.7" rx="3.6" ry="3.9" fill="#857b75" transform="rotate(18 1107.7 481.7)"/>
<ellipse cx="1108.8" cy="477.4" rx="3.3" ry="4.5" fill="#857b74" transform="rotate(-38 1108.8 477.4)"/>
<ellipse cx="1101.2" cy="478.2" rx="3.2" ry="3.6" fill="#6f6762" transform="rotate(36 1101.2 478.2)"/>
<ellipse cx="1100.2" cy="482.6" rx="3.2" ry="2.1" fill="#857b75" transform="rotate(37 1100.2 482.6)"/>
<ellipse cx="1100.0" cy="480.8" rx="2.8" ry="1.7" fill="#7a716b" transform="rotate(-15 1100.0 480.8)"/>
<ellipse cx="1110.4" cy="471.4" rx="1.5" ry="3.5" fill="#7a716b" transform="rotate(26 1110.4 471.4)"/>
<ellipse cx="1111.6" cy="484.2" rx="1.9" ry="3.8" fill="#7a716b" transform="rotate(-33 1111.6 484.2)"/>
<ellipse cx="1209.9" cy="382.4" rx="3.2" ry="2.2" fill="#857b75" transform="rotate(11 1209.9 382.4)"/>
<ellipse cx="1205.1" cy="382.5" rx="1.9" ry="2.5" fill="#6f6762" transform="rotate(-32 1205.1 382.5)"/>
<ellipse cx="1216.9" cy="379.8" rx="3.0" ry="2.2" fill="#8a807a" transform="rotate(-15 1216.9 379.8)"/>
<ellipse cx="1217.7" cy="379.6" rx="2.5" ry="3.1" fill="#857b74" transform="rotate(8 1217.7 379.6)"/>
<ellipse cx="1209.6" cy="378.2" rx="2.8" ry="3.4" fill="#857b74" transform="rotate(-34 1209.6 378.2)"/>
<ellipse cx="1212.6" cy="379.4" rx="1.6" ry="4.1" fill="#857b74" transform="rotate(3 1212.6 379.4)"/>
<ellipse cx="1161.2" cy="306.5" rx="1.7" ry="3.4" fill="#857b74" transform="rotate(-30 1161.2 306.5)"/>
<ellipse cx="1164.2" cy="310.5" rx="3.0" ry="3.4" fill="#7a716b" transform="rotate(11 1164.2 310.5)"/>
<ellipse cx="1164.2" cy="317.8" rx="2.2" ry="4.1" fill="#857b74" transform="rotate(13 1164.2 317.8)"/>
<ellipse cx="1162.8" cy="305.7" rx="1.8" ry="3.0" fill="#6f6762" transform="rotate(-11 1162.8 305.7)"/>
<ellipse cx="1162.4" cy="304.0" rx="3.5" ry="2.5" fill="#8a807a" transform="rotate(3 1162.4 304.0)"/>
<ellipse cx="1183.2" cy="315.5" rx="3.5" ry="2.2" fill="#857b74" transform="rotate(-20 1183.2 315.5)"/>
<ellipse cx="1181.7" cy="309.1" rx="3.2" ry="2.8" fill="#7a716b" transform="rotate(33 1181.7 309.1)"/>
<ellipse cx="1181.0" cy="306.4" rx="3.4" ry="3.3" fill="#857b74" transform="rotate(9 1181.0 306.4)"/>
<ellipse cx="1180.0" cy="311.4" rx="1.4" ry="2.9" fill="#857b75" transform="rotate(-39 1180.0 311.4)"/>
<ellipse cx="1187.9" cy="314.7" rx="1.9" ry="3.4" fill="#857b75" transform="rotate(9 1187.9 314.7)"/>
<ellipse cx="1177.2" cy="317.1" rx="1.6" ry="4.4" fill="#857b75" transform="rotate(33 1177.2 317.1)"/>
<polygon points="1193.6,141.4 1200.8,134.2 1215.2,131.5 1229.6,128.8 1242.3,127.0 1254.9,123.4 1267.5,127.0 1276.5,136.0 1281.9,146.8 1280.1,161.3 1272.9,172.1 1271.1,182.9 1260.3,193.7 1253.1,202.7 1249.5,209.9 1242.3,210.8 1237.7,204.5 1239.5,193.7 1231.4,198.2 1220.6,201.8 1206.2,208.1 1193.6,213.5 1195.4,206.3 1202.6,197.3 1208.0,186.5 1199.0,175.7 1199.0,162.2 1194.5,154.1" fill="#2ea3e0" />
<path d="M1209.8 162.2 C1211.0 159.9 1218.8 157.8 1222.4 158.6 C1226.0 159.3 1228.9 164.4 1231.4 166.7 C1234.0 168.9 1237.7 170.0 1237.7 172.1 C1237.7 174.2 1233.7 178.7 1231.4 179.3 C1229.2 179.9 1226.9 176.9 1224.2 175.7 C1221.5 174.5 1217.6 174.3 1215.2 172.1 C1212.8 169.8 1208.6 164.4 1209.8 162.2Z" fill="#7b9a36" />
<ellipse cx="1214.5" cy="164.5" rx="2.2" ry="3.6" fill="#7a716b" transform="rotate(36 1214.5 164.5)"/>
<ellipse cx="1223.0" cy="172.0" rx="1.6" ry="4.5" fill="#857b74" transform="rotate(13 1223.0 172.0)"/>
<ellipse cx="1216.5" cy="169.8" rx="2.3" ry="2.8" fill="#8a807a" transform="rotate(-33 1216.5 169.8)"/>
<ellipse cx="1214.7" cy="174.9" rx="2.2" ry="2.2" fill="#857b75" transform="rotate(-9 1214.7 174.9)"/>
<ellipse cx="1224.0" cy="166.2" rx="3.0" ry="2.8" fill="#8a807a" transform="rotate(-35 1224.0 166.2)"/>
<ellipse cx="1215.2" cy="165.3" rx="1.6" ry="2.0" fill="#6f6762" transform="rotate(-38 1215.2 165.3)"/>
<ellipse cx="1226.2" cy="174.0" rx="2.8" ry="2.3" fill="#6f6762" transform="rotate(18 1226.2 174.0)"/>
<ellipse cx="1217.5" cy="171.1" rx="1.8" ry="1.7" fill="#857b75" transform="rotate(-17 1217.5 171.1)"/>
<polygon points="1160.3,182.9 1170.2,179.3 1181.0,179.3 1188.2,176.6 1184.6,186.5 1181.0,193.7 1175.6,200.9 1173.8,209.9 1170.2,208.1 1168.4,200.9 1172.0,191.9 1163.0,186.5" fill="#2ea3e0" />
<path d="M1092.7 255.0 C1093.6 253.2 1098.4 251.4 1101.7 251.4 C1105.0 251.4 1108.9 255.0 1112.5 255.0 C1116.1 255.0 1119.7 253.2 1123.3 251.4 C1126.9 249.5 1130.8 246.5 1134.1 244.1 C1137.4 241.7 1140.2 239.3 1143.2 236.9 C1146.2 234.5 1150.2 230.6 1152.2 229.7 C1154.1 228.8 1156.1 229.4 1154.9 231.5 C1153.7 233.6 1148.4 239.3 1145.0 242.3 C1141.5 245.3 1137.4 247.1 1134.1 249.5 C1130.8 252.0 1127.5 254.7 1125.1 256.8 C1122.7 258.9 1120.3 259.8 1119.7 262.2 C1119.1 264.6 1120.0 268.5 1121.5 271.2 C1123.0 273.9 1126.9 275.4 1128.7 278.4 C1130.5 281.4 1132.6 286.2 1132.3 289.2 C1132.0 292.2 1129.6 295.5 1126.9 296.4 C1124.2 297.3 1118.8 296.1 1116.1 294.6 C1113.4 293.1 1110.7 289.8 1110.7 287.4 C1110.7 285.0 1115.5 282.9 1116.1 280.2 C1116.7 277.5 1116.1 273.6 1114.3 271.2 C1112.5 268.8 1108.3 267.3 1105.3 265.8 C1102.3 264.3 1098.4 264.0 1096.3 262.2 C1094.2 260.4 1091.8 256.8 1092.7 255.0Z" fill="#2ea3e0" />
<path d="M1030.5 231.5 C1031.9 228.5 1035.2 230.9 1038.6 229.7 C1042.1 228.5 1048.3 224.9 1051.3 224.3 C1054.3 223.7 1056.1 224.6 1056.7 226.1 C1057.3 227.6 1053.4 231.2 1054.9 233.3 C1056.4 235.4 1064.5 236.9 1065.7 238.7 C1066.9 240.5 1064.5 243.5 1062.1 244.1 C1059.7 244.7 1054.3 242.3 1051.3 242.3 C1048.3 242.3 1045.6 242.3 1044.1 244.1 C1042.6 245.9 1043.8 251.4 1042.3 253.2 C1040.8 255.0 1037.0 255.9 1035.0 255.0 C1033.1 254.1 1031.3 251.7 1030.5 247.7 C1029.8 243.8 1029.2 234.5 1030.5 231.5Z" fill="#2ea3e0" />
<path d="M1186.4 217.1 C1187.9 215.0 1192.7 215.0 1193.6 217.1 C1194.5 219.2 1192.7 225.2 1191.8 229.7 C1190.9 234.2 1188.5 239.6 1188.2 244.1 C1187.9 248.6 1190.3 252.6 1190.0 256.8 C1189.7 261.0 1186.1 265.5 1186.4 269.4 C1186.7 273.3 1190.3 276.9 1191.8 280.2 C1193.3 283.5 1195.7 286.8 1195.4 289.2 C1195.1 291.6 1191.5 294.9 1190.0 294.6 C1188.5 294.3 1187.4 291.0 1186.4 287.4 C1185.3 283.8 1183.8 277.8 1183.7 273.0 C1183.5 268.2 1185.3 263.4 1185.5 258.6 C1185.6 253.8 1184.7 248.9 1184.6 244.1 C1184.4 239.3 1184.3 234.2 1184.6 229.7 C1184.9 225.2 1184.9 219.2 1186.4 217.1Z" fill="#2ea3e0" />
<polygon points="1132.3,296.4 1139.5,298.2 1143.2,309.0 1152.2,316.2 1163.0,323.4 1137.7,323.4 1135.9,307.2" fill="#2ea3e0" />
<polygon points="1193.6,298.2 1202.6,300.0 1206.2,309.0 1217.0,314.4 1224.2,323.4 1195.4,323.4 1191.8,309.0" fill="#2ea3e0" />
<polygon points="1130.6,300.0 1141.4,300.0 1145.0,309.0 1155.9,318.0 1164.9,320.7 1177.5,318.0 1190.1,316.2 1197.3,310.8 1195.5,300.0 1204.5,300.0 1208.1,309.0 1220.7,312.6 1226.1,316.2 1217.1,323.4 1213.5,330.6 1220.7,337.8 1226.1,352.3 1227.9,366.7 1226.1,377.5 1234.2,384.7 1238.7,393.7 1233.3,399.1 1224.3,401.8 1215.3,397.3 1215.3,390.1 1218.9,379.3 1217.1,366.7 1219.8,354.1 1215.3,339.6 1208.1,330.6 1204.5,323.4 1197.3,318.0 1186.5,321.6 1172.1,325.2 1159.5,323.4 1148.6,319.8 1137.8,310.8" fill="#2ea3e0" />
<path d="M1193.7 386.5 C1194.6 383.3 1197.9 382.7 1200.9 382.0 C1203.9 381.2 1207.5 382.4 1211.7 382.0 C1215.9 381.5 1221.9 378.8 1226.1 379.3 C1230.3 379.7 1234.5 381.7 1236.9 384.7 C1239.3 387.7 1240.8 393.7 1240.5 397.3 C1240.2 400.9 1237.2 403.6 1235.1 406.3 C1233.0 409.0 1229.7 410.2 1227.9 413.5 C1226.1 416.8 1226.4 422.8 1224.3 426.1 C1222.2 429.4 1218.0 431.1 1215.3 433.3 C1212.6 435.6 1211.4 438.7 1208.1 439.6 C1204.8 440.5 1198.5 440.4 1195.5 438.7 C1192.5 437.1 1191.7 432.7 1190.1 429.7 C1188.4 426.7 1184.7 423.7 1185.6 420.7 C1186.5 417.7 1193.8 415.0 1195.5 411.7 C1197.1 408.4 1195.8 405.1 1195.5 400.9 C1195.2 396.7 1192.8 389.6 1193.7 386.5Z" fill="#2ea3e0" />
<ellipse cx="1213.5" cy="415.3" rx="10" ry="9" fill="#7a5a2e"/>
<ellipse cx="1212.6" cy="415.3" rx="5" ry="6.5" fill="#5e4a3a" transform="rotate(30 1212.6 415.3)"/>
<path d="M1215.3 386.5 C1216.2 385.3 1221.2 384.8 1222.5 385.6 C1223.9 386.3 1224.3 389.8 1223.4 391.0 C1222.5 392.2 1218.5 393.5 1217.1 392.8 C1215.8 392.0 1214.4 387.7 1215.3 386.5Z" fill="#8aa845" />
<polygon points="1255.0,336.0 1264.0,336.0 1264.9,343.2 1253.2,345.0 1255.0,352.3 1262.2,355.9 1265.8,361.3 1266.7,373.9 1264.9,372.1 1263.1,361.3 1258.6,355.9 1253.2,350.5 1249.5,343.2 1244.1,334.2 1242.3,325.2 1249.5,316.2 1251.4,318.0 1245.9,327.0 1249.5,336.0" fill="#2ea3e0" />
<polygon points="1267.6,325.2 1271.2,327.0 1278.4,341.4 1289.2,342.3 1285.6,345.0 1291.0,350.5 1280.2,346.8 1276.6,348.6 1271.2,343.2 1269.4,357.7 1267.6,357.7 1268.5,336.0" fill="#2ea3e0" />
<polygon points="1240.5,397.3 1249.5,400.9 1256.8,409.9 1257.7,412.6 1247.7,403.6 1238.7,400.9" fill="#2ea3e0" />
<path d="M877.7 413.3 C879.5 410.6 886.1 410.3 888.5 411.5 C890.9 412.7 891.5 416.9 892.1 420.5 C892.7 424.1 893.6 430.5 892.1 433.2 C890.6 435.9 885.5 437.7 883.1 436.8 C880.7 435.9 878.6 431.7 877.7 427.7 C876.8 423.8 875.9 416.0 877.7 413.3Z" fill="#2ea3e0" />
<clipPath id="pd1"><path d="M877.7 413.3 C879.5 410.6 886.1 410.3 888.5 411.5 C890.9 412.7 891.5 416.9 892.1 420.5 C892.7 424.1 893.6 430.5 892.1 433.2 C890.6 435.9 885.5 437.7 883.1 436.8 C880.7 435.9 878.6 431.7 877.7 427.7 C876.8 423.8 875.9 416.0 877.7 413.3Z"/></clipPath><g clip-path="url(#pd1)" stroke="#7b9a36" stroke-width="0.7" fill="none"><path d="M875.7 402.2 L894.1 408.6"/><path d="M875.7 408.2 L894.1 414.6"/><path d="M875.7 414.2 L894.1 420.6"/><path d="M875.7 420.2 L894.1 426.6"/><path d="M875.7 426.2 L894.1 432.6"/><path d="M875.7 432.2 L894.1 438.6"/><path d="M875.7 438.2 L894.1 444.6"/><path d="M875.7 444.2 L894.1 450.6"/><path d="M882.9 409.5 L887.9 438.8"/></g>
<path d="M867.7 437.7 C869.2 436.5 874.1 435.0 875.9 435.9 C877.7 436.8 879.2 441.3 878.6 443.1 C878.0 444.9 874.1 446.7 872.3 446.7 C870.4 446.7 868.0 444.6 867.2 443.1 C866.5 441.6 866.3 438.9 867.7 437.7Z" fill="#2ea3e0" />
<clipPath id="pd2"><path d="M867.7 437.7 C869.2 436.5 874.1 435.0 875.9 435.9 C877.7 436.8 879.2 441.3 878.6 443.1 C878.0 444.9 874.1 446.7 872.3 446.7 C870.4 446.7 868.0 444.6 867.2 443.1 C866.5 441.6 866.3 438.9 867.7 437.7Z"/></clipPath><g clip-path="url(#pd2)" stroke="#7b9a36" stroke-width="0.7" fill="none"><path d="M865.2 427.7 L880.6 433.1"/><path d="M865.2 433.7 L880.6 439.1"/><path d="M865.2 439.7 L880.6 445.1"/><path d="M865.2 445.7 L880.6 451.1"/><path d="M865.2 451.7 L880.6 457.1"/><path d="M870.9 433.9 L875.9 448.7"/></g>
<path d="M890.3 437.7 C891.0 436.0 896.7 435.7 898.4 436.8 C900.0 437.8 900.9 442.3 900.2 444.0 C899.4 445.6 895.5 447.7 893.9 446.7 C892.2 445.6 889.5 439.3 890.3 437.7Z" fill="#2ea3e0" />
<clipPath id="pd3"><path d="M890.3 437.7 C891.0 436.0 896.7 435.7 898.4 436.8 C900.0 437.8 900.9 442.3 900.2 444.0 C899.4 445.6 895.5 447.7 893.9 446.7 C892.2 445.6 889.5 439.3 890.3 437.7Z"/></clipPath><g clip-path="url(#pd3)" stroke="#7b9a36" stroke-width="0.7" fill="none"><path d="M888.3 429.2 L902.2 434.1"/><path d="M888.3 435.2 L902.2 440.1"/><path d="M888.3 441.2 L902.2 446.1"/><path d="M888.3 447.2 L902.2 452.1"/><path d="M888.3 453.2 L902.2 458.1"/><path d="M893.2 434.8 L898.2 448.7"/></g>
<path d="M862.3 460.2 C864.4 458.4 871.7 456.9 874.1 458.4 C876.5 459.9 876.8 465.9 876.8 469.2 C876.8 472.5 876.0 476.7 874.1 478.2 C872.1 479.7 867.1 479.7 865.0 478.2 C863.0 476.7 862.3 472.2 861.8 469.2 C861.4 466.2 860.3 462.0 862.3 460.2Z" fill="#2ea3e0" />
<clipPath id="pd4"><path d="M862.3 460.2 C864.4 458.4 871.7 456.9 874.1 458.4 C876.5 459.9 876.8 465.9 876.8 469.2 C876.8 472.5 876.0 476.7 874.1 478.2 C872.1 479.7 867.1 479.7 865.0 478.2 C863.0 476.7 862.3 472.2 861.8 469.2 C861.4 466.2 860.3 462.0 862.3 460.2Z"/></clipPath><g clip-path="url(#pd4)" stroke="#7b9a36" stroke-width="0.7" fill="none"><path d="M859.8 448.8 L878.8 455.4"/><path d="M859.8 454.8 L878.8 461.4"/><path d="M859.8 460.8 L878.8 467.4"/><path d="M859.8 466.8 L878.8 473.4"/><path d="M859.8 472.8 L878.8 479.4"/><path d="M859.8 478.8 L878.8 485.4"/><path d="M859.8 484.8 L878.8 491.4"/><path d="M867.3 456.4 L872.3 480.2"/></g>
<path d="M856.0 480.0 C858.0 477.9 862.9 477.6 866.8 478.2 C870.8 478.8 877.7 480.9 879.5 483.6 C881.3 486.3 880.1 492.3 877.7 494.4 C875.3 496.5 868.8 496.8 865.0 496.2 C861.3 495.6 856.6 493.5 855.1 490.8 C853.6 488.1 854.1 482.1 856.0 480.0Z" fill="#2ea3e0" />
<clipPath id="pd5"><path d="M856.0 480.0 C858.0 477.9 862.9 477.6 866.8 478.2 C870.8 478.8 877.7 480.9 879.5 483.6 C881.3 486.3 880.1 492.3 877.7 494.4 C875.3 496.5 868.8 496.8 865.0 496.2 C861.3 495.6 856.6 493.5 855.1 490.8 C853.6 488.1 854.1 482.1 856.0 480.0Z"/></clipPath><g clip-path="url(#pd5)" stroke="#7b9a36" stroke-width="0.7" fill="none"><path d="M853.1 464.9 L881.5 474.8"/><path d="M853.1 470.9 L881.5 480.8"/><path d="M853.1 476.9 L881.5 486.8"/><path d="M853.1 482.9 L881.5 492.8"/><path d="M853.1 488.9 L881.5 498.8"/><path d="M853.1 494.9 L881.5 504.8"/><path d="M853.1 500.9 L881.5 510.8"/><path d="M865.3 476.2 L870.3 498.2"/></g>
<path d="M893.0 472.8 C895.1 470.4 902.1 469.2 904.7 471.0 C907.2 472.8 908.0 478.8 908.3 483.6 C908.6 488.4 908.6 497.3 906.5 500.0 C904.4 502.7 898.1 502.4 895.7 500.0 C893.3 497.6 892.5 489.9 892.1 485.4 C891.6 480.9 890.9 475.2 893.0 472.8Z" fill="#2ea3e0" />
<clipPath id="pd6"><path d="M893.0 472.8 C895.1 470.4 902.1 469.2 904.7 471.0 C907.2 472.8 908.0 478.8 908.3 483.6 C908.6 488.4 908.6 497.3 906.5 500.0 C904.4 502.7 898.1 502.4 895.7 500.0 C893.3 497.6 892.5 489.9 892.1 485.4 C891.6 480.9 890.9 475.2 893.0 472.8Z"/></clipPath><g clip-path="url(#pd6)" stroke="#7b9a36" stroke-width="0.7" fill="none"><path d="M890.1 460.9 L910.3 468.0"/><path d="M890.1 466.9 L910.3 474.0"/><path d="M890.1 472.9 L910.3 480.0"/><path d="M890.1 478.9 L910.3 486.0"/><path d="M890.1 484.9 L910.3 492.0"/><path d="M890.1 490.9 L910.3 498.0"/><path d="M890.1 496.9 L910.3 504.0"/><path d="M890.1 502.9 L910.3 510.0"/><path d="M890.1 508.9 L910.3 516.0"/><path d="M898.2 469.0 L903.2 502.0"/></g>
<path d="M990.3 406.1 C993.1 404.0 999.9 404.9 1002.0 406.1 C1004.1 407.3 1003.8 411.2 1002.9 413.3 C1002.0 415.4 998.2 416.0 996.6 418.7 C994.9 421.4 994.8 427.1 993.0 429.5 C991.2 432.0 987.6 433.5 985.8 433.2 C984.0 432.9 982.3 430.2 982.2 427.7 C982.0 425.3 983.5 422.3 984.9 418.7 C986.2 415.1 987.4 408.2 990.3 406.1Z" fill="#2ea3e0" />
<clipPath id="pd7"><path d="M990.3 406.1 C993.1 404.0 999.9 404.9 1002.0 406.1 C1004.1 407.3 1003.8 411.2 1002.9 413.3 C1002.0 415.4 998.2 416.0 996.6 418.7 C994.9 421.4 994.8 427.1 993.0 429.5 C991.2 432.0 987.6 433.5 985.8 433.2 C984.0 432.9 982.3 430.2 982.2 427.7 C982.0 425.3 983.5 422.3 984.9 418.7 C986.2 415.1 987.4 408.2 990.3 406.1Z"/></clipPath><g clip-path="url(#pd7)" stroke="#7b9a36" stroke-width="0.7" fill="none"><path d="M980.2 394.2 L1004.9 402.9"/><path d="M980.2 400.2 L1004.9 408.9"/><path d="M980.2 406.2 L1004.9 414.9"/><path d="M980.2 412.2 L1004.9 420.9"/><path d="M980.2 418.2 L1004.9 426.9"/><path d="M980.2 424.2 L1004.9 432.9"/><path d="M980.2 430.2 L1004.9 438.9"/><path d="M980.2 436.2 L1004.9 444.9"/><path d="M980.2 442.2 L1004.9 450.9"/><path d="M990.5 404.1 L995.5 435.2"/></g>
<path d="M1005.6 424.1 C1006.9 422.2 1013.1 419.3 1015.5 419.6 C1017.9 419.9 1020.2 423.7 1020.0 425.9 C1019.8 428.2 1016.7 432.3 1014.6 433.2 C1012.5 434.1 1008.9 432.9 1007.4 431.4 C1005.9 429.8 1004.2 426.1 1005.6 424.1Z" fill="#2ea3e0" />
<clipPath id="pd8"><path d="M1005.6 424.1 C1006.9 422.2 1013.1 419.3 1015.5 419.6 C1017.9 419.9 1020.2 423.7 1020.0 425.9 C1019.8 428.2 1016.7 432.3 1014.6 433.2 C1012.5 434.1 1008.9 432.9 1007.4 431.4 C1005.9 429.8 1004.2 426.1 1005.6 424.1Z"/></clipPath><g clip-path="url(#pd8)" stroke="#7b9a36" stroke-width="0.7" fill="none"><path d="M1003.6 410.3 L1022.0 416.7"/><path d="M1003.6 416.3 L1022.0 422.7"/><path d="M1003.6 422.3 L1022.0 428.7"/><path d="M1003.6 428.3 L1022.0 434.7"/><path d="M1003.6 434.3 L1022.0 440.7"/><path d="M1003.6 440.3 L1022.0 446.7"/><path d="M1010.8 417.6 L1015.8 435.2"/></g>
<path d="M982.2 442.2 C983.8 440.1 990.0 437.1 993.0 436.8 C996.0 436.5 999.4 438.3 1000.2 440.4 C1000.9 442.5 999.6 447.3 997.5 449.4 C995.4 451.5 990.0 453.0 987.6 453.0 C985.2 453.0 984.0 451.2 983.1 449.4 C982.2 447.6 980.5 444.3 982.2 442.2Z" fill="#2ea3e0" />
<clipPath id="pd9"><path d="M982.2 442.2 C983.8 440.1 990.0 437.1 993.0 436.8 C996.0 436.5 999.4 438.3 1000.2 440.4 C1000.9 442.5 999.6 447.3 997.5 449.4 C995.4 451.5 990.0 453.0 987.6 453.0 C985.2 453.0 984.0 451.2 983.1 449.4 C982.2 447.6 980.5 444.3 982.2 442.2Z"/></clipPath><g clip-path="url(#pd9)" stroke="#7b9a36" stroke-width="0.7" fill="none"><path d="M980.2 425.9 L1002.2 433.7"/><path d="M980.2 431.9 L1002.2 439.7"/><path d="M980.2 437.9 L1002.2 445.7"/><path d="M980.2 443.9 L1002.2 451.7"/><path d="M980.2 449.9 L1002.2 457.7"/><path d="M980.2 455.9 L1002.2 463.7"/><path d="M980.2 461.9 L1002.2 469.7"/><path d="M989.2 434.8 L994.2 455.0"/></g>
<path d="M997.5 448.5 C998.4 446.7 1003.3 446.2 1004.7 447.6 C1006.0 448.9 1006.5 454.8 1005.6 456.6 C1004.7 458.4 1000.6 459.7 999.3 458.4 C997.9 457.0 996.6 450.3 997.5 448.5Z" fill="#2ea3e0" />
<clipPath id="pd10"><path d="M997.5 448.5 C998.4 446.7 1003.3 446.2 1004.7 447.6 C1006.0 448.9 1006.5 454.8 1005.6 456.6 C1004.7 458.4 1000.6 459.7 999.3 458.4 C997.9 457.0 996.6 450.3 997.5 448.5Z"/></clipPath><g clip-path="url(#pd10)" stroke="#7b9a36" stroke-width="0.7" fill="none"><path d="M995.5 440.7 L1007.6 445.0"/><path d="M995.5 446.7 L1007.6 451.0"/><path d="M995.5 452.7 L1007.6 457.0"/><path d="M995.5 458.7 L1007.6 463.0"/><path d="M995.5 464.7 L1007.6 469.0"/><path d="M999.5 445.6 L1004.5 460.4"/></g>
<path d="M1008.3 452.1 C1010.2 450.6 1015.9 449.5 1018.2 451.2 C1020.5 452.8 1021.2 457.8 1021.8 462.0 C1022.4 466.2 1023.0 473.7 1021.8 476.4 C1020.6 479.1 1016.7 479.4 1014.6 478.2 C1012.5 477.0 1010.5 472.2 1009.2 469.2 C1007.8 466.2 1006.6 463.0 1006.5 460.2 C1006.3 457.3 1006.3 453.6 1008.3 452.1Z" fill="#2ea3e0" />
<clipPath id="pd11"><path d="M1008.3 452.1 C1010.2 450.6 1015.9 449.5 1018.2 451.2 C1020.5 452.8 1021.2 457.8 1021.8 462.0 C1022.4 466.2 1023.0 473.7 1021.8 476.4 C1020.6 479.1 1016.7 479.4 1014.6 478.2 C1012.5 477.0 1010.5 472.2 1009.2 469.2 C1007.8 466.2 1006.6 463.0 1006.5 460.2 C1006.3 457.3 1006.3 453.6 1008.3 452.1Z"/></clipPath><g clip-path="url(#pd11)" stroke="#7b9a36" stroke-width="0.7" fill="none"><path d="M1004.5 441.4 L1023.8 448.2"/><path d="M1004.5 447.4 L1023.8 454.2"/><path d="M1004.5 453.4 L1023.8 460.2"/><path d="M1004.5 459.4 L1023.8 466.2"/><path d="M1004.5 465.4 L1023.8 472.2"/><path d="M1004.5 471.4 L1023.8 478.2"/><path d="M1004.5 477.4 L1023.8 484.2"/><path d="M1004.5 483.4 L1023.8 490.2"/><path d="M1012.1 449.2 L1017.1 480.2"/></g>
<path d="M960.5 478.2 C961.7 475.2 966.5 473.4 969.5 471.0 C972.6 468.6 975.9 466.2 978.6 463.8 C981.3 461.4 984.0 457.5 985.8 456.6 C987.6 455.7 990.0 456.3 989.4 458.4 C988.8 460.5 984.0 465.9 982.2 469.2 C980.4 472.5 978.9 474.9 978.6 478.2 C978.3 481.5 981.6 486.6 980.4 489.0 C979.2 491.4 974.4 492.6 971.4 492.6 C968.3 492.6 964.1 491.4 962.3 489.0 C960.5 486.6 959.3 481.2 960.5 478.2Z" fill="#2ea3e0" />
<clipPath id="pd12"><path d="M960.5 478.2 C961.7 475.2 966.5 473.4 969.5 471.0 C972.6 468.6 975.9 466.2 978.6 463.8 C981.3 461.4 984.0 457.5 985.8 456.6 C987.6 455.7 990.0 456.3 989.4 458.4 C988.8 460.5 984.0 465.9 982.2 469.2 C980.4 472.5 978.9 474.9 978.6 478.2 C978.3 481.5 981.6 486.6 980.4 489.0 C979.2 491.4 974.4 492.6 971.4 492.6 C968.3 492.6 964.1 491.4 962.3 489.0 C960.5 486.6 959.3 481.2 960.5 478.2Z"/></clipPath><g clip-path="url(#pd12)" stroke="#7b9a36" stroke-width="0.7" fill="none"><path d="M958.5 441.4 L991.4 452.9"/><path d="M958.5 447.4 L991.4 458.9"/><path d="M958.5 453.4 L991.4 464.9"/><path d="M958.5 459.4 L991.4 470.9"/><path d="M958.5 465.4 L991.4 476.9"/><path d="M958.5 471.4 L991.4 482.9"/><path d="M958.5 477.4 L991.4 488.9"/><path d="M958.5 483.4 L991.4 494.9"/><path d="M958.5 489.4 L991.4 500.9"/><path d="M958.5 495.4 L991.4 506.9"/><path d="M958.5 501.4 L991.4 512.9"/><path d="M973.0 454.6 L978.0 494.6"/></g>
<path d="M1000.2 492.6 C1000.5 491.4 1005.3 486.0 1007.4 483.6 C1009.5 481.2 1011.6 478.6 1012.8 478.2 C1014.0 477.7 1015.8 478.8 1014.6 480.9 C1013.4 483.0 1008.0 488.9 1005.6 490.8 C1003.2 492.8 999.9 493.8 1000.2 492.6Z" fill="#2ea3e0" />
<clipPath id="pd13"><path d="M1000.2 492.6 C1000.5 491.4 1005.3 486.0 1007.4 483.6 C1009.5 481.2 1011.6 478.6 1012.8 478.2 C1014.0 477.7 1015.8 478.8 1014.6 480.9 C1013.4 483.0 1008.0 488.9 1005.6 490.8 C1003.2 492.8 999.9 493.8 1000.2 492.6Z"/></clipPath><g clip-path="url(#pd13)" stroke="#7b9a36" stroke-width="0.7" fill="none"><path d="M998.2 468.8 L1016.6 475.3"/><path d="M998.2 474.8 L1016.6 481.3"/><path d="M998.2 480.8 L1016.6 487.3"/><path d="M998.2 486.8 L1016.6 493.3"/><path d="M998.2 492.8 L1016.6 499.3"/><path d="M998.2 498.8 L1016.6 505.3"/><path d="M1005.4 476.2 L1010.4 494.6"/></g>
<path d="M976.8 494.4 C979.8 493.3 988.8 492.6 993.0 493.5 C997.2 494.4 1005.0 498.9 1002.0 500.0 C999.0 501.1 979.2 500.9 975.0 500.0 C970.8 499.1 973.8 495.5 976.8 494.4Z" fill="#2ea3e0" />
<clipPath id="pd14"><path d="M976.8 494.4 C979.8 493.3 988.8 492.6 993.0 493.5 C997.2 494.4 1005.0 498.9 1002.0 500.0 C999.0 501.1 979.2 500.9 975.0 500.0 C970.8 499.1 973.8 495.5 976.8 494.4Z"/></clipPath><g clip-path="url(#pd14)" stroke="#7b9a36" stroke-width="0.7" fill="none"><path d="M973.0 479.1 L1004.0 490.0"/><path d="M973.0 485.1 L1004.0 496.0"/><path d="M973.0 491.1 L1004.0 502.0"/><path d="M973.0 497.1 L1004.0 508.0"/><path d="M973.0 503.1 L1004.0 514.0"/><path d="M973.0 509.1 L1004.0 520.0"/><path d="M986.5 491.5 L991.5 502.0"/></g>
<path d="M924.5 496.2 C926.9 495.6 934.7 495.6 937.1 496.2 C939.5 496.8 941.3 499.4 938.9 500.0 C936.5 500.6 925.1 500.6 922.7 500.0 C920.3 499.4 922.1 496.8 924.5 496.2Z" fill="#2ea3e0" />
<clipPath id="pd15"><path d="M924.5 496.2 C926.9 495.6 934.7 495.6 937.1 496.2 C939.5 496.8 941.3 499.4 938.9 500.0 C936.5 500.6 925.1 500.6 922.7 500.0 C920.3 499.4 922.1 496.8 924.5 496.2Z"/></clipPath><g clip-path="url(#pd15)" stroke="#7b9a36" stroke-width="0.7" fill="none"><path d="M920.7 486.1 L940.9 493.2"/><path d="M920.7 492.1 L940.9 499.2"/><path d="M920.7 498.1 L940.9 505.2"/><path d="M920.7 504.1 L940.9 511.2"/><path d="M928.8 494.2 L933.8 502.0"/></g>
<path d="M856.0 480.0 C859.6 478.5 873.8 478.5 877.7 480.0 C881.6 481.5 880.1 486.3 879.5 489.0 C878.9 491.7 876.8 495.0 874.1 496.2 C871.4 497.4 866.2 497.4 863.2 496.2 C860.2 495.0 857.2 491.7 856.0 489.0 C854.8 486.3 852.4 481.5 856.0 480.0Z" fill="#2ea3e0" />
<clipPath id="pd16"><path d="M856.0 480.0 C859.6 478.5 873.8 478.5 877.7 480.0 C881.6 481.5 880.1 486.3 879.5 489.0 C878.9 491.7 876.8 495.0 874.1 496.2 C871.4 497.4 866.2 497.4 863.2 496.2 C860.2 495.0 857.2 491.7 856.0 489.0 C854.8 486.3 852.4 481.5 856.0 480.0Z"/></clipPath><g clip-path="url(#pd16)" stroke="#7b9a36" stroke-width="0.7" fill="none"><path d="M854.0 467.0 L881.5 476.6"/><path d="M854.0 473.0 L881.5 482.6"/><path d="M854.0 479.0 L881.5 488.6"/><path d="M854.0 485.0 L881.5 494.6"/><path d="M854.0 491.0 L881.5 500.6"/><path d="M854.0 497.0 L881.5 506.6"/><path d="M854.0 503.0 L881.5 512.6"/><path d="M865.7 478.0 L870.7 498.2"/></g>
<path d="M892.1 480.0 C894.0 476.4 903.5 477.6 906.5 480.0 C909.5 482.4 909.8 489.9 910.1 494.4 C910.4 498.9 910.1 504.2 908.3 507.0 C906.5 509.9 901.5 512.4 899.3 511.5 C897.0 510.6 896.0 506.9 894.8 501.6 C893.6 496.4 890.1 483.6 892.1 480.0Z" fill="#2ea3e0" />
<clipPath id="pd17"><path d="M892.1 480.0 C894.0 476.4 903.5 477.6 906.5 480.0 C909.5 482.4 909.8 489.9 910.1 494.4 C910.4 498.9 910.1 504.2 908.3 507.0 C906.5 509.9 901.5 512.4 899.3 511.5 C897.0 510.6 896.0 506.9 894.8 501.6 C893.6 496.4 890.1 483.6 892.1 480.0Z"/></clipPath><g clip-path="url(#pd17)" stroke="#7b9a36" stroke-width="0.7" fill="none"><path d="M890.1 469.2 L912.1 476.9"/><path d="M890.1 475.2 L912.1 482.9"/><path d="M890.1 481.2 L912.1 488.9"/><path d="M890.1 487.2 L912.1 494.9"/><path d="M890.1 493.2 L912.1 500.9"/><path d="M890.1 499.2 L912.1 506.9"/><path d="M890.1 505.2 L912.1 512.9"/><path d="M890.1 511.2 L912.1 518.9"/><path d="M890.1 517.2 L912.1 524.9"/><path d="M899.1 478.0 L904.1 513.5"/></g>
<path d="M921.8 499.8 C924.1 497.7 932.2 495.6 935.3 496.2 C938.5 496.8 940.7 500.7 940.7 503.4 C940.7 506.1 937.4 510.3 935.3 512.4 C933.2 514.5 930.4 516.6 928.1 516.0 C925.9 515.4 922.9 511.5 921.8 508.8 C920.8 506.1 919.5 501.9 921.8 499.8Z" fill="#2ea3e0" />
<clipPath id="pd18"><path d="M921.8 499.8 C924.1 497.7 932.2 495.6 935.3 496.2 C938.5 496.8 940.7 500.7 940.7 503.4 C940.7 506.1 937.4 510.3 935.3 512.4 C933.2 514.5 930.4 516.6 928.1 516.0 C925.9 515.4 922.9 511.5 921.8 508.8 C920.8 506.1 919.5 501.9 921.8 499.8Z"/></clipPath><g clip-path="url(#pd18)" stroke="#7b9a36" stroke-width="0.7" fill="none"><path d="M919.8 485.0 L942.7 493.1"/><path d="M919.8 491.0 L942.7 499.1"/><path d="M919.8 497.0 L942.7 505.1"/><path d="M919.8 503.0 L942.7 511.1"/><path d="M919.8 509.0 L942.7 517.1"/><path d="M919.8 515.0 L942.7 523.1"/><path d="M919.8 521.0 L942.7 529.1"/><path d="M929.3 494.2 L934.3 518.0"/></g>
<path d="M958.7 480.0 C961.7 478.5 975.0 478.5 978.6 480.0 C982.2 481.5 981.9 486.8 980.4 489.0 C978.9 491.3 972.9 493.5 969.5 493.5 C966.2 493.5 962.3 491.3 960.5 489.0 C958.7 486.8 955.7 481.5 958.7 480.0Z" fill="#2ea3e0" />
<clipPath id="pd19"><path d="M958.7 480.0 C961.7 478.5 975.0 478.5 978.6 480.0 C982.2 481.5 981.9 486.8 980.4 489.0 C978.9 491.3 972.9 493.5 969.5 493.5 C966.2 493.5 962.3 491.3 960.5 489.0 C958.7 486.8 955.7 481.5 958.7 480.0Z"/></clipPath><g clip-path="url(#pd19)" stroke="#7b9a36" stroke-width="0.7" fill="none"><path d="M956.7 467.8 L982.4 476.7"/><path d="M956.7 473.8 L982.4 482.7"/><path d="M956.7 479.8 L982.4 488.7"/><path d="M956.7 485.8 L982.4 494.7"/><path d="M956.7 491.8 L982.4 500.7"/><path d="M956.7 497.8 L982.4 506.7"/><path d="M967.5 478.0 L972.5 495.5"/></g>
<path d="M973.2 505.2 C974.1 502.1 978.9 501.0 982.2 499.8 C985.5 498.6 988.8 497.1 993.0 498.0 C997.2 498.9 1005.3 503.4 1007.4 505.2 C1009.5 507.0 1008.0 508.5 1005.6 508.8 C1003.2 509.1 996.3 506.4 993.0 507.0 C989.7 507.6 987.6 510.3 985.8 512.4 C984.0 514.5 983.7 518.6 982.2 519.6 C980.7 520.7 978.3 521.1 976.8 518.7 C975.3 516.3 972.3 508.4 973.2 505.2Z" fill="#2ea3e0" />
<clipPath id="pd20"><path d="M973.2 505.2 C974.1 502.1 978.9 501.0 982.2 499.8 C985.5 498.6 988.8 497.1 993.0 498.0 C997.2 498.9 1005.3 503.4 1007.4 505.2 C1009.5 507.0 1008.0 508.5 1005.6 508.8 C1003.2 509.1 996.3 506.4 993.0 507.0 C989.7 507.6 987.6 510.3 985.8 512.4 C984.0 514.5 983.7 518.6 982.2 519.6 C980.7 520.7 978.3 521.1 976.8 518.7 C975.3 516.3 972.3 508.4 973.2 505.2Z"/></clipPath><g clip-path="url(#pd20)" stroke="#7b9a36" stroke-width="0.7" fill="none"><path d="M971.2 480.7 L1009.4 494.1"/><path d="M971.2 486.7 L1009.4 500.1"/><path d="M971.2 492.7 L1009.4 506.1"/><path d="M971.2 498.7 L1009.4 512.1"/><path d="M971.2 504.7 L1009.4 518.1"/><path d="M971.2 510.7 L1009.4 524.1"/><path d="M971.2 516.7 L1009.4 530.1"/><path d="M971.2 522.7 L1009.4 536.1"/><path d="M971.2 528.7 L1009.4 542.1"/><path d="M988.3 496.0 L993.3 521.6"/></g>
<path d="M1000.2 480.0 C1002.9 478.5 1014.3 478.2 1014.6 480.0 C1014.9 481.8 1004.7 489.3 1002.0 490.8 C999.3 492.3 998.7 490.8 998.4 489.0 C998.1 487.2 997.5 481.5 1000.2 480.0Z" fill="#2ea3e0" />
<clipPath id="pd21"><path d="M1000.2 480.0 C1002.9 478.5 1014.3 478.2 1014.6 480.0 C1014.9 481.8 1004.7 489.3 1002.0 490.8 C999.3 492.3 998.7 490.8 998.4 489.0 C998.1 487.2 997.5 481.5 1000.2 480.0Z"/></clipPath><g clip-path="url(#pd21)" stroke="#7b9a36" stroke-width="0.7" fill="none"><path d="M996.4 469.9 L1016.6 477.0"/><path d="M996.4 475.9 L1016.6 483.0"/><path d="M996.4 481.9 L1016.6 489.0"/><path d="M996.4 487.9 L1016.6 495.0"/><path d="M996.4 493.9 L1016.6 501.0"/><path d="M996.4 499.9 L1016.6 507.0"/><path d="M1004.5 478.0 L1009.5 492.8"/></g>
<path d="M892.1 581.8 C894.2 580.2 901.8 579.8 904.7 580.5 C907.6 581.3 909.2 584.1 909.5 586.3 C909.8 588.5 908.5 592.0 906.5 593.5 C904.5 595.0 899.9 595.9 897.5 595.3 C895.0 594.7 892.6 592.2 891.7 589.9 C890.8 587.7 889.9 583.4 892.1 581.8Z" fill="#2ea3e0" />
<path d="M914.6 598.0 C915.8 596.8 920.1 595.5 921.8 596.2 C923.5 597.0 925.3 600.9 924.9 602.5 C924.4 604.2 920.8 606.0 919.1 606.1 C917.4 606.3 915.3 604.8 914.6 603.4 C913.8 602.1 913.4 599.2 914.6 598.0Z" fill="#2ea3e0" />
<path d="M880.4 606.1 C881.5 604.6 884.7 603.1 885.8 604.3 C886.9 605.5 887.6 611.1 887.0 613.3 C886.4 615.6 883.5 617.8 882.2 617.8 C880.8 617.8 879.4 615.3 879.1 613.3 C878.8 611.4 879.2 607.6 880.4 606.1Z" fill="#2ea3e0" />
<path d="M890.6 604.3 C891.8 602.7 896.0 602.5 897.5 603.4 C899.0 604.3 900.2 607.6 899.6 609.7 C899.0 611.8 895.4 615.4 893.9 616.0 C892.3 616.6 890.8 615.3 890.3 613.3 C889.7 611.4 889.4 606.0 890.6 604.3Z" fill="#2ea3e0" />
<circle cx="973.2" cy="539.5" r="2.3" fill="#2ea3e0"/>
<rect x="1037.3" y="189.2" width="2.1" height="1.8" fill="#8a8480" opacity="0.85"/>
<rect x="1018.0" y="197.8" width="1.7" height="2.1" fill="#7db8e0" opacity="0.85"/>
<rect x="1031.1" y="189.0" width="0.9" height="1.1" fill="#8fd0ee" opacity="0.85"/>
<rect x="1026.6" y="192.4" width="1.3" height="1.9" fill="#7db8e0" opacity="0.85"/>
<rect x="1022.3" y="189.9" width="0.8" height="2.0" fill="#8fd0ee" opacity="0.85"/>
<rect x="1043.4" y="182.3" width="1.0" height="1.2" fill="#8fd0ee" opacity="0.85"/>
<rect x="1034.4" y="185.5" width="2.1" height="1.8" fill="#9a948e" opacity="0.85"/>
<rect x="1024.9" y="188.2" width="1.0" height="0.9" fill="#6aa8d8" opacity="0.85"/>
<rect x="1041.6" y="185.2" width="1.8" height="0.9" fill="#6aa8d8" opacity="0.85"/>
<rect x="1040.8" y="182.9" width="1.5" height="1.8" fill="#7db8e0" opacity="0.85"/>
<rect x="1028.3" y="195.0" width="1.3" height="1.4" fill="#8a8480" opacity="0.85"/>
<rect x="1039.0" y="185.4" width="0.8" height="0.9" fill="#8fd0ee" opacity="0.85"/>
<rect x="1039.0" y="183.8" width="1.1" height="1.9" fill="#9a948e" opacity="0.85"/>
<rect x="1026.2" y="190.5" width="1.9" height="1.0" fill="#6aa8d8" opacity="0.85"/>
<rect x="1038.5" y="187.4" width="0.9" height="1.3" fill="#8a8480" opacity="0.85"/>
<rect x="1025.0" y="188.3" width="1.8" height="0.9" fill="#6aa8d8" opacity="0.85"/>
<rect x="1052.3" y="191.3" width="1.8" height="1.2" fill="#9a948e" opacity="0.85"/>
<rect x="1044.5" y="190.3" width="1.5" height="1.4" fill="#8fd0ee" opacity="0.85"/>
<rect x="1053.9" y="199.8" width="1.7" height="1.0" fill="#7db8e0" opacity="0.85"/>
<rect x="1054.6" y="201.1" width="2.2" height="1.6" fill="#8fd0ee" opacity="0.85"/>
<rect x="1056.1" y="195.7" width="1.4" height="1.0" fill="#9a948e" opacity="0.85"/>
<rect x="1049.4" y="193.9" width="2.0" height="2.2" fill="#9a948e" opacity="0.85"/>
<rect x="1059.3" y="206.2" width="1.2" height="1.5" fill="#8fd0ee" opacity="0.85"/>
<rect x="1050.1" y="185.3" width="1.1" height="2.1" fill="#6aa8d8" opacity="0.85"/>
<rect x="1048.3" y="187.0" width="1.6" height="1.5" fill="#7db8e0" opacity="0.85"/>
<rect x="1057.9" y="204.6" width="1.7" height="1.9" fill="#6aa8d8" opacity="0.85"/>
<rect x="1054.3" y="199.7" width="1.2" height="2.2" fill="#6aa8d8" opacity="0.85"/>
<rect x="1056.5" y="205.0" width="2.0" height="1.5" fill="#6aa8d8" opacity="0.85"/>
<rect x="1048.3" y="189.1" width="1.5" height="1.7" fill="#6aa8d8" opacity="0.85"/>
<rect x="1051.6" y="193.3" width="2.0" height="1.3" fill="#8fd0ee" opacity="0.85"/>
<rect x="1058.2" y="209.0" width="2.1" height="1.5" fill="#8a8480" opacity="0.85"/>
<rect x="1055.6" y="207.1" width="2.0" height="1.2" fill="#7db8e0" opacity="0.85"/>
<rect x="1049.8" y="210.8" width="1.9" height="1.6" fill="#9a948e" opacity="0.85"/>
<rect x="1054.4" y="213.6" width="1.2" height="2.2" fill="#8fd0ee" opacity="0.85"/>
<rect x="1055.5" y="210.9" width="1.1" height="1.8" fill="#7db8e0" opacity="0.85"/>
<rect x="1047.9" y="212.4" width="2.0" height="1.0" fill="#8fd0ee" opacity="0.85"/>
<rect x="1051.7" y="211.2" width="1.3" height="1.7" fill="#7db8e0" opacity="0.85"/>
<rect x="1047.7" y="215.8" width="0.8" height="1.4" fill="#6aa8d8" opacity="0.85"/>
<rect x="1048.9" y="215.8" width="1.6" height="2.2" fill="#8a8480" opacity="0.85"/>
<rect x="1046.2" y="213.0" width="1.3" height="1.6" fill="#6aa8d8" opacity="0.85"/>
<rect x="1045.9" y="216.5" width="1.7" height="1.3" fill="#8fd0ee" opacity="0.85"/>
<rect x="1055.1" y="209.5" width="1.1" height="1.0" fill="#7db8e0" opacity="0.85"/>
<rect x="1056.4" y="207.0" width="1.0" height="1.6" fill="#8a8480" opacity="0.85"/>
<rect x="1049.1" y="215.2" width="1.6" height="1.4" fill="#8fd0ee" opacity="0.85"/>
<rect x="1051.0" y="213.6" width="1.3" height="2.0" fill="#8fd0ee" opacity="0.85"/>
<rect x="1047.8" y="216.4" width="1.5" height="1.4" fill="#6aa8d8" opacity="0.85"/>
<rect x="1043.1" y="218.3" width="1.0" height="0.8" fill="#8a8480" opacity="0.85"/>
<rect x="1042.4" y="211.3" width="1.0" height="1.3" fill="#9a948e" opacity="0.85"/>
<rect x="1044.9" y="226.0" width="1.9" height="1.1" fill="#6aa8d8" opacity="0.85"/>
<rect x="1050.1" y="225.1" width="1.5" height="2.2" fill="#8a8480" opacity="0.85"/>
<rect x="1048.1" y="226.0" width="1.0" height="1.9" fill="#6aa8d8" opacity="0.85"/>
<rect x="1047.0" y="220.0" width="1.8" height="0.8" fill="#6aa8d8" opacity="0.85"/>
<rect x="1047.7" y="220.9" width="0.9" height="1.2" fill="#9a948e" opacity="0.85"/>
<rect x="1044.3" y="226.2" width="1.1" height="1.4" fill="#9a948e" opacity="0.85"/>
<rect x="1048.5" y="227.0" width="1.7" height="2.0" fill="#9a948e" opacity="0.85"/>
<rect x="1047.8" y="223.5" width="2.1" height="1.5" fill="#7db8e0" opacity="0.85"/>
<rect x="1041.5" y="221.6" width="1.6" height="1.7" fill="#9a948e" opacity="0.85"/>
<rect x="1045.8" y="227.6" width="1.6" height="1.5" fill="#6aa8d8" opacity="0.85"/>
<rect x="1046.1" y="223.0" width="0.9" height="1.8" fill="#6aa8d8" opacity="0.85"/>
<rect x="1050.5" y="227.8" width="0.8" height="1.8" fill="#7db8e0" opacity="0.85"/>
<rect x="1050.7" y="225.4" width="2.0" height="1.1" fill="#7db8e0" opacity="0.85"/>
<rect x="1044.7" y="223.4" width="2.1" height="1.0" fill="#8a8480" opacity="0.85"/>
<rect x="1047.3" y="214.3" width="1.1" height="1.6" fill="#9a948e" opacity="0.85"/>
<rect x="1046.0" y="226.1" width="1.0" height="1.4" fill="#8a8480" opacity="0.85"/>
<rect x="1045.1" y="229.1" width="1.6" height="1.5" fill="#6aa8d8" opacity="0.85"/>
<rect x="1022.9" y="238.4" width="1.6" height="1.7" fill="#6aa8d8" opacity="0.85"/>
<rect x="1026.3" y="241.0" width="1.2" height="1.6" fill="#6aa8d8" opacity="0.85"/>
<rect x="1026.1" y="242.9" width="1.9" height="2.0" fill="#9a948e" opacity="0.85"/>
<rect x="1027.7" y="239.6" width="1.7" height="0.9" fill="#7db8e0" opacity="0.85"/>
<rect x="1043.8" y="230.9" width="1.1" height="2.0" fill="#9a948e" opacity="0.85"/>
<rect x="1021.4" y="240.9" width="1.6" height="1.3" fill="#8fd0ee" opacity="0.85"/>
<rect x="1024.4" y="242.8" width="1.8" height="0.9" fill="#9a948e" opacity="0.85"/>
<rect x="1025.3" y="239.9" width="1.3" height="1.1" fill="#6aa8d8" opacity="0.85"/>
<rect x="1027.0" y="242.6" width="1.3" height="1.8" fill="#6aa8d8" opacity="0.85"/>
<rect x="1035.0" y="236.3" width="2.0" height="1.5" fill="#8a8480" opacity="0.85"/>
<rect x="1021.5" y="238.5" width="0.9" height="0.9" fill="#8fd0ee" opacity="0.85"/>
<rect x="1040.3" y="234.6" width="1.5" height="1.9" fill="#7db8e0" opacity="0.85"/>
<rect x="1036.6" y="237.6" width="2.1" height="1.3" fill="#9a948e" opacity="0.85"/>
<rect x="1043.8" y="227.5" width="1.3" height="1.3" fill="#9a948e" opacity="0.85"/>
<rect x="1043.3" y="229.1" width="1.0" height="1.2" fill="#8fd0ee" opacity="0.85"/>
<rect x="1026.4" y="238.9" width="1.9" height="1.2" fill="#7db8e0" opacity="0.85"/>
<rect x="1016.4" y="222.0" width="2.1" height="1.0" fill="#6aa8d8" opacity="0.85"/>
<rect x="1021.4" y="234.9" width="1.0" height="1.1" fill="#7db8e0" opacity="0.85"/>
<rect x="1017.7" y="226.2" width="2.1" height="1.8" fill="#6aa8d8" opacity="0.85"/>
<rect x="1020.2" y="232.6" width="2.2" height="1.5" fill="#8fd0ee" opacity="0.85"/>
<rect x="1019.1" y="232.6" width="1.7" height="1.8" fill="#6aa8d8" opacity="0.85"/>
<rect x="1020.0" y="243.2" width="1.4" height="0.9" fill="#8a8480" opacity="0.85"/>
<rect x="1015.9" y="218.6" width="2.1" height="1.8" fill="#8fd0ee" opacity="0.85"/>
<rect x="1012.3" y="219.9" width="0.9" height="1.1" fill="#7db8e0" opacity="0.85"/>
<rect x="1019.6" y="223.8" width="2.0" height="1.4" fill="#7db8e0" opacity="0.85"/>
<rect x="1016.3" y="214.6" width="1.8" height="1.7" fill="#8fd0ee" opacity="0.85"/>
<rect x="1013.6" y="225.0" width="1.0" height="1.6" fill="#8fd0ee" opacity="0.85"/>
<rect x="1019.0" y="222.4" width="0.8" height="1.6" fill="#9a948e" opacity="0.85"/>
<rect x="1020.5" y="229.6" width="1.0" height="0.8" fill="#6aa8d8" opacity="0.85"/>
<rect x="1018.1" y="226.2" width="1.6" height="1.0" fill="#9a948e" opacity="0.85"/>
<rect x="1024.7" y="241.2" width="1.2" height="1.0" fill="#7db8e0" opacity="0.85"/>
<rect x="1018.0" y="213.3" width="2.2" height="1.7" fill="#6aa8d8" opacity="0.85"/>
<rect x="1013.4" y="209.6" width="1.1" height="1.2" fill="#6aa8d8" opacity="0.85"/>
<rect x="1017.6" y="210.8" width="1.3" height="1.9" fill="#7db8e0" opacity="0.85"/>
<rect x="1022.4" y="210.7" width="1.6" height="1.4" fill="#7db8e0" opacity="0.85"/>
<rect x="1020.9" y="207.7" width="1.9" height="1.3" fill="#8fd0ee" opacity="0.85"/>
<rect x="1013.1" y="208.9" width="1.5" height="1.3" fill="#7db8e0" opacity="0.85"/>
<rect x="1013.9" y="213.7" width="0.8" height="0.9" fill="#8fd0ee" opacity="0.85"/>
<rect x="1019.8" y="207.0" width="2.1" height="0.8" fill="#8a8480" opacity="0.85"/>
<rect x="1014.8" y="209.8" width="0.8" height="1.6" fill="#8fd0ee" opacity="0.85"/>
<rect x="1016.0" y="209.8" width="1.0" height="1.8" fill="#9a948e" opacity="0.85"/>
<rect x="1019.1" y="208.8" width="1.3" height="1.4" fill="#8fd0ee" opacity="0.85"/>
<rect x="1015.7" y="210.5" width="1.9" height="2.1" fill="#8a8480" opacity="0.85"/>
<rect x="1016.3" y="207.0" width="1.0" height="2.0" fill="#7db8e0" opacity="0.85"/>
<rect x="1009.4" y="215.7" width="1.1" height="1.8" fill="#6aa8d8" opacity="0.85"/>
<rect x="1013.2" y="209.6" width="1.1" height="1.6" fill="#6aa8d8" opacity="0.85"/>
<rect x="1021.9" y="208.3" width="1.9" height="1.9" fill="#7db8e0" opacity="0.85"/>
<rect x="1018.5" y="196.9" width="2.0" height="1.5" fill="#7db8e0" opacity="0.85"/>
<rect x="1021.0" y="208.8" width="1.2" height="2.1" fill="#6aa8d8" opacity="0.85"/>
<rect x="1019.7" y="201.9" width="0.9" height="1.1" fill="#7db8e0" opacity="0.85"/>
<rect x="1022.6" y="207.6" width="1.9" height="0.8" fill="#7db8e0" opacity="0.85"/>
<rect x="1019.4" y="199.8" width="1.6" height="1.8" fill="#9a948e" opacity="0.85"/>
<rect x="1020.0" y="198.2" width="1.8" height="1.7" fill="#8a8480" opacity="0.85"/>
<rect x="1020.9" y="209.7" width="0.8" height="1.9" fill="#8fd0ee" opacity="0.85"/>
<rect x="1017.5" y="200.9" width="1.3" height="1.6" fill="#9a948e" opacity="0.85"/>
<rect x="1024.2" y="202.1" width="1.8" height="0.9" fill="#7db8e0" opacity="0.85"/>
<rect x="1022.7" y="202.2" width="1.8" height="2.0" fill="#8a8480" opacity="0.85"/>
<rect x="1017.0" y="199.9" width="2.1" height="1.1" fill="#8a8480" opacity="0.85"/>
<rect x="1024.0" y="203.7" width="1.3" height="1.9" fill="#8a8480" opacity="0.85"/>
<rect x="1021.2" y="196.9" width="1.3" height="1.0" fill="#8a8480" opacity="0.85"/>
<rect x="1022.8" y="196.8" width="0.9" height="1.2" fill="#6aa8d8" opacity="0.85"/>
<rect x="1015.0" y="200.9" width="0.9" height="1.4" fill="#8fd0ee" opacity="0.85"/>
<rect x="1017.7" y="205.5" width="2.0" height="2.0" fill="#9a948e" opacity="0.85"/>
<path d="M1029.0 201.0 C1029.3 199.8 1032.0 198.7 1033.0 199.0 C1034.0 199.3 1035.3 201.8 1035.0 203.0 C1034.7 204.2 1032.0 206.3 1031.0 206.0 C1030.0 205.7 1028.7 202.2 1029.0 201.0Z" fill="#8fe8c8" />
<path d="M1034.0 207.0 C1035.0 205.7 1042.2 203.7 1044.0 204.0 C1045.8 204.3 1046.0 207.7 1045.0 209.0 C1044.0 210.3 1039.8 212.3 1038.0 212.0 C1036.2 211.7 1033.0 208.3 1034.0 207.0Z" fill="#8fe8c8" />
<path d="M1037.0 212.0 C1037.3 211.3 1041.5 213.0 1042.0 214.0 C1042.5 215.0 1040.8 218.3 1040.0 218.0 C1039.2 217.7 1036.7 212.7 1037.0 212.0Z" fill="#8fe8c8" />
<rect x="1035.3" y="193.2" width="5.4" height="4.6" fill="#7a7a80"/>
<polygon points="1023,203 1028,201 1028,208" fill="#7a7a80"/>
<rect x="1048" y="212.5" width="14" height="4" fill="#958c86" transform="rotate(-22 1055 214)"/>
<path d="M882.8 261.1 C883.8 262.8 887.0 268.0 889.0 271.4 C891.0 274.9 893.6 278.8 894.9 281.8 C896.1 284.7 896.4 286.0 896.6 289.0 C896.7 292.0 897.0 296.8 895.7 299.8 C894.3 302.8 892.1 304.8 888.5 307.0 C884.9 309.3 877.5 310.9 874.1 313.3 C870.6 315.7 868.5 317.1 867.7 321.4 C867.0 325.8 869.1 334.4 869.5 339.5 C870.0 344.6 871.1 348.2 870.5 352.1 C869.8 356.0 868.3 359.3 865.9 362.9 C863.5 366.5 859.2 370.1 856.0 373.7 C852.9 377.3 848.7 380.6 847.0 384.5 C845.4 388.4 845.8 392.9 846.1 397.1 C846.4 401.3 848.2 405.2 848.8 409.7 C849.4 414.2 849.1 420.5 849.7 424.1 C850.3 427.7 850.9 430.5 852.4 431.4 C853.9 432.3 857.4 428.9 858.7 429.5 C860.1 430.2 860.8 432.7 860.5 435.0 C860.2 437.2 857.1 441.3 856.9 443.1 C856.8 444.9 858.3 446.8 859.6 445.8 C861.0 444.7 862.9 438.9 865.0 436.8 C867.1 434.7 871.1 433.8 872.3 433.2" fill="none" stroke="#a2a2a4" stroke-width="2.7" stroke-linejoin="round" stroke-linecap="round" />
<path d="M872.3 433.2 C873.8 433.8 878.9 435.3 881.3 436.8 C883.7 438.3 886.1 439.5 886.7 442.2 C887.3 444.9 884.9 450.0 884.9 453.0 C884.9 456.0 884.9 459.3 886.7 460.2 C888.5 461.1 893.9 460.2 895.7 458.4 C897.5 456.6 896.0 451.5 897.5 449.4 C899.0 447.3 902.7 445.5 904.7 445.8 C906.6 446.1 908.6 448.8 909.2 451.2 C909.8 453.6 907.5 457.5 908.3 460.2 C909.0 462.9 912.5 464.4 913.7 467.4 C914.9 470.4 916.1 474.9 915.5 478.2 C914.9 481.5 910.7 484.2 910.1 487.2 C909.5 490.2 910.1 494.4 911.9 496.2 C913.7 498.0 918.2 498.9 920.9 498.0 C923.6 497.1 925.4 492.6 928.1 490.8 C930.8 489.0 934.4 487.2 937.1 487.2 C939.8 487.2 943.1 490.2 944.3 490.8" fill="none" stroke="#a2a2a4" stroke-width="2.7" stroke-linejoin="round" stroke-linecap="round" />
<path d="M886.7 442.2 C887.6 441.0 889.7 436.5 892.1 435.0 C894.5 433.5 898.4 433.2 901.1 433.2 C903.8 433.2 905.9 435.9 908.3 435.0 C910.7 434.1 913.7 430.5 915.5 427.7 C917.3 425.0 917.0 421.1 919.1 418.7 C921.2 416.3 925.4 413.6 928.1 413.3 C930.8 413.0 933.8 414.8 935.3 416.9 C936.8 419.0 935.3 424.1 937.1 425.9 C938.9 427.7 943.7 426.5 946.1 427.7 C948.5 428.9 950.3 430.2 951.5 433.2 C952.7 436.2 952.1 442.8 953.3 445.8 C954.5 448.8 957.8 450.3 958.7 451.2" fill="none" stroke="#a2a2a4" stroke-width="2.7" stroke-linejoin="round" stroke-linecap="round" />
<path d="M1020.0 431.4 C1020.6 429.8 1022.1 425.2 1023.6 422.3 C1025.1 419.5 1026.9 415.7 1029.0 414.2 C1031.1 412.7 1033.8 412.0 1036.2 413.3 C1038.6 414.7 1041.6 419.9 1043.4 422.3 C1045.2 424.7 1047.3 425.6 1047.0 427.7 C1046.7 429.8 1044.0 433.2 1041.6 435.0 C1039.2 436.8 1035.3 438.3 1032.6 438.6 C1029.9 438.9 1027.5 438.0 1025.4 436.8 C1023.3 435.6 1021.8 430.5 1020.0 431.4 C1018.2 432.3 1016.7 438.9 1014.6 442.2 C1012.5 445.5 1009.2 448.2 1007.4 451.2 C1005.6 454.2 1006.2 457.8 1003.8 460.2 C1001.4 462.6 996.6 463.8 993.0 465.6 C989.4 467.4 984.6 468.9 982.2 471.0 C979.8 473.1 978.6 475.5 978.6 478.2 C978.6 480.9 981.6 484.8 982.2 487.2 C982.8 489.6 982.2 491.7 982.2 492.6" fill="none" stroke="#a2a2a4" stroke-width="2.7" stroke-linejoin="round" stroke-linecap="round" />
<path d="M851.5 571.9 C852.4 572.9 854.1 577.7 856.9 578.2 C859.8 578.6 865.2 575.8 868.6 574.6 C872.1 573.4 875.0 572.3 877.7 571.0 C880.4 569.6 882.5 566.9 884.9 566.5 C887.3 566.0 891.0 566.8 892.1 568.3 C893.1 569.8 892.1 573.1 891.2 575.5 C890.3 577.9 887.1 580.0 886.7 582.7 C886.2 585.4 888.2 587.8 888.5 591.7 C888.8 595.6 888.2 601.9 888.5 606.1 C888.8 610.3 889.1 614.2 890.3 616.9 C891.5 619.6 895.1 619.6 895.7 622.3 C896.3 625.0 894.9 630.0 893.9 633.2 C892.8 636.3 890.1 639.9 889.4 641.3" fill="none" stroke="#a2a2a4" stroke-width="2.7" stroke-linejoin="round" stroke-linecap="round" />
<path d="M935.3 598.9 C936.1 600.1 937.4 605.8 939.8 606.1 C942.2 606.4 946.0 602.5 949.7 600.7 C953.5 598.9 957.5 596.4 962.3 595.3 C967.1 594.3 974.7 596.2 978.6 594.4 C982.5 592.6 984.3 587.7 985.8 584.5 C987.3 581.4 988.3 578.2 987.6 575.5 C986.8 572.8 982.2 571.6 981.3 568.3 C980.4 565.0 981.1 558.2 982.2 555.7 C983.2 553.1 984.9 552.7 987.6 553.0 C990.3 553.3 995.7 555.4 998.4 557.5 C1001.1 559.6 1001.1 564.5 1003.8 565.6 C1006.5 566.6 1011.7 565.1 1014.6 563.8 C1017.4 562.4 1020.3 560.0 1020.9 557.5 C1021.5 554.9 1018.3 551.5 1018.2 548.5 C1018.0 545.5 1019.7 541.0 1020.0 539.5" fill="none" stroke="#a2a2a4" stroke-width="2.7" stroke-linejoin="round" stroke-linecap="round" />
<path d="M949.7 579.1 C948.5 577.9 944.6 574.3 942.5 571.9 C940.4 569.5 938.2 568.0 937.1 564.7 C936.1 561.4 935.3 555.1 936.2 552.1 C937.1 549.1 940.6 548.2 942.5 546.7 C944.5 545.2 947.6 545.2 947.9 543.1 C948.2 541.0 946.1 536.8 944.3 534.1 C942.5 531.4 938.0 529.5 937.1 526.8 C936.2 524.1 938.9 520.5 938.9 517.8 C938.9 515.1 935.9 512.7 937.1 510.6 C938.3 508.5 942.8 506.3 946.1 505.2 C949.4 504.2 954.8 503.4 956.9 504.3 C959.0 505.2 957.5 509.1 958.7 510.6 C959.9 512.1 962.0 514.5 964.1 513.3 C966.2 512.1 969.2 505.1 971.4 503.4 C973.5 501.8 974.7 502.5 976.8 503.4 C978.9 504.3 982.2 506.7 984.0 508.8 C985.8 510.9 985.6 514.4 987.6 516.0 C989.5 517.7 993.6 518.9 995.7 518.7 C997.8 518.6 999.9 516.3 1000.2 515.1 C1000.5 513.9 998.7 511.8 997.5 511.5 C996.3 511.2 993.7 513.0 993.0 513.3" fill="none" stroke="#a2a2a4" stroke-width="2.7" stroke-linejoin="round" stroke-linecap="round" />
<path d="M911.0 489.0 C910.8 490.2 909.0 494.6 910.1 496.2 C911.1 497.9 914.9 499.2 917.3 498.9 C919.7 498.6 922.7 496.1 924.5 494.4 C926.3 492.8 926.3 490.2 928.1 489.0 C929.9 487.8 932.9 487.4 935.3 487.2 C937.7 487.1 941.3 488.0 942.5 488.1" fill="none" stroke="#a2a2a4" stroke-width="2.7" stroke-linejoin="round" stroke-linecap="round" />
<path d="M852.4 487.2 C853.0 488.4 853.6 492.5 856.0 494.4 C858.4 496.4 865.0 498.2 866.8 498.9" fill="none" stroke="#a2a2a4" stroke-width="2.7" stroke-linejoin="round" stroke-linecap="round" />
<path d="M1243.2 300.0 C1243.1 301.5 1243.4 307.1 1242.3 309.0 C1241.3 311.0 1239.9 311.1 1236.9 311.7 C1233.9 312.3 1227.9 311.0 1224.3 312.6 C1220.7 314.3 1218.2 318.5 1215.3 321.6 C1212.5 324.8 1208.4 328.1 1207.2 331.5 C1206.0 335.0 1208.6 339.5 1208.1 342.3 C1207.7 345.2 1205.7 347.4 1204.5 348.6 C1203.3 349.8 1201.5 349.4 1200.9 349.5" fill="none" stroke="#a2a2a4" stroke-width="2.7" stroke-linejoin="round" stroke-linecap="round" />
<path d="M1084.9 350.3 C1082.8 352.1 1076.2 357.2 1072.3 361.1 C1068.3 365.0 1064.4 369.2 1061.4 373.7 C1058.4 378.2 1055.7 382.7 1054.2 388.1 C1052.7 393.5 1052.4 400.1 1052.4 406.1 C1052.4 412.1 1054.2 418.1 1054.2 424.1 C1054.2 430.2 1053.9 436.2 1052.4 442.2 C1050.9 448.2 1047.6 454.2 1045.2 460.2 C1042.8 466.2 1039.5 471.6 1038.0 478.2 C1036.5 484.8 1035.7 495.2 1036.2 500.0 C1036.8 504.8 1040.2 503.8 1041.3 507.0 C1042.3 510.3 1042.6 515.1 1042.5 519.6 C1042.4 524.1 1041.5 527.4 1040.7 534.1 C1040.0 540.7 1038.5 555.1 1038.0 559.3" fill="none" stroke="#83877f" stroke-width="2.0" stroke-linejoin="round" stroke-linecap="round" />
<rect x="-3.2" y="-3.4" width="6.3" height="6.8" fill="#a08a60" transform="translate(1037.5 562.9) rotate(0)"/>
<path d="M874.1 692.6 C873.3 691.7 869.8 689.3 869.5 687.2 C869.2 685.1 870.6 682.3 872.3 680.0 C873.9 677.7 877.8 674.3 879.5 673.7 C881.1 673.1 882.5 674.7 882.2 676.4 C881.9 678.0 877.8 681.5 877.7 683.6 C877.5 685.7 879.3 689.0 881.3 689.0 C883.2 689.0 887.6 683.9 889.4 683.6 C891.2 683.3 892.5 685.6 892.1 687.2 C891.6 688.9 887.6 692.5 886.7 693.5" fill="none" stroke="#c8bfa5" stroke-width="2.4" stroke-linejoin="round" stroke-linecap="round" />
<path d="M1075.9 416.9 C1076.5 419.0 1078.0 425.3 1079.5 429.5 C1081.0 433.8 1083.7 438.3 1084.9 442.2 C1086.1 446.1 1086.4 451.2 1086.7 453.0" fill="none" stroke="rgba(190,160,120,0.8)" stroke-width="0.7" stroke-linejoin="round" stroke-linecap="round" />
<path d="M1068.6 478.2 C1069.8 475.5 1073.8 466.2 1075.9 462.0 C1078.0 457.8 1080.4 454.5 1081.3 453.0" fill="none" stroke="rgba(190,160,120,0.8)" stroke-width="0.7" stroke-linejoin="round" stroke-linecap="round" />
<path d="M1086.7 483.6 C1087.9 481.5 1091.2 474.3 1093.9 471.0 C1096.6 467.7 1101.4 465.0 1102.9 463.8" fill="none" stroke="rgba(200,170,140,0.8)" stroke-width="0.7" stroke-linejoin="round" stroke-linecap="round" />
<path d="M1078.4 416.9 C1079.0 419.0 1080.6 425.3 1082.0 429.5 C1083.4 433.8 1085.6 438.3 1086.7 442.2 C1087.7 446.1 1087.9 451.2 1088.1 453.0" fill="none" stroke="rgba(190,160,120,0.8)" stroke-width="0.7" stroke-linejoin="round" stroke-linecap="round" />
<path d="M1070.8 478.2 C1072.0 475.5 1076.0 466.2 1078.0 462.0 C1080.1 457.8 1082.2 454.5 1083.1 453.0" fill="none" stroke="rgba(190,160,120,0.8)" stroke-width="0.7" stroke-linejoin="round" stroke-linecap="round" />
<path d="M1089.2 483.6 C1090.3 481.5 1093.5 474.3 1096.0 471.0 C1098.6 467.7 1103.2 465.0 1104.7 463.8" fill="none" stroke="rgba(200,170,140,0.8)" stroke-width="0.7" stroke-linejoin="round" stroke-linecap="round" />
<path d="M1080.9 416.9 C1081.5 419.0 1083.2 425.3 1084.5 429.5 C1085.8 433.8 1087.6 438.3 1088.5 442.2 C1089.3 446.1 1089.4 451.2 1089.5 453.0" fill="none" stroke="rgba(190,160,120,0.8)" stroke-width="0.7" stroke-linejoin="round" stroke-linecap="round" />
<path d="M1073.0 478.2 C1074.2 475.5 1078.2 466.2 1080.2 462.0 C1082.2 457.8 1084.1 454.5 1084.9 453.0" fill="none" stroke="rgba(190,160,120,0.8)" stroke-width="0.7" stroke-linejoin="round" stroke-linecap="round" />
<path d="M1091.7 483.6 C1092.8 481.5 1095.7 474.3 1098.2 471.0 C1100.7 467.7 1105.1 465.0 1106.5 463.8" fill="none" stroke="rgba(200,170,140,0.8)" stroke-width="0.7" stroke-linejoin="round" stroke-linecap="round" />
<ellipse cx="1104.5" cy="474.8" rx="1.7" ry="4.3" fill="#8a807a" transform="rotate(32 1104.5 474.8)"/>
<ellipse cx="1103.6" cy="475.4" rx="3.3" ry="3.8" fill="#857b74" transform="rotate(22 1103.6 475.4)"/>
<ellipse cx="1107.0" cy="482.5" rx="2.3" ry="2.1" fill="#7a716b" transform="rotate(38 1107.0 482.5)"/>
<ellipse cx="1104.0" cy="475.1" rx="2.9" ry="3.3" fill="#857b74" transform="rotate(23 1104.0 475.1)"/>
<ellipse cx="1101.4" cy="482.8" rx="3.2" ry="2.2" fill="#857b75" transform="rotate(19 1101.4 482.8)"/>
<ellipse cx="1102.2" cy="480.3" rx="1.6" ry="4.3" fill="#7a716b" transform="rotate(-36 1102.2 480.3)"/>
<ellipse cx="1103.9" cy="479.7" rx="2.7" ry="2.1" fill="#857b74" transform="rotate(-16 1103.9 479.7)"/>
<rect x="-5.7" y="-5.3" width="11.5" height="10.6" fill="#5e4a3a" transform="translate(1079.7 374.5) rotate(40)"/>
<rect x="-4.5" y="-3.7" width="9.0" height="7.4" fill="none" stroke="#5e4a3a" stroke-width="0.6" transform="translate(1103.1 362.2) rotate(30)"/>
<path d="M1077.7 402.7 C1078.2 402.2 1079.4 400.1 1081.0 399.4 C1082.5 398.8 1084.8 398.8 1086.7 399.0 C1088.6 399.3 1090.6 400.2 1092.4 401.1 C1094.2 402.0 1096.0 404.2 1097.3 404.4 C1098.7 404.5 1100.3 403.0 1100.6 401.9 C1100.9 400.8 1099.9 399.0 1099.0 397.8 C1098.0 396.6 1095.6 395.1 1094.9 394.5" fill="none" stroke="#1e9eea" stroke-width="2.4" stroke-linejoin="round" stroke-linecap="round" />
<rect x="1107.3" y="397.7" width="1.1" height="1.1" fill="#7a5a5a"/>
<rect x="1099.5" y="412.4" width="1.1" height="1.1" fill="#8a6a5a"/>
<rect x="1114.1" y="407.1" width="1.1" height="1.1" fill="#8a6a5a"/>
<rect x="1109.4" y="403.8" width="1.1" height="1.1" fill="#8a6a5a"/>
<rect x="1111.8" y="414.2" width="1.1" height="1.1" fill="#6a5a7a"/>
<rect x="1117.5" y="416.1" width="1.1" height="1.1" fill="#7a5a5a"/>
<rect x="1101.1" y="410.5" width="1.1" height="1.1" fill="#8a6a5a"/>
<rect x="1105.7" y="418.5" width="1.1" height="1.1" fill="#8a6a5a"/>
<rect x="1114.0" y="394.5" width="1.1" height="1.1" fill="#6a5a7a"/>
<rect x="1107.2" y="399.6" width="1.1" height="1.1" fill="#7a5a5a"/>
<rect x="1107.8" y="402.2" width="1.1" height="1.1" fill="#8a6a5a"/>
<rect x="1099.3" y="406.6" width="1.1" height="1.1" fill="#7a5a5a"/>
<rect x="1112.2" y="419.3" width="1.1" height="1.1" fill="#6a5a7a"/>
<rect x="1100.5" y="418.7" width="1.1" height="1.1" fill="#8a6a5a"/>
<rect x="1101.3" y="414.2" width="1.1" height="1.1" fill="#8a6a5a"/>
<rect x="1120.1" y="397.0" width="1.1" height="1.1" fill="#8a6a5a"/>
<rect x="1113.6" y="393.1" width="1.1" height="1.1" fill="#7a5a5a"/>
<rect x="1101.5" y="411.2" width="1.1" height="1.1" fill="#6a5a7a"/>
<rect x="1110.2" y="397.7" width="1.1" height="1.1" fill="#7a5a5a"/>
<rect x="1113.1" y="404.4" width="1.1" height="1.1" fill="#8a6a5a"/>
<rect x="1107.3" y="413.4" width="1.1" height="1.1" fill="#6a5a7a"/>
<rect x="1120.5" y="405.4" width="1.1" height="1.1" fill="#7a5a5a"/>
<rect x="1100.5" y="416.2" width="1.1" height="1.1" fill="#8a6a5a"/>
<rect x="1116.5" y="396.3" width="1.1" height="1.1" fill="#6a5a7a"/>
<rect x="1104.6" y="419.8" width="1.1" height="1.1" fill="#6a5a7a"/>
<rect x="1111.1" y="413.6" width="1.1" height="1.1" fill="#7a5a5a"/>
<rect x="1118.1" y="395.3" width="1.1" height="1.1" fill="#6a5a7a"/>
<rect x="1104.4" y="408.4" width="1.1" height="1.1" fill="#7a5a5a"/>
<rect x="1105.6" y="402.6" width="1.1" height="1.1" fill="#6a5a7a"/>
<rect x="1117.5" y="403.2" width="1.1" height="1.1" fill="#6a5a7a"/>
<rect x="1117.3" y="407.0" width="1.1" height="1.1" fill="#7a5a5a"/>
<rect x="1118.9" y="417.9" width="1.1" height="1.1" fill="#8a6a5a"/>
<rect x="1118.4" y="413.6" width="1.1" height="1.1" fill="#7a5a5a"/>
<rect x="1105.0" y="410.3" width="1.1" height="1.1" fill="#8a6a5a"/>
<rect x="1115.0" y="395.0" width="1.1" height="1.1" fill="#8a6a5a"/>
<rect x="1115.0" y="398.2" width="1.1" height="1.1" fill="#8a6a5a"/>
<rect x="1113.9" y="399.0" width="1.1" height="1.1" fill="#6a5a7a"/>
<rect x="1108.1" y="418.9" width="1.1" height="1.1" fill="#6a5a7a"/>
<rect x="1107.7" y="417.4" width="1.1" height="1.1" fill="#7a5a5a"/>
<rect x="1109.7" y="417.4" width="1.1" height="1.1" fill="#6a5a7a"/>
<rect x="1116.7" y="407.0" width="1.1" height="1.1" fill="#6a5a7a"/>
<rect x="1107.9" y="400.2" width="1.1" height="1.1" fill="#8a6a5a"/>
<rect x="1117.6" y="396.5" width="1.1" height="1.1" fill="#6a5a7a"/>
<rect x="1114.0" y="408.9" width="1.1" height="1.1" fill="#8a6a5a"/>
<rect x="1113.7" y="404.4" width="1.1" height="1.1" fill="#6a5a7a"/>
<rect x="1104.6" y="415.8" width="1.1" height="1.1" fill="#8a6a5a"/>
<rect x="1113.7" y="414.1" width="1.1" height="1.1" fill="#6a5a7a"/>
<rect x="1113.5" y="412.8" width="1.1" height="1.1" fill="#8a6a5a"/>
<rect x="1103.0" y="416.1" width="1.1" height="1.1" fill="#6a5a7a"/>
<rect x="1113.5" y="392.2" width="1.1" height="1.1" fill="#8a6a5a"/>
<rect x="1105.0" y="410.8" width="1.1" height="1.1" fill="#8a6a5a"/>
<rect x="1121.7" y="406.3" width="1.1" height="1.1" fill="#6a5a7a"/>
<rect x="1120.3" y="399.4" width="1.1" height="1.1" fill="#8a6a5a"/>
<rect x="1107.6" y="407.7" width="1.1" height="1.1" fill="#8a6a5a"/>
<rect x="1112.6" y="409.7" width="1.1" height="1.1" fill="#8a6a5a"/>
<rect x="1116.2" y="397.7" width="1.1" height="1.1" fill="#7a5a5a"/>
<rect x="1121.9" y="414.6" width="1.1" height="1.1" fill="#7a5a5a"/>
<rect x="1111.6" y="418.9" width="1.1" height="1.1" fill="#6a5a7a"/>
<rect x="1104.7" y="419.2" width="1.1" height="1.1" fill="#8a6a5a"/>
<rect x="1120.6" y="408.5" width="1.1" height="1.1" fill="#6a5a7a"/>
<rect x="1046.4" y="394.9" width="1.1" height="1.1" fill="#9a7a6a"/>
<rect x="1053.1" y="398.8" width="1.1" height="1.1" fill="#9a7a6a"/>
<rect x="1050.8" y="436.3" width="1.1" height="1.1" fill="#9a7a6a"/>
<rect x="1068.4" y="426.6" width="1.1" height="1.1" fill="#9a7a6a"/>
<rect x="1053.7" y="440.4" width="1.1" height="1.1" fill="#8a6a5a"/>
<rect x="1051.8" y="400.7" width="1.1" height="1.1" fill="#9a7a6a"/>
<rect x="1058.8" y="437.0" width="1.1" height="1.1" fill="#9a7a6a"/>
<rect x="1046.0" y="438.2" width="1.1" height="1.1" fill="#9a7a6a"/>
<rect x="1058.8" y="422.9" width="1.1" height="1.1" fill="#9a7a6a"/>
<rect x="1061.8" y="441.8" width="1.1" height="1.1" fill="#6a5a7a"/>
<rect x="1047.8" y="414.1" width="1.1" height="1.1" fill="#8a6a5a"/>
<rect x="1043.8" y="432.0" width="1.1" height="1.1" fill="#8a6a5a"/>
<rect x="1051.0" y="428.7" width="1.1" height="1.1" fill="#6a5a7a"/>
<rect x="1062.3" y="404.3" width="1.1" height="1.1" fill="#8a6a5a"/>
<rect x="1059.1" y="411.7" width="1.1" height="1.1" fill="#8a6a5a"/>
<rect x="1044.5" y="438.6" width="1.1" height="1.1" fill="#9a7a6a"/>
<rect x="1041.2" y="407.8" width="1.1" height="1.1" fill="#8a6a5a"/>
<rect x="1058.2" y="405.2" width="1.1" height="1.1" fill="#9a7a6a"/>
<rect x="1041.9" y="430.9" width="1.1" height="1.1" fill="#8a6a5a"/>
<rect x="1066.4" y="395.9" width="1.1" height="1.1" fill="#8a6a5a"/>
<rect x="1048.9" y="424.6" width="1.1" height="1.1" fill="#8a6a5a"/>
<rect x="1058.3" y="400.2" width="1.1" height="1.1" fill="#6a5a7a"/>
<rect x="1045.7" y="408.4" width="1.1" height="1.1" fill="#6a5a7a"/>
<rect x="1042.7" y="425.7" width="1.1" height="1.1" fill="#6a5a7a"/>
<rect x="1044.1" y="396.9" width="1.1" height="1.1" fill="#6a5a7a"/>
<rect x="1042.8" y="430.0" width="1.1" height="1.1" fill="#6a5a7a"/>
<rect x="1052.4" y="408.5" width="1.1" height="1.1" fill="#6a5a7a"/>
<rect x="1047.6" y="422.0" width="1.1" height="1.1" fill="#6a5a7a"/>
<rect x="1045.3" y="430.8" width="1.1" height="1.1" fill="#9a7a6a"/>
<rect x="1066.5" y="412.8" width="1.1" height="1.1" fill="#9a7a6a"/>
<rect x="1045.9" y="395.5" width="1.1" height="1.1" fill="#9a7a6a"/>
<rect x="1061.1" y="417.4" width="1.1" height="1.1" fill="#8a6a5a"/>
<rect x="1047.6" y="438.4" width="1.1" height="1.1" fill="#8a6a5a"/>
<rect x="1065.6" y="442.3" width="1.1" height="1.1" fill="#6a5a7a"/>
<rect x="1054.5" y="431.8" width="1.1" height="1.1" fill="#8a6a5a"/>
<rect x="1068.7" y="398.2" width="1.1" height="1.1" fill="#8a6a5a"/>
<rect x="1065.4" y="409.5" width="1.1" height="1.1" fill="#9a7a6a"/>
<rect x="1059.3" y="420.7" width="1.1" height="1.1" fill="#8a6a5a"/>
<rect x="1049.8" y="398.1" width="1.1" height="1.1" fill="#8a6a5a"/>
<rect x="1068.9" y="432.7" width="1.1" height="1.1" fill="#9a7a6a"/>
<rect x="1049.5" y="415.8" width="1.1" height="1.1" fill="#8a6a5a"/>
<rect x="1041.3" y="398.3" width="1.1" height="1.1" fill="#6a5a7a"/>
<rect x="1050.4" y="407.4" width="1.1" height="1.1" fill="#9a7a6a"/>
<rect x="1066.4" y="441.2" width="1.1" height="1.1" fill="#9a7a6a"/>
<rect x="1066.7" y="422.1" width="1.1" height="1.1" fill="#6a5a7a"/>
<rect x="1044.9" y="425.5" width="1.1" height="1.1" fill="#9a7a6a"/>
<rect x="1064.2" y="411.9" width="1.1" height="1.1" fill="#6a5a7a"/>
<rect x="1069.5" y="401.7" width="1.1" height="1.1" fill="#6a5a7a"/>
<rect x="1053.3" y="392.5" width="1.1" height="1.1" fill="#8a6a5a"/>
<rect x="1061.2" y="398.3" width="1.1" height="1.1" fill="#6a5a7a"/>
<polyline points="1155.8,173.0 1153.1,157.7 1145.0,132.4" fill="none" stroke="#3b3338" stroke-width="1.3" stroke-linejoin="round" stroke-linecap="round" />
<polyline points="1134.1,142.7 1151.3,150.1" fill="none" stroke="#3b3338" stroke-width="1.3" stroke-linejoin="round" stroke-linecap="round" />
<polyline points="1159.4,135.1 1151.3,150.1" fill="none" stroke="#3b3338" stroke-width="1.3" stroke-linejoin="round" stroke-linecap="round" />
<polyline points="1135.9,152.3 1153.1,158.6" fill="none" stroke="#3b3338" stroke-width="1.3" stroke-linejoin="round" stroke-linecap="round" />
<polyline points="1163.0,145.0 1153.1,158.0" fill="none" stroke="#3b3338" stroke-width="1.3" stroke-linejoin="round" stroke-linecap="round" />
<polyline points="1056.0,504.3 1068.6,513.3 1092.1,531.4" fill="none" stroke="#3b3338" stroke-width="1.35" stroke-linejoin="round" stroke-linecap="round" />
<polyline points="1068.6,513.3 1086.7,510.3" fill="none" stroke="#3b3338" stroke-width="1.35" stroke-linejoin="round" stroke-linecap="round" />
<polyline points="1068.6,513.3 1070.5,532.3" fill="none" stroke="#3b3338" stroke-width="1.35" stroke-linejoin="round" stroke-linecap="round" />
<polyline points="1077.7,520.5 1094.8,516.4" fill="none" stroke="#3b3338" stroke-width="1.35" stroke-linejoin="round" stroke-linecap="round" />
<polyline points="1077.7,520.5 1078.6,537.7" fill="none" stroke="#3b3338" stroke-width="1.35" stroke-linejoin="round" stroke-linecap="round" />
<path d="M1202.6 218.0 C1201.4 217.6 1198.1 215.9 1195.4 215.3 C1192.7 214.7 1189.4 213.7 1186.4 214.4 C1183.4 215.2 1180.5 218.5 1177.4 219.8 C1174.2 221.2 1169.4 221.2 1167.5 222.5 C1165.5 223.9 1164.9 226.1 1165.7 227.9 C1166.4 229.7 1169.7 230.3 1172.0 233.3 C1174.2 236.3 1177.8 241.7 1179.2 245.9 C1180.5 250.2 1180.4 255.1 1180.1 258.6 C1179.8 262.0 1178.7 265.0 1177.4 266.7 C1176.0 268.3 1173.6 268.9 1172.0 268.5 C1170.3 268.0 1169.0 265.0 1167.5 264.0 C1166.0 262.9 1163.7 262.5 1163.0 262.2" fill="none" stroke="#0a0a0a" stroke-width="1.9" stroke-linejoin="round" stroke-linecap="round" />
<path d="M1235.9 266.7 C1234.0 267.6 1228.3 270.1 1224.2 272.1 C1220.2 274.0 1214.9 276.1 1211.6 278.4 C1208.3 280.6 1206.8 283.2 1204.4 285.6 C1202.0 288.0 1200.2 291.0 1197.2 292.8 C1194.2 294.6 1190.0 294.9 1186.4 296.4 C1182.8 297.9 1178.0 300.0 1175.6 301.8 C1173.1 303.6 1172.3 306.3 1171.6 307.2" fill="none" stroke="#0a0a0a" stroke-width="1.9" stroke-linejoin="round" stroke-linecap="round" />
<path d="M1176.6 298.2 C1176.0 300.0 1175.1 305.7 1173.0 309.0 C1170.9 312.3 1165.6 315.3 1164.0 318.0 C1162.3 320.7 1162.4 322.8 1163.1 325.2 C1163.8 327.6 1167.7 329.6 1168.1 332.4 C1168.6 335.3 1166.2 340.7 1165.8 342.3" fill="none" stroke="#0a0a0a" stroke-width="1.9" stroke-linejoin="round" stroke-linecap="round" />
<polygon points="1017.4,194.6 1046.2,182.1 1058.3,208.7 1043.9,215.2 1049.1,229 1023.6,241.1 1011.1,213.6 1022.3,208" fill="none" stroke="#0a0a0a" stroke-width="1.7" stroke-linejoin="round"/>
<path d="M899.3 371.0 C900.5 371.4 903.5 372.5 906.5 373.7 C909.5 374.9 914.0 378.2 917.3 378.2 C920.6 378.2 923.3 374.3 926.3 373.7 C929.3 373.1 932.6 373.4 935.3 374.6 C938.0 375.8 940.4 378.9 942.5 380.9 C944.6 382.9 945.5 385.1 947.9 386.3 C950.3 387.5 954.2 387.9 956.9 388.1 C959.6 388.3 962.9 387.8 964.1 387.7" fill="none" stroke="#0a0a0a" stroke-width="1.9" stroke-linejoin="round" stroke-linecap="round" />
<path d="M1080.4 411.5 C1081.4 413.3 1085.3 418.7 1086.7 422.3 C1088.0 425.9 1088.2 429.8 1088.5 433.2 C1088.8 436.5 1087.9 438.9 1088.5 442.2 C1089.1 445.5 1091.5 448.8 1092.1 453.0 C1092.7 457.2 1092.7 463.8 1092.1 467.4 C1091.5 471.0 1090.3 473.2 1088.5 474.6 C1086.7 475.9 1083.2 476.7 1081.3 475.5 C1079.3 474.3 1077.1 470.5 1076.8 467.4 C1076.5 464.2 1078.9 459.6 1079.5 456.6 C1080.1 453.6 1081.0 450.9 1080.4 449.4 C1079.8 447.9 1078.1 447.0 1075.9 447.6 C1073.6 448.2 1069.5 450.9 1066.8 453.0 C1064.1 455.1 1061.7 457.2 1059.6 460.2 C1057.5 463.2 1055.7 467.7 1054.2 471.0 C1052.7 474.3 1052.1 477.9 1050.6 480.0 C1049.1 482.1 1046.0 482.1 1045.2 483.6 C1044.5 485.1 1044.6 487.8 1046.1 489.0 C1047.6 490.2 1051.7 489.6 1054.2 490.8 C1056.8 492.0 1060.2 494.9 1061.4 496.2 C1062.7 497.6 1061.7 498.5 1061.8 498.9" fill="none" stroke="#0a0a0a" stroke-width="1.9" stroke-linejoin="round" stroke-linecap="round" />
<path d="M1065.0 436.8 C1064.4 438.0 1062.0 441.3 1061.4 444.0 C1060.8 446.7 1061.4 451.5 1061.4 453.0" fill="none" stroke="#0a0a0a" stroke-width="1.9" stroke-linejoin="round" stroke-linecap="round" />
<path d="M1006.5 532.3 C1007.5 532.9 1010.5 534.8 1012.8 535.9 C1015.0 536.9 1017.3 538.3 1020.0 538.6 C1022.7 538.9 1026.5 537.8 1029.0 537.7 C1031.6 537.5 1034.1 538.9 1035.3 537.7 C1036.5 536.5 1036.7 533.2 1036.2 530.5 C1035.8 527.7 1032.6 524.4 1032.6 521.4 C1032.6 518.4 1033.8 514.5 1036.2 512.4 C1038.6 510.3 1043.7 510.2 1047.0 508.8 C1050.3 507.5 1053.8 506.3 1056.0 504.3 C1058.3 502.4 1059.8 498.3 1060.5 497.1" fill="none" stroke="#0a0a0a" stroke-width="1.9" stroke-linejoin="round" stroke-linecap="round" />
<polyline points="1102.2,354.4 1119.0,367.9" fill="none" stroke="#0a0a0a" stroke-width="1.7" stroke-linejoin="round" stroke-linecap="round" />
<polyline points="1076.9,410.1 1084.2,420.0" fill="none" stroke="#0a0a0a" stroke-width="1.7" stroke-linejoin="round" stroke-linecap="round" />
<path d="M941.1 830.7 C939.9 833.8 936.1 841.9 933.7 849.1 C931.4 856.3 928.1 867.6 927.0 873.7 C925.9 879.9 925.5 881.9 927.0 886.0 C928.5 890.1 932.6 894.2 936.2 898.3 C939.8 902.4 944.8 907.2 948.5 910.6 C952.2 914.0 952.6 916.9 958.3 918.6 C964.0 920.3 977.8 919.3 982.9 921.0 C988.0 922.7 988.0 927.7 989.0 929.0" fill="none" stroke="#0a0a0a" stroke-width="1.8" stroke-linejoin="round" stroke-linecap="round" />
<path d="M979.8 855.3 C980.7 852.8 983.6 845.6 985.3 840.5 C987.0 835.4 989.0 831.4 990.2 824.6 C991.4 817.9 991.9 806.4 992.3 800.0 C992.6 793.6 992.0 789.2 992.3 786.0 C992.6 782.8 993.1 782.1 994.0 781.0 C994.9 779.9 995.2 779.6 997.9 779.5 C1000.6 779.4 1007.1 779.0 1010.4 780.2 C1013.6 781.4 1014.6 784.8 1017.4 786.5 C1020.2 788.2 1024.5 787.9 1027.1 790.7 C1029.6 793.5 1029.7 801.0 1032.7 803.2 C1035.7 805.4 1041.1 803.8 1045.0 803.9 C1048.9 804.0 1054.2 803.6 1056.0 803.6" fill="none" stroke="#0a0a0a" stroke-width="1.8" stroke-linejoin="round" stroke-linecap="round" />
<path d="M995.1 860.2 C996.6 859.2 1001.1 855.6 1004.0 854.0 C1006.9 852.4 1009.7 850.2 1012.3 850.4 C1014.9 850.6 1015.0 854.5 1019.7 855.3 C1024.4 856.1 1036.9 854.5 1040.6 855.3 C1044.3 856.1 1038.6 859.2 1041.8 860.2 C1045.0 861.2 1054.6 861.0 1060.0 861.0 C1065.4 861.0 1070.8 861.4 1074.4 860.2 C1078.0 859.1 1080.5 858.0 1081.8 854.1 C1083.1 850.2 1082.0 840.4 1082.4 836.9 C1082.8 833.4 1078.2 833.9 1084.2 833.2 C1090.2 832.5 1112.9 832.7 1118.6 832.6" fill="none" stroke="#0a0a0a" stroke-width="1.8" stroke-linejoin="round" stroke-linecap="round" />
<path d="M1034.4 937.6 C1036.1 937.8 1041.3 939.0 1044.3 938.8 C1047.3 938.6 1047.9 938.6 1052.3 936.4 C1056.7 934.1 1064.2 926.3 1070.7 925.3 C1077.2 924.3 1084.4 928.6 1091.6 930.2 C1098.8 931.8 1108.4 932.0 1113.7 935.1 C1119.0 938.2 1121.9 946.7 1123.5 949.0" fill="none" stroke="#0a0a0a" stroke-width="1.6" stroke-linejoin="round" stroke-linecap="round" />
<path d="M1056.0 803.6 C1056.7 802.5 1060.7 798.8 1060.0 797.0 C1059.3 795.2 1053.7 794.8 1052.0 793.0 C1050.3 791.2 1049.3 788.3 1050.0 786.0 C1050.7 783.7 1053.8 780.0 1056.0 779.0 C1058.2 778.0 1061.7 778.2 1063.0 780.0 C1064.3 781.8 1062.5 787.8 1064.0 790.0 C1065.5 792.2 1069.7 793.3 1072.0 793.0 C1074.3 792.7 1076.0 788.5 1078.0 788.0 C1080.0 787.5 1083.2 788.2 1084.0 790.0 C1084.8 791.8 1081.7 797.2 1083.0 799.0 C1084.3 800.8 1089.2 800.8 1092.0 801.0 C1094.8 801.2 1098.5 798.8 1100.0 800.0 C1101.5 801.2 1102.3 806.3 1101.0 808.0 C1099.7 809.7 1094.8 810.0 1092.0 810.0 C1089.2 810.0 1086.3 807.7 1084.0 808.0 C1081.7 808.3 1078.7 810.0 1078.0 812.0 C1077.3 814.0 1078.3 818.3 1080.0 820.0 C1081.7 821.7 1085.0 822.2 1088.0 822.0 C1091.0 821.8 1095.3 819.0 1098.0 819.0 C1100.7 819.0 1103.2 820.2 1104.0 822.0 C1104.8 823.8 1104.3 828.3 1103.0 830.0 C1101.7 831.7 1098.2 832.2 1096.0 832.0 C1093.8 831.8 1092.0 828.8 1090.0 829.0 C1088.0 829.2 1085.0 832.3 1084.0 833.0" fill="none" stroke="#4a5168" stroke-width="3.2" stroke-linejoin="round" stroke-linecap="round" />
<path d="M1056.0 803.6 C1056.7 802.5 1060.7 798.8 1060.0 797.0 C1059.3 795.2 1053.7 794.8 1052.0 793.0 C1050.3 791.2 1049.3 788.3 1050.0 786.0 C1050.7 783.7 1053.8 780.0 1056.0 779.0 C1058.2 778.0 1061.7 778.2 1063.0 780.0 C1064.3 781.8 1062.5 787.8 1064.0 790.0 C1065.5 792.2 1069.7 793.3 1072.0 793.0 C1074.3 792.7 1076.0 788.5 1078.0 788.0 C1080.0 787.5 1083.2 788.2 1084.0 790.0 C1084.8 791.8 1081.7 797.2 1083.0 799.0 C1084.3 800.8 1089.2 800.8 1092.0 801.0 C1094.8 801.2 1098.5 798.8 1100.0 800.0 C1101.5 801.2 1102.3 806.3 1101.0 808.0 C1099.7 809.7 1094.8 810.0 1092.0 810.0 C1089.2 810.0 1086.3 807.7 1084.0 808.0 C1081.7 808.3 1078.7 810.0 1078.0 812.0 C1077.3 814.0 1078.3 818.3 1080.0 820.0 C1081.7 821.7 1085.0 822.2 1088.0 822.0 C1091.0 821.8 1095.3 819.0 1098.0 819.0 C1100.7 819.0 1103.2 820.2 1104.0 822.0 C1104.8 823.8 1104.3 828.3 1103.0 830.0 C1101.7 831.7 1098.2 832.2 1096.0 832.0 C1093.8 831.8 1092.0 828.8 1090.0 829.0 C1088.0 829.2 1085.0 832.3 1084.0 833.0" fill="none" stroke="#0a0a0a" stroke-width="1.7" stroke-linejoin="round" stroke-linecap="round" />
<path d="M1103.0 830.0 C1104.2 829.0 1107.5 824.7 1110.0 824.0 C1112.5 823.3 1116.8 824.3 1118.0 826.0 C1119.2 827.7 1116.0 832.3 1117.0 834.0 C1118.0 835.7 1121.8 836.7 1124.0 836.0 C1126.2 835.3 1129.3 832.3 1130.0 830.0 C1130.7 827.7 1127.0 823.8 1128.0 822.0 C1129.0 820.2 1133.3 819.0 1136.0 819.0 C1138.7 819.0 1142.3 820.2 1144.0 822.0 C1145.7 823.8 1146.7 827.7 1146.0 830.0 C1145.3 832.3 1142.0 835.5 1140.0 836.0 C1138.0 836.5 1137.6 833.6 1134.0 833.0 C1130.4 832.4 1121.2 832.7 1118.6 832.6" fill="none" stroke="#4a5168" stroke-width="3.2" stroke-linejoin="round" stroke-linecap="round" />
<path d="M1103.0 830.0 C1104.2 829.0 1107.5 824.7 1110.0 824.0 C1112.5 823.3 1116.8 824.3 1118.0 826.0 C1119.2 827.7 1116.0 832.3 1117.0 834.0 C1118.0 835.7 1121.8 836.7 1124.0 836.0 C1126.2 835.3 1129.3 832.3 1130.0 830.0 C1130.7 827.7 1127.0 823.8 1128.0 822.0 C1129.0 820.2 1133.3 819.0 1136.0 819.0 C1138.7 819.0 1142.3 820.2 1144.0 822.0 C1145.7 823.8 1146.7 827.7 1146.0 830.0 C1145.3 832.3 1142.0 835.5 1140.0 836.0 C1138.0 836.5 1137.6 833.6 1134.0 833.0 C1130.4 832.4 1121.2 832.7 1118.6 832.6" fill="none" stroke="#0a0a0a" stroke-width="1.7" stroke-linejoin="round" stroke-linecap="round" />
<path d="M1056.0 803.6 C1054.7 804.3 1049.7 805.9 1048.0 808.0 C1046.3 810.1 1045.3 813.7 1046.0 816.0 C1046.7 818.3 1049.7 821.7 1052.0 822.0 C1054.3 822.3 1058.0 820.0 1060.0 818.0 C1062.0 816.0 1062.0 811.0 1064.0 810.0 C1066.0 809.0 1071.0 810.0 1072.0 812.0 C1073.0 814.0 1071.3 819.3 1070.0 822.0 C1068.7 824.7 1064.7 825.7 1064.0 828.0 C1063.3 830.3 1064.2 834.3 1066.0 836.0 C1067.8 837.7 1072.3 837.9 1075.0 838.0 C1077.7 838.1 1081.2 837.1 1082.4 836.9" fill="none" stroke="#4a5168" stroke-width="3.2" stroke-linejoin="round" stroke-linecap="round" />
<path d="M1056.0 803.6 C1054.7 804.3 1049.7 805.9 1048.0 808.0 C1046.3 810.1 1045.3 813.7 1046.0 816.0 C1046.7 818.3 1049.7 821.7 1052.0 822.0 C1054.3 822.3 1058.0 820.0 1060.0 818.0 C1062.0 816.0 1062.0 811.0 1064.0 810.0 C1066.0 809.0 1071.0 810.0 1072.0 812.0 C1073.0 814.0 1071.3 819.3 1070.0 822.0 C1068.7 824.7 1064.7 825.7 1064.0 828.0 C1063.3 830.3 1064.2 834.3 1066.0 836.0 C1067.8 837.7 1072.3 837.9 1075.0 838.0 C1077.7 838.1 1081.2 837.1 1082.4 836.9" fill="none" stroke="#0a0a0a" stroke-width="1.7" stroke-linejoin="round" stroke-linecap="round" />
<path d="M1005.0 233.0 C1006.8 232.1 1010.6 230.1 1015.7 227.7 C1020.8 225.3 1032.0 220.2 1035.4 218.5 C1038.9 216.8 1036.8 218.5 1036.4 217.2 C1036.0 215.9 1033.7 212.3 1032.8 210.6 C1031.9 208.8 1031.0 207.8 1030.8 206.7 C1030.6 205.6 1031.0 204.8 1031.5 204.1 C1032.0 203.4 1030.6 203.9 1034.1 202.4 C1037.6 200.9 1048.2 196.6 1052.4 194.9 C1056.6 193.2 1057.2 192.8 1059.0 192.3 C1060.8 191.8 1060.7 191.6 1062.9 192.0 C1065.1 192.4 1069.2 194.3 1072.1 194.6 C1074.9 194.9 1077.5 194.3 1080.0 194.0 C1082.5 193.7 1083.7 193.7 1087.3 192.8 C1090.9 191.8 1097.2 189.6 1101.7 188.3 C1106.2 186.9 1111.0 185.4 1114.3 184.7 C1117.6 183.9 1119.1 184.5 1121.5 183.8 C1123.9 183.0 1126.6 180.6 1128.7 180.2 C1130.8 179.7 1132.3 180.9 1134.1 181.1 C1135.9 181.2 1137.1 181.8 1139.5 181.1 C1142.0 180.3 1145.0 177.9 1148.6 176.6 C1152.2 175.2 1157.6 173.1 1161.2 173.0 C1164.8 172.8 1167.5 175.2 1170.2 175.7 C1172.9 176.1 1175.1 176.6 1177.4 175.7 C1179.6 174.8 1182.0 172.4 1183.7 170.3 C1185.3 168.2 1185.6 164.9 1187.3 163.1 C1188.9 161.3 1190.5 160.1 1193.6 159.5 C1196.8 158.9 1202.6 159.8 1206.2 159.5 C1209.8 159.2 1212.5 158.0 1215.2 157.7 C1217.9 157.4 1220.0 156.6 1222.4 157.7 C1224.8 158.7 1227.4 161.6 1229.6 164.0 C1231.9 166.4 1234.4 169.2 1235.9 172.1 C1237.4 174.9 1237.9 177.5 1238.6 181.1 C1239.4 184.7 1240.8 190.4 1240.5 193.7 C1240.2 197.0 1238.3 198.8 1236.8 200.9 C1235.3 203.0 1233.2 203.9 1231.4 206.3 C1229.6 208.7 1228.1 213.2 1226.0 215.3 C1223.9 217.4 1222.7 218.5 1218.8 218.9 C1214.9 219.4 1206.2 217.1 1202.6 218.0 C1199.0 218.9 1198.4 221.8 1197.2 224.3 C1196.0 226.9 1195.4 230.3 1195.4 233.3 C1195.4 236.3 1196.0 240.1 1197.2 242.3 C1198.4 244.6 1200.5 246.2 1202.6 246.8 C1204.7 247.4 1207.7 247.1 1209.8 245.9 C1211.9 244.7 1212.8 240.8 1215.2 239.6 C1217.6 238.4 1221.5 239.2 1224.2 238.7 C1226.9 238.3 1229.2 236.8 1231.4 236.9 C1233.7 237.1 1236.5 237.5 1237.7 239.6 C1238.9 241.7 1237.9 246.4 1238.6 249.5 C1239.4 252.7 1242.7 255.9 1242.3 258.6 C1241.8 261.3 1236.5 263.4 1235.9 265.8 C1235.3 268.2 1237.6 270.0 1238.6 273.0 C1239.7 276.0 1241.7 279.9 1242.3 283.8 C1242.9 287.7 1241.4 293.4 1242.3 296.4 C1243.2 299.4 1245.3 300.0 1247.7 301.8 C1250.1 303.6 1254.6 305.6 1256.7 307.2 C1258.8 308.9 1260.3 309.6 1260.3 311.7 C1260.3 313.8 1257.3 318.6 1256.7 320.0" fill="none" stroke="#ffffff" stroke-width="2.6" stroke-linejoin="round" stroke-linecap="round" />
<path d="M1014.2 228.3 C1011.8 229.7 1003.8 234.0 999.5 236.4 C995.2 238.9 990.9 241.1 988.4 243.1 C986.0 245.0 985.2 246.5 984.8 248.2 C984.3 249.9 986.2 251.5 985.5 253.4 C984.8 255.2 981.9 257.3 980.3 259.3 C978.7 261.2 976.5 262.8 975.9 265.2 C975.3 267.5 977.0 271.1 976.6 273.3 C976.3 275.5 975.5 277.1 973.7 278.4 C971.9 279.8 967.9 280.3 965.6 281.4 C963.3 282.5 960.7 284.5 959.7 285.1" fill="none" stroke="#ffffff" stroke-width="2.6" stroke-linejoin="round" stroke-linecap="round" />
<path d="M1087.3 192.8 C1087.6 195.0 1087.6 202.6 1089.1 206.3 C1090.6 210.1 1094.8 212.3 1096.3 215.3 C1097.8 218.3 1099.3 222.2 1098.1 224.3 C1096.9 226.4 1090.8 226.4 1089.1 227.9 C1087.4 229.4 1087.6 231.4 1088.2 233.3 C1088.8 235.3 1090.8 239.0 1092.7 239.6 C1094.7 240.2 1097.8 238.1 1099.9 236.9 C1102.0 235.7 1103.7 232.4 1105.3 232.4 C1107.0 232.4 1109.5 234.7 1109.8 236.9 C1110.1 239.2 1107.3 243.5 1107.1 245.9 C1107.0 248.3 1107.4 250.0 1108.9 251.4 C1110.4 252.7 1113.7 254.2 1116.1 254.1 C1118.5 253.9 1120.6 252.4 1123.3 250.5 C1126.0 248.5 1129.3 244.9 1132.3 242.3 C1135.3 239.8 1138.6 235.9 1141.4 235.1 C1144.1 234.4 1145.6 237.2 1148.6 237.8 C1151.6 238.4 1156.7 237.7 1159.4 238.7 C1162.1 239.8 1163.7 242.3 1164.8 244.1 C1165.8 245.9 1166.0 247.4 1165.7 249.5 C1165.4 251.7 1163.4 254.7 1163.0 256.8 C1162.5 258.9 1164.2 261.0 1163.0 262.2 C1161.8 263.4 1158.8 262.2 1155.8 264.0 C1152.8 265.8 1148.3 270.6 1145.0 273.0 C1141.7 275.4 1138.0 276.3 1135.9 278.4 C1133.8 280.5 1132.8 283.5 1132.3 285.6 C1131.9 287.7 1133.8 288.9 1133.2 291.0 C1132.6 293.1 1131.0 296.1 1128.7 298.2 C1126.5 300.3 1122.1 301.5 1119.7 303.6 C1117.3 305.7 1116.0 308.1 1114.3 310.8 C1112.7 313.5 1110.6 318.5 1109.8 320.0" fill="none" stroke="#ffffff" stroke-width="2.6" stroke-linejoin="round" stroke-linecap="round" />
<path d="M1249.5 300.0 C1250.2 300.9 1251.5 304.2 1253.2 305.4 C1254.8 306.6 1258.6 305.7 1259.5 307.2 C1260.4 308.7 1259.6 312.3 1258.6 314.4 C1257.5 316.5 1254.7 317.4 1253.2 319.8 C1251.7 322.2 1249.5 326.4 1249.5 328.8 C1249.5 331.2 1251.4 333.9 1253.2 334.2 C1255.0 334.5 1258.4 330.6 1260.4 330.6 C1262.3 330.6 1264.3 332.1 1264.9 334.2 C1265.5 336.3 1265.9 341.4 1264.0 343.2 C1262.0 345.0 1255.6 343.5 1253.2 345.0 C1250.8 346.5 1249.2 349.5 1249.5 352.3 C1249.8 355.0 1253.5 358.6 1255.0 361.3 C1256.5 364.0 1258.9 365.8 1258.6 368.5 C1258.3 371.2 1255.0 375.2 1253.2 377.5 C1251.4 379.7 1250.2 381.7 1247.7 382.0 C1245.3 382.3 1240.8 378.8 1238.7 379.3 C1236.6 379.7 1235.0 382.6 1235.1 384.7 C1235.3 386.8 1239.3 389.6 1239.6 391.9 C1239.9 394.1 1239.2 396.7 1236.9 398.2 C1234.7 399.7 1229.4 399.5 1226.1 400.9 C1222.8 402.3 1220.1 402.7 1217.1 406.3 C1214.1 409.9 1210.5 418.9 1208.1 422.5 C1205.7 426.1 1204.5 427.3 1202.7 427.9 C1200.9 428.5 1198.3 428.2 1197.3 426.1 C1196.2 424.0 1195.8 418.3 1196.4 415.3 C1197.0 412.3 1198.6 410.5 1200.9 408.1 C1203.2 405.7 1207.7 403.0 1209.9 400.9 C1212.2 398.8 1214.4 397.0 1214.4 395.5 C1214.4 394.0 1211.9 392.8 1209.9 391.9 C1208.0 391.0 1205.4 391.3 1202.7 390.1 C1200.0 388.9 1195.6 386.8 1193.7 384.7 C1191.7 382.6 1190.7 379.6 1191.0 377.5 C1191.3 375.4 1192.6 373.0 1195.5 372.1 C1198.3 371.2 1205.3 372.7 1208.1 372.1 C1211.0 371.5 1212.3 369.8 1212.6 368.5 C1212.9 367.1 1212.2 364.7 1209.9 364.0 C1207.7 363.2 1201.7 364.7 1199.1 364.0 C1196.5 363.2 1194.3 360.8 1194.6 359.5 C1194.9 358.1 1198.3 356.6 1200.9 355.9 C1203.5 355.1 1208.7 355.6 1209.9 355.0 C1211.1 354.4 1209.5 353.0 1208.1 352.3 C1206.8 351.5 1203.5 351.4 1201.8 350.5 C1200.2 349.5 1198.9 348.0 1198.2 346.8 C1197.4 345.6 1198.9 344.0 1197.3 343.2 C1195.6 342.5 1191.3 342.5 1188.3 342.3 C1185.3 342.2 1182.0 342.6 1179.3 342.3 C1176.6 342.0 1175.4 340.6 1172.1 340.5 C1168.8 340.5 1162.8 340.8 1159.5 341.8 C1156.2 342.9 1154.7 344.7 1152.3 346.8 C1149.8 349.0 1147.4 353.5 1145.0 355.0 C1142.6 356.5 1140.2 355.4 1137.8 355.9 C1135.4 356.3 1132.4 356.5 1130.6 357.7 C1128.8 358.9 1128.8 361.1 1127.0 363.1 C1125.2 365.0 1121.0 368.3 1119.8 369.4" fill="none" stroke="#ffffff" stroke-width="2.6" stroke-linejoin="round" stroke-linecap="round" />
<path d="M1128.8 300.0 C1127.0 301.2 1121.0 304.2 1118.0 307.2 C1115.0 310.2 1112.3 315.2 1110.8 318.0 C1109.3 320.9 1109.3 323.3 1109.0 324.3" fill="none" stroke="#ffffff" stroke-width="2.6" stroke-linejoin="round" stroke-linecap="round" />
<path d="M965.2 282.2 C963.8 283.5 958.5 287.6 956.9 289.9 C955.4 292.3 955.1 294.0 956.0 296.2 C956.9 298.5 960.4 301.0 962.3 303.4 C964.3 305.8 966.5 307.9 967.7 310.6 C968.9 313.3 969.8 316.9 969.5 319.6 C969.2 322.3 967.7 325.2 965.9 326.8 C964.1 328.5 961.1 329.1 958.7 329.5 C956.3 330.0 953.6 328.5 951.5 329.5 C949.4 330.6 948.2 334.4 946.1 335.9 C944.0 337.4 941.3 338.6 938.9 338.6 C936.5 338.6 933.8 337.4 931.7 335.9 C929.6 334.4 928.6 331.2 926.3 329.5 C924.1 327.9 920.9 326.2 918.2 325.9 C915.5 325.6 912.5 326.4 910.1 327.7 C907.7 329.1 905.3 331.5 903.8 334.1 C902.3 336.6 902.1 340.1 901.1 343.1 C900.0 346.1 898.2 349.4 897.5 352.1 C896.7 354.8 896.3 356.3 896.6 359.3 C896.9 362.3 899.4 366.8 899.3 370.1 C899.1 373.4 897.8 377.0 895.7 379.1 C893.6 381.2 888.8 380.9 886.7 382.7 C884.6 384.5 884.6 387.2 883.1 389.9 C881.6 392.6 879.2 396.2 877.7 398.9 C876.2 401.6 874.5 403.1 874.1 406.1 C873.6 409.1 874.4 413.0 875.0 416.9 C875.6 420.8 876.3 425.9 877.7 429.5 C879.0 433.2 880.7 435.9 883.1 438.6 C885.5 441.3 890.0 443.4 892.1 445.8 C894.2 448.2 895.7 450.3 895.7 453.0 C895.7 455.7 894.2 460.2 892.1 462.0 C890.0 463.8 885.8 462.6 883.1 463.8 C880.4 465.0 877.1 466.8 875.9 469.2 C874.7 471.6 875.1 475.2 875.9 478.2 C876.6 481.2 880.1 484.5 880.4 487.2 C880.7 489.9 879.3 492.3 877.7 494.4 C876.0 496.5 871.7 499.1 870.5 500.0" fill="none" stroke="#ffffff" stroke-width="2.6" stroke-linejoin="round" stroke-linecap="round" />
<path d="M964.1 388.1 C965.9 387.8 972.3 387.2 975.0 386.3 C977.7 385.4 978.3 384.7 980.4 382.7 C982.5 380.8 985.5 375.9 987.6 374.6 C989.7 373.2 990.9 373.8 993.0 374.6 C995.1 375.3 997.8 378.6 1000.2 379.1 C1002.6 379.5 1005.1 378.2 1007.4 377.3 C1009.6 376.4 1011.6 373.8 1013.7 373.7 C1015.8 373.5 1018.3 374.0 1020.0 376.4 C1021.7 378.8 1021.8 385.3 1023.6 388.1 C1025.4 391.0 1029.0 391.1 1030.8 393.5 C1032.6 395.9 1033.2 400.0 1034.4 402.5 C1035.6 405.1 1036.2 407.6 1038.0 408.8 C1039.8 410.0 1043.3 410.5 1045.2 409.7 C1047.2 409.0 1048.8 407.9 1049.7 404.3 C1050.6 400.7 1050.2 391.9 1050.6 388.1 C1051.1 384.4 1050.8 383.0 1052.4 381.8 C1054.1 380.6 1059.2 381.1 1060.5 380.9" fill="none" stroke="#ffffff" stroke-width="2.6" stroke-linejoin="round" stroke-linecap="round" />
<path d="M964.1 388.1 C964.3 389.9 965.3 395.3 965.0 398.9 C964.7 402.5 963.1 406.1 962.3 409.7 C961.6 413.3 960.2 416.9 960.5 420.5 C960.8 424.1 963.2 427.7 964.1 431.4 C965.0 435.0 966.5 438.6 965.9 442.2 C965.3 445.8 962.6 449.4 960.5 453.0 C958.4 456.6 955.4 460.2 953.3 463.8 C951.2 467.4 949.4 471.0 947.9 474.6 C946.4 478.2 944.3 482.4 944.3 485.4 C944.3 488.4 945.8 491.0 947.9 492.6 C950.0 494.3 953.3 495.2 956.9 495.3 C960.5 495.5 965.6 494.0 969.5 493.5 C973.5 493.1 976.8 492.9 980.4 492.6 C984.0 492.3 987.9 491.4 991.2 491.7 C994.5 492.0 997.2 493.0 1000.2 494.4 C1003.2 495.8 1007.7 499.1 1009.2 500.0" fill="none" stroke="#ffffff" stroke-width="2.6" stroke-linejoin="round" stroke-linecap="round" />
<path d="M879.5 480.0 C879.8 481.5 881.9 486.5 881.3 489.0 C880.7 491.6 877.8 493.5 875.9 495.3 C873.9 497.1 870.8 497.9 869.5 499.8 C868.3 501.8 867.9 504.6 868.6 507.0 C869.4 509.4 873.5 511.5 874.1 514.2 C874.7 516.9 873.8 520.2 872.3 523.2 C870.8 526.2 867.3 529.2 865.0 532.3 C862.8 535.3 859.9 538.6 858.7 541.3 C857.5 544.0 857.4 546.1 857.8 548.5 C858.3 550.9 861.4 553.3 861.4 555.7 C861.4 558.1 859.5 560.5 857.8 562.9 C856.2 565.3 853.9 568.4 851.5 570.1 C849.1 571.7 845.2 571.0 843.4 572.8 C841.6 574.6 840.7 577.1 840.7 580.9 C840.7 584.7 842.8 591.1 843.4 595.3 C844.0 599.5 844.6 602.5 844.3 606.1 C844.0 609.7 841.9 614.2 841.6 616.9 C841.3 619.6 843.1 620.2 842.5 622.3 C841.9 624.4 838.8 626.2 838.0 629.5 C837.3 632.9 837.1 638.3 838.0 642.2 C838.9 646.1 840.7 649.7 843.4 653.0 C846.1 656.3 850.6 659.3 854.2 662.0 C857.8 664.7 862.0 666.5 865.0 669.2 C868.0 671.9 870.5 674.9 872.3 678.2 C874.1 681.5 874.1 686.0 875.9 689.0 C877.7 692.0 880.7 694.4 883.1 696.2 C885.5 698.0 889.1 699.4 890.3 700.0" fill="none" stroke="#ffffff" stroke-width="2.6" stroke-linejoin="round" stroke-linecap="round" />
<path d="M842.5 622.3 C843.9 621.7 847.5 619.8 850.6 618.7 C853.8 617.7 858.1 616.9 861.4 616.0 C864.7 615.1 867.7 615.3 870.5 613.3 C873.2 611.4 875.6 606.7 877.7 604.3 C879.8 601.9 880.7 600.0 883.1 598.9 C885.5 597.9 889.1 597.9 892.1 598.0 C895.1 598.2 898.1 600.3 901.1 599.8 C904.1 599.4 907.4 597.1 910.1 595.3 C912.8 593.5 915.2 589.8 917.3 589.0 C919.4 588.3 920.9 589.5 922.7 590.8 C924.5 592.2 926.0 595.9 928.1 597.1 C930.2 598.3 932.6 599.2 935.3 598.0 C938.0 596.8 941.3 592.8 944.3 589.9 C947.3 587.1 950.3 583.5 953.3 580.9 C956.3 578.3 959.9 577.0 962.3 574.6 C964.7 572.2 966.5 569.6 967.7 566.5 C968.9 563.3 968.3 559.3 969.5 555.7 C970.8 552.1 972.6 548.0 975.0 544.9 C977.4 541.7 980.7 538.3 984.0 536.8 C987.3 535.3 991.0 536.6 994.8 535.9 C998.5 535.1 1003.8 535.3 1006.5 532.3 C1009.2 529.2 1009.9 522.0 1011.0 517.8 C1012.0 513.6 1013.4 510.3 1012.8 507.0 C1012.2 503.7 1009.8 500.4 1007.4 498.0 C1005.0 495.6 1001.7 493.7 998.4 492.6 C995.1 491.6 990.9 491.3 987.6 491.7 C984.3 492.2 981.6 495.0 978.6 495.3 C975.6 495.6 972.9 493.4 969.5 493.5 C966.2 493.7 962.0 495.9 958.7 496.2 C955.4 496.5 952.1 496.5 949.7 495.3 C947.3 494.1 944.6 491.6 944.3 489.0 C944.0 486.5 947.0 482.0 947.9 480.0 C948.8 478.0 949.4 477.7 949.7 477.3" fill="none" stroke="#ffffff" stroke-width="2.6" stroke-linejoin="round" stroke-linecap="round" />
<path d="M1109.6 320.0 C1109.2 321.2 1107.8 325.5 1107.2 327.4 C1106.5 329.3 1105.9 329.7 1105.5 331.5 C1105.1 333.2 1105.4 336.0 1104.7 338.0 C1104.0 340.1 1102.5 342.0 1101.4 343.8 C1100.3 345.5 1098.6 347.3 1098.1 348.7 C1097.7 350.0 1098.4 351.1 1099.0 351.9 C1099.5 352.8 1101.0 353.3 1101.4 353.6" fill="none" stroke="#ffffff" stroke-width="2.8" stroke-linejoin="round" stroke-linecap="round" />
<path d="M1099.0 330.6 C1098.7 331.6 1098.1 334.5 1097.3 336.4 C1096.5 338.3 1095.1 340.2 1094.1 342.1 C1093.0 344.0 1091.9 346.1 1090.8 347.8 C1089.7 349.6 1088.2 351.0 1087.5 352.8 C1086.8 354.5 1086.4 356.7 1086.7 358.5 C1087.0 360.3 1087.6 361.9 1089.1 363.4 C1090.6 364.9 1094.1 366.0 1095.7 367.5 C1097.3 369.0 1098.4 370.8 1099.0 372.4 C1099.5 374.1 1099.4 375.6 1099.0 377.3 C1098.6 379.1 1097.6 381.6 1096.5 383.1 C1095.4 384.6 1094.2 385.8 1092.4 386.3 C1090.6 386.9 1087.2 387.0 1085.9 386.3 C1084.5 385.7 1084.0 383.7 1084.2 382.2 C1084.5 380.7 1086.4 378.8 1087.5 377.3 C1088.6 375.8 1090.4 374.7 1090.8 373.2 C1091.2 371.7 1090.8 369.5 1090.0 368.3 C1089.1 367.1 1087.6 366.3 1085.9 365.9 C1084.1 365.4 1081.1 364.9 1079.3 365.5 C1077.5 366.0 1076.4 367.7 1075.2 369.1 C1074.0 370.6 1071.9 372.6 1071.9 374.1 C1071.9 375.6 1074.5 377.1 1075.2 378.1 C1075.9 379.2 1076.4 379.5 1076.0 380.6 C1075.6 381.7 1073.6 383.2 1072.8 384.7 C1071.9 386.2 1071.7 387.8 1071.1 389.6 C1070.6 391.4 1069.7 393.3 1069.5 395.3 C1069.3 397.4 1069.8 399.7 1069.9 401.9 C1070.0 404.1 1070.2 406.4 1070.3 408.5 C1070.4 410.5 1069.6 412.3 1070.3 414.2 C1071.0 416.1 1073.7 419.0 1074.4 420.0" fill="none" stroke="#ffffff" stroke-width="2.8" stroke-linejoin="round" stroke-linecap="round" />
<path d="M1101.4 354.0 C1100.7 354.6 1098.3 356.5 1097.3 357.7 C1096.4 358.8 1095.4 359.4 1095.7 361.0 C1096.0 362.5 1097.7 365.2 1099.0 366.7 C1100.2 368.2 1102.0 368.5 1103.1 370.0 C1104.2 371.5 1105.5 373.6 1105.5 375.7 C1105.5 377.7 1104.2 380.3 1103.1 382.2 C1102.0 384.2 1100.5 385.7 1099.0 387.2 C1097.5 388.7 1096.0 390.7 1094.1 391.3 C1092.1 391.8 1089.3 390.3 1087.5 390.4 C1085.7 390.6 1084.8 390.8 1083.4 392.1 C1082.0 393.3 1080.5 396.0 1079.3 397.8 C1078.1 399.6 1076.4 401.2 1076.0 402.7 C1075.6 404.2 1076.2 405.7 1076.9 406.8 C1077.5 407.9 1079.0 409.3 1080.1 409.3 C1081.2 409.3 1082.3 407.9 1083.4 406.8 C1084.5 405.7 1085.5 403.4 1086.7 402.7 C1087.9 402.0 1089.4 402.0 1090.8 402.7 C1092.1 403.4 1093.5 405.6 1094.9 406.8 C1096.2 408.0 1097.7 410.1 1099.0 410.1 C1100.2 410.1 1100.9 408.3 1102.2 406.8 C1103.6 405.3 1105.7 403.0 1107.2 401.1 C1108.7 399.2 1110.1 397.1 1111.3 395.3 C1112.4 393.6 1114.1 391.9 1114.1 390.4 C1114.1 388.9 1111.9 387.7 1111.3 386.3 C1110.6 385.0 1110.0 383.7 1110.4 382.2 C1110.8 380.7 1112.6 379.0 1113.7 377.3 C1114.8 375.7 1116.0 373.9 1117.0 372.4 C1118.0 370.9 1118.6 369.4 1119.9 368.3 C1121.1 367.2 1122.9 366.8 1124.4 365.9 C1125.8 364.9 1127.5 363.8 1128.5 362.6 C1129.4 361.4 1129.3 359.6 1130.1 358.5 C1130.9 357.4 1131.7 356.4 1133.4 356.0 C1135.0 355.7 1138.9 356.4 1140.0 356.4" fill="none" stroke="#ffffff" stroke-width="2.8" stroke-linejoin="round" stroke-linecap="round" />
<path d="M1040.0 410.1 C1040.8 410.0 1043.5 410.1 1044.9 409.3 C1046.3 408.5 1047.4 407.2 1048.2 405.2 C1049.0 403.1 1049.4 399.6 1049.8 397.0 C1050.2 394.4 1050.2 391.9 1050.6 389.6 C1051.1 387.3 1051.3 384.5 1052.3 383.1 C1053.2 381.6 1054.7 381.4 1056.4 381.0 C1058.0 380.7 1061.2 381.0 1062.1 381.0" fill="none" stroke="#ffffff" stroke-width="2.8" stroke-linejoin="round" stroke-linecap="round" />
<path d="M1067.0 378.6 C1066.8 379.2 1065.9 380.7 1065.4 382.2 C1064.8 383.8 1063.5 387.4 1063.8 388.0 C1064.0 388.5 1066.3 386.3 1067.0 385.5 C1067.8 384.7 1067.8 382.8 1068.3 383.1 C1068.7 383.3 1069.7 385.8 1069.5 387.2 C1069.3 388.5 1068.1 389.9 1067.0 391.3 C1065.9 392.6 1064.2 394.1 1062.9 395.3 C1061.7 396.6 1059.9 397.5 1059.7 398.6 C1059.4 399.7 1060.7 400.9 1061.3 401.9 C1061.8 402.9 1063.2 403.3 1062.9 404.4 C1062.7 405.4 1060.5 407.2 1059.7 408.5 C1058.8 409.7 1057.7 410.6 1058.0 411.7 C1058.3 412.8 1060.3 413.6 1061.3 415.0 C1062.2 416.4 1063.3 419.2 1063.8 420.0" fill="none" stroke="#ffffff" stroke-width="2.2" stroke-linejoin="round" stroke-linecap="round" />
<path d="M1061.4 416.9 C1062.0 419.9 1063.2 431.8 1065.0 435.0 C1066.8 438.1 1070.5 436.8 1072.3 435.9 C1074.1 435.0 1075.6 432.7 1075.9 429.5 C1076.2 426.4 1074.4 419.0 1074.1 416.9" fill="none" stroke="#ffffff" stroke-width="2.6" stroke-linejoin="round" stroke-linecap="round" />
<path d="M860.0 664.6 C861.4 665.6 866.2 668.0 868.4 670.9 C870.6 673.8 871.1 678.3 873.2 682.0 C875.3 685.7 877.3 689.6 880.9 693.2 C884.5 696.8 891.8 701.6 894.8 703.6 C897.8 705.6 898.3 705.0 899.0 705.3" fill="none" stroke="#ffffff" stroke-width="2.6" stroke-linejoin="round" stroke-linecap="round" />
<path d="M913.5 709.5 C915.7 710.0 922.8 711.5 926.9 712.7 C931.0 713.9 934.8 716.0 938.0 716.9 C941.2 717.8 943.6 716.8 946.4 718.2 C949.2 719.6 952.5 722.4 954.7 725.2 C956.9 728.0 958.7 730.8 959.6 735.0 C960.5 739.2 960.1 747.3 960.3 750.3 C960.5 753.3 958.5 752.5 961.0 753.1 C963.5 753.7 972.2 755.2 975.6 753.8 C979.0 752.4 979.6 748.1 981.2 744.7 C982.8 741.3 983.7 735.9 985.3 733.6 C986.9 731.3 988.6 730.6 990.9 730.8 C993.2 731.0 996.5 733.6 999.3 735.0 C1002.1 736.4 1004.6 738.0 1007.6 739.1 C1010.6 740.2 1013.9 741.3 1017.4 741.9 C1020.9 742.5 1026.5 740.7 1028.5 742.6 C1030.5 744.5 1030.6 750.9 1029.2 753.1 C1027.8 755.3 1022.6 755.1 1020.2 755.8 C1017.8 756.5 1015.1 756.3 1014.6 757.2 C1014.1 758.1 1017.0 760.0 1017.4 761.4 C1017.8 762.8 1016.0 764.9 1016.7 765.6 C1017.4 766.3 1020.6 766.3 1021.6 765.6 C1022.6 764.9 1021.9 761.9 1023.0 761.4 C1024.2 760.9 1027.5 760.5 1028.5 762.8 C1029.5 765.1 1029.1 770.9 1029.2 775.3 C1029.3 779.7 1028.6 784.6 1029.2 789.3 C1029.8 793.9 1032.0 799.4 1032.7 803.2 C1033.4 807.0 1033.5 809.5 1033.4 812.0 C1033.3 814.5 1033.7 816.1 1032.0 818.4 C1030.3 820.7 1027.5 821.3 1023.4 825.8 C1019.3 830.3 1012.5 839.6 1007.4 845.5 C1002.3 851.4 995.2 858.8 992.7 861.4" fill="none" stroke="#ffffff" stroke-width="2.6" stroke-linejoin="round" stroke-linecap="round" />
<path d="M959.6 754.5 C958.5 756.1 953.9 761.2 953.3 764.2 C952.7 767.2 955.5 768.4 956.1 772.6 C956.7 776.8 957.0 784.2 956.8 789.3 C956.6 794.4 955.2 799.0 954.7 803.2 C954.2 807.4 955.9 810.7 954.0 814.7 C952.1 818.7 942.8 823.5 943.5 827.0 C944.2 830.5 953.8 832.5 958.3 835.6 C962.8 838.7 967.3 842.0 970.6 845.5 C973.9 849.0 974.2 853.9 977.9 856.5 C981.6 859.1 989.8 856.5 992.7 861.4 C995.6 866.3 995.7 877.8 995.1 886.0 C994.5 894.2 990.0 903.4 989.0 910.6 C988.0 917.8 988.4 923.5 989.0 929.0 C989.6 934.5 990.5 940.2 992.7 943.7 C995.0 947.2 1000.9 949.0 1002.5 950.0" fill="none" stroke="#ffffff" stroke-width="2.6" stroke-linejoin="round" stroke-linecap="round" />
<path d="M992.7 861.4 C995.2 861.6 999.2 862.5 1007.4 862.7 C1015.6 862.9 1034.3 862.3 1041.8 862.7 C1049.3 863.1 1048.5 864.1 1052.3 865.1 C1056.1 866.1 1061.4 866.9 1064.6 868.8 C1067.8 870.6 1070.3 873.3 1071.3 876.2 C1072.3 879.1 1071.8 883.1 1070.7 886.0 C1069.6 888.9 1067.0 891.1 1064.6 893.4 C1062.1 895.6 1059.4 897.0 1056.0 899.5 C1052.6 902.0 1047.5 904.2 1044.3 908.1 C1041.1 912.0 1038.3 918.4 1036.9 922.9 C1035.5 927.4 1036.3 930.6 1035.7 935.1 C1035.1 939.6 1033.6 947.5 1033.2 950.0" fill="none" stroke="#ffffff" stroke-width="2.6" stroke-linejoin="round" stroke-linecap="round" />
<circle cx="906.2" cy="707.4" r="6.4" fill="#1e9bef" stroke="#fff" stroke-width="2.2"/><circle cx="906.2" cy="707.4" r="3" fill="#a8a060"/>
<path d="M898.6 705.9 A7.7 7.7 0 0 1 913.8 708.4" fill="none" stroke="#0a0a0a" stroke-width="1"/>
<circle cx="1087.5" cy="192.8" r="4.1" fill="#1cc01c"/>
<circle cx="1104.9" cy="331.4" r="4.1" fill="#ff0000"/>
</svg></div>
<div id="plot"><svg width="1480" height="250" viewBox="297 948 1480 250">
<defs><clipPath id="pc"><polygon points="297,1198 297.0,1060.6 303.0,1058.6 311.0,1056.4 320.0,1055.4 329.0,1054.4 338.0,1050.6 346.6,1047.6 356.0,1045.2 366.9,1043.2 375.0,1042.6 380.8,1042.5 384.6,1041.7 387.6,1043.0 392.0,1041.0 399.8,1037.4 405.0,1033.4 409.9,1029.1 415.0,1026.0 420.0,1022.3 428.0,1014.6 437.7,1005.3 441.0,1003.0 444.0,1001.8 450.0,1001.6 455.5,1001.5 462.0,995.0 469.4,987.6 473.2,986.8 480.0,987.4 487.1,988.1 500.0,989.8 513.7,991.4 516.7,992.4 526.0,999.4 536.4,1007.1 543.0,1010.4 549.1,1012.9 554.2,1019.7 559.0,1022.0 564.3,1024.3 569.0,1030.0 574.4,1036.7 576.4,1038.7 590.0,1039.0 609.8,1039.5 625.0,1039.8 637.7,1040.5 644.0,1043.6 650.3,1046.3 665.0,1047.2 680.7,1047.8 687.0,1052.2 693.4,1056.9 702.0,1060.6 711.1,1064.0 717.0,1064.6 720.0,1063.6 723.7,1064.0 730.0,1068.2 736.4,1072.1 746.0,1075.4 755.0,1078.0 762.5,1079.4 768.0,1079.6 774.3,1078.4 780.0,1079.6 796.2,1079.6 812.0,1081.0 830.0,1081.8 845.0,1081.0 857.0,1079.6 865.0,1080.6 890.0,1081.8 920.0,1081.6 950.0,1081.0 980.0,1081.6 1010.0,1081.2 1040.0,1081.6 1060.0,1081.8 1090.0,1081.0 1110.0,1080.4 1127.5,1079.0 1140.0,1079.6 1160.0,1080.6 1190.0,1081.6 1210.0,1079.6 1225.0,1080.8 1250.0,1081.4 1280.0,1081.0 1310.0,1081.6 1325.0,1082.6 1334.5,1084.0 1345.0,1081.8 1380.0,1081.2 1420.0,1081.4 1460.0,1080.8 1478.0,1080.0 1486.0,1079.4 1495.0,1080.8 1510.0,1079.6 1521.0,1078.0 1530.0,1080.0 1560.0,1079.8 1590.0,1078.6 1607.0,1077.6 1618.0,1076.6 1627.5,1073.8 1638.0,1069.4 1647.7,1064.7 1660.0,1062.6 1668.0,1063.6 1673.0,1062.7 1685.0,1059.6 1698.0,1057.0 1712.0,1051.6 1725.0,1047.2 1738.6,1042.5 1748.0,1041.6 1758.8,1038.5 1765.0,1037.2 1771.4,1037.0 1773.6,1037.8 1775.0,1039.6 1775,1198"/></clipPath><filter id="hb" x="-1%" y="0" width="102%" height="100%"><feGaussianBlur stdDeviation="0.55 0"/></filter></defs>
<g clip-path="url(#pc)"><rect x="297" y="980" width="1478" height="218" fill="#4e9bfd"/><g filter="url(#hb)">
<rect x="302.50" y="970" width="1.40" height="240" fill="#49a6a8"/>
<rect x="303.90" y="970" width="1.10" height="240" fill="#3b8ff0"/>
<rect x="305.00" y="970" width="3.70" height="240" fill="#5fbc64"/>
<rect x="309.00" y="970" width="2.00" height="240" fill="#3b8ff0"/>
<rect x="312.90" y="970" width="1.40" height="240" fill="#49a6a8"/>
<rect x="314.30" y="970" width="1.40" height="240" fill="#3b8ff0"/>
<rect x="322.20" y="970" width="2.80" height="240" fill="#5fbc64"/>
<rect x="325.00" y="970" width="1.60" height="240" fill="#3b8ff0"/>
<rect x="331.40" y="970" width="3.40" height="240" fill="#49a6a8"/>
<rect x="334.80" y="970" width="1.10" height="240" fill="#5fbc64"/>
<rect x="335.90" y="970" width="2.00" height="240" fill="#3b8ff0"/>
<rect x="337.90" y="970" width="1.70" height="240" fill="#4aa0c4"/>
<rect x="339.60" y="970" width="1.40" height="240" fill="#3b8ff0"/>
<rect x="341.00" y="970" width="3.00" height="240" fill="#5fbc64"/>
<rect x="344.00" y="970" width="2.90" height="240" fill="#70c86e"/>
<rect x="346.90" y="970" width="1.70" height="240" fill="#3b8ff0"/>
<rect x="384.50" y="970" width="2.53" height="240" fill="#5fbc64"/>
<rect x="387.03" y="970" width="2.81" height="240" fill="#49a6a8"/>
<rect x="389.84" y="970" width="1.97" height="240" fill="#c9c850"/>
<rect x="391.81" y="970" width="1.69" height="240" fill="#3b8ff0"/>
<rect x="393.50" y="970" width="2.53" height="240" fill="#5fbc64"/>
<rect x="396.03" y="970" width="1.97" height="240" fill="#70c86e"/>
<rect x="398.00" y="970" width="1.12" height="240" fill="#d9c070"/>
<rect x="399.12" y="970" width="2.81" height="240" fill="#49a6a8"/>
<rect x="401.93" y="970" width="3.09" height="240" fill="#ffd257"/>
<rect x="405.03" y="970" width="1.12" height="240" fill="#c9c850"/>
<rect x="406.15" y="970" width="1.97" height="240" fill="#ff8d33"/>
<rect x="408.12" y="970" width="0.84" height="240" fill="#8f9ba6"/>
<rect x="408.97" y="970" width="3.09" height="240" fill="#5fbc64"/>
<rect x="412.06" y="970" width="1.12" height="240" fill="#3b8ff0"/>
<rect x="413.18" y="970" width="1.69" height="240" fill="#a5c850"/>
<rect x="414.87" y="970" width="2.53" height="240" fill="#ffd257"/>
<rect x="417.40" y="970" width="1.69" height="240" fill="#ff5a2d"/>
<rect x="419.09" y="970" width="1.12" height="240" fill="#8a86b0"/>
<rect x="420.21" y="970" width="0.84" height="240" fill="#d9c070"/>
<rect x="421.06" y="970" width="0.84" height="240" fill="#ff8d33"/>
<rect x="421.90" y="970" width="3.09" height="240" fill="#ffc23f"/>
<rect x="424.99" y="970" width="1.12" height="240" fill="#c9c850"/>
<rect x="426.12" y="970" width="1.69" height="240" fill="#ff8d33"/>
<rect x="427.81" y="970" width="1.12" height="240" fill="#ff8d33"/>
<rect x="428.93" y="970" width="1.12" height="240" fill="#ffc23f"/>
<rect x="430.06" y="970" width="7.03" height="240" fill="#ffd257"/>
<rect x="437.09" y="970" width="1.69" height="240" fill="#5fbc64"/>
<rect x="438.77" y="970" width="1.12" height="240" fill="#3b8ff0"/>
<rect x="439.90" y="970" width="3.09" height="240" fill="#d9c070"/>
<rect x="442.99" y="970" width="1.12" height="240" fill="#3b8ff0"/>
<rect x="453.12" y="970" width="1.97" height="240" fill="#49a6a8"/>
<rect x="455.08" y="970" width="1.97" height="240" fill="#a5c850"/>
<rect x="457.05" y="970" width="1.69" height="240" fill="#c9c850"/>
<rect x="458.74" y="970" width="1.41" height="240" fill="#ff5a2d"/>
<rect x="460.15" y="970" width="1.12" height="240" fill="#ffc23f"/>
<rect x="461.27" y="970" width="0.84" height="240" fill="#ff8d33"/>
<rect x="462.11" y="970" width="2.81" height="240" fill="#ffd257"/>
<rect x="464.93" y="970" width="1.12" height="240" fill="#8f9ba6"/>
<rect x="466.05" y="970" width="1.97" height="240" fill="#e8826a"/>
<rect x="468.02" y="970" width="1.12" height="240" fill="#ff8d33"/>
<rect x="469.15" y="970" width="1.41" height="240" fill="#8f9ba6"/>
<rect x="470.55" y="970" width="1.97" height="240" fill="#d9c070"/>
<rect x="472.52" y="970" width="1.12" height="240" fill="#3b8ff0"/>
<rect x="477.86" y="970" width="1.41" height="240" fill="#5fbc64"/>
<rect x="479.27" y="970" width="0.73" height="240" fill="#3b8ff0"/>
<rect x="480.00" y="970" width="0.84" height="240" fill="#3b8ff0"/>
<rect x="512.06" y="970" width="1.12" height="240" fill="#49a6a8"/>
<rect x="513.18" y="970" width="1.41" height="240" fill="#3b8ff0"/>
<rect x="514.59" y="970" width="1.41" height="240" fill="#ffd257"/>
<rect x="516.00" y="970" width="1.97" height="240" fill="#ff8d33"/>
<rect x="517.96" y="970" width="3.09" height="240" fill="#49a6a8"/>
<rect x="521.06" y="970" width="0.84" height="240" fill="#c9c850"/>
<rect x="521.90" y="970" width="2.25" height="240" fill="#5fbc64"/>
<rect x="524.15" y="970" width="1.69" height="240" fill="#49a6a8"/>
<rect x="525.84" y="970" width="3.94" height="240" fill="#c9c850"/>
<rect x="529.78" y="970" width="2.25" height="240" fill="#ffd257"/>
<rect x="532.02" y="970" width="1.12" height="240" fill="#49a6a8"/>
<rect x="533.15" y="970" width="2.81" height="240" fill="#ffd257"/>
<rect x="535.96" y="970" width="2.81" height="240" fill="#3b8ff0"/>
<rect x="538.77" y="970" width="2.25" height="240" fill="#49a6a8"/>
<rect x="541.02" y="970" width="2.25" height="240" fill="#5fbc64"/>
<rect x="543.27" y="970" width="1.97" height="240" fill="#70c86e"/>
<rect x="545.24" y="970" width="1.97" height="240" fill="#ffd257"/>
<rect x="547.21" y="970" width="1.12" height="240" fill="#ffc23f"/>
<rect x="548.34" y="970" width="4.50" height="240" fill="#ff8d33"/>
<rect x="552.83" y="970" width="1.97" height="240" fill="#3b8ff0"/>
<rect x="554.80" y="970" width="1.12" height="240" fill="#c9c850"/>
<rect x="555.93" y="970" width="1.97" height="240" fill="#49a6a8"/>
<rect x="557.90" y="970" width="1.69" height="240" fill="#3b8ff0"/>
<rect x="559.58" y="970" width="1.97" height="240" fill="#c9c850"/>
<rect x="561.55" y="970" width="1.12" height="240" fill="#ffc23f"/>
<rect x="562.68" y="970" width="2.25" height="240" fill="#ffd257"/>
<rect x="564.93" y="970" width="1.12" height="240" fill="#ffc23f"/>
<rect x="566.05" y="970" width="1.69" height="240" fill="#ff8d33"/>
<rect x="567.74" y="970" width="1.69" height="240" fill="#ffc23f"/>
<rect x="569.43" y="970" width="3.37" height="240" fill="#ff5a2d"/>
<rect x="572.80" y="970" width="2.25" height="240" fill="#ff7a4b"/>
<rect x="575.05" y="970" width="1.12" height="240" fill="#c9c850"/>
<rect x="608.68" y="970" width="1.12" height="240" fill="#8f9ba6"/>
<rect x="610.93" y="970" width="1.12" height="240" fill="#8f9ba6"/>
<rect x="612.06" y="970" width="0.79" height="240" fill="#3b8ff0"/>
<rect x="631.74" y="970" width="1.69" height="240" fill="#49a6a8"/>
<rect x="633.43" y="970" width="1.12" height="240" fill="#3b8ff0"/>
<rect x="637.93" y="970" width="1.69" height="240" fill="#ffd257"/>
<rect x="639.62" y="970" width="2.25" height="240" fill="#a5c850"/>
<rect x="641.87" y="970" width="2.81" height="240" fill="#5fbc64"/>
<rect x="644.68" y="970" width="1.69" height="240" fill="#3b8ff0"/>
<rect x="646.37" y="970" width="2.81" height="240" fill="#49a6a8"/>
<rect x="669.99" y="970" width="1.12" height="240" fill="#49a6a8"/>
<rect x="671.11" y="970" width="1.69" height="240" fill="#3b8ff0"/>
<rect x="679.55" y="970" width="1.69" height="240" fill="#ffc23f"/>
<rect x="681.24" y="970" width="2.25" height="240" fill="#ff8d33"/>
<rect x="683.49" y="970" width="2.25" height="240" fill="#4aa0c4"/>
<rect x="685.74" y="970" width="3.94" height="240" fill="#ffd257"/>
<rect x="689.67" y="970" width="1.69" height="240" fill="#d9c070"/>
<rect x="691.36" y="970" width="1.12" height="240" fill="#ffd257"/>
<rect x="692.49" y="970" width="1.69" height="240" fill="#e8826a"/>
<rect x="694.17" y="970" width="3.94" height="240" fill="#ffd257"/>
<rect x="698.11" y="970" width="1.69" height="240" fill="#a5c850"/>
<rect x="699.80" y="970" width="1.46" height="240" fill="#3b8ff0"/>
<rect x="702.61" y="970" width="4.50" height="240" fill="#5fbc64"/>
<rect x="707.11" y="970" width="1.35" height="240" fill="#3b8ff0"/>
<rect x="713.86" y="970" width="1.12" height="240" fill="#d9c070"/>
<rect x="714.98" y="970" width="1.69" height="240" fill="#49a6a8"/>
<rect x="716.67" y="970" width="2.25" height="240" fill="#49a6a8"/>
<rect x="718.92" y="970" width="1.46" height="240" fill="#3b8ff0"/>
<rect x="722.29" y="970" width="1.69" height="240" fill="#e8826a"/>
<rect x="723.98" y="970" width="1.12" height="240" fill="#ffd257"/>
<rect x="725.11" y="970" width="1.12" height="240" fill="#d9c070"/>
<rect x="726.23" y="970" width="2.81" height="240" fill="#a5c850"/>
<rect x="729.04" y="970" width="1.12" height="240" fill="#3b8ff0"/>
<rect x="730.17" y="970" width="1.12" height="240" fill="#ffd257"/>
<rect x="731.29" y="970" width="1.69" height="240" fill="#49a6a8"/>
<rect x="732.98" y="970" width="1.12" height="240" fill="#ffd257"/>
<rect x="734.11" y="970" width="2.81" height="240" fill="#8a86b0"/>
<rect x="736.92" y="970" width="1.12" height="240" fill="#3b8ff0"/>
<rect x="745.92" y="970" width="2.25" height="240" fill="#49a6a8"/>
<rect x="748.17" y="970" width="1.12" height="240" fill="#3b8ff0"/>
<rect x="757.17" y="970" width="2.25" height="240" fill="#5fbc64"/>
<rect x="759.42" y="970" width="2.25" height="240" fill="#70c86e"/>
<rect x="761.66" y="970" width="1.46" height="240" fill="#3b8ff0"/>
<rect x="769.54" y="970" width="3.37" height="240" fill="#5fbc64"/>
<rect x="772.91" y="970" width="1.69" height="240" fill="#3b8ff0"/>
<rect x="774.60" y="970" width="2.25" height="240" fill="#5fbc64"/>
<rect x="776.85" y="970" width="1.35" height="240" fill="#3b8ff0"/>
<rect x="835.96" y="970" width="1.97" height="240" fill="#49a6a8"/>
<rect x="837.93" y="970" width="1.12" height="240" fill="#3b8ff0"/>
<rect x="848.05" y="970" width="1.97" height="240" fill="#5fbc64"/>
<rect x="850.02" y="970" width="1.12" height="240" fill="#3b8ff0"/>
<rect x="855.93" y="970" width="2.25" height="240" fill="#49a6a8"/>
<rect x="858.18" y="970" width="1.12" height="240" fill="#3b8ff0"/>
<rect x="886.86" y="970" width="1.69" height="240" fill="#49a6a8"/>
<rect x="889.11" y="970" width="1.69" height="240" fill="#3b8ff0"/>
<rect x="899.80" y="970" width="1.69" height="240" fill="#49a6a8"/>
<rect x="901.48" y="970" width="1.12" height="240" fill="#3b8ff0"/>
<rect x="1012.00" y="970" width="3.09" height="240" fill="#49a6a8"/>
<rect x="1015.10" y="970" width="1.41" height="240" fill="#3b8ff0"/>
<rect x="1047.15" y="970" width="2.81" height="240" fill="#5fbc64"/>
<rect x="1049.97" y="970" width="1.12" height="240" fill="#3b8ff0"/>
<rect x="1052.22" y="970" width="1.97" height="240" fill="#49a6a8"/>
<rect x="1054.18" y="970" width="1.12" height="240" fill="#3b8ff0"/>
<rect x="1074.15" y="970" width="1.41" height="240" fill="#4aa0c4"/>
<rect x="1082.02" y="970" width="1.41" height="240" fill="#5fbc64"/>
<rect x="1083.43" y="970" width="1.12" height="240" fill="#3b8ff0"/>
<rect x="1111.27" y="970" width="1.41" height="240" fill="#4aa0c4"/>
<rect x="1117.18" y="970" width="1.97" height="240" fill="#49a6a8"/>
<rect x="1119.15" y="970" width="1.12" height="240" fill="#3b8ff0"/>
<rect x="1122.52" y="970" width="1.69" height="240" fill="#5fbc64"/>
<rect x="1124.21" y="970" width="1.12" height="240" fill="#3b8ff0"/>
<rect x="1143.05" y="970" width="1.12" height="240" fill="#5fbc64"/>
<rect x="1144.17" y="970" width="1.12" height="240" fill="#3b8ff0"/>
<rect x="1150.36" y="970" width="1.69" height="240" fill="#4aa0c4"/>
<rect x="1166.11" y="970" width="1.69" height="240" fill="#49a6a8"/>
<rect x="1167.80" y="970" width="1.12" height="240" fill="#3b8ff0"/>
<rect x="1185.23" y="970" width="1.69" height="240" fill="#49a6a8"/>
<rect x="1186.92" y="970" width="1.12" height="240" fill="#3b8ff0"/>
<rect x="1197.04" y="970" width="1.12" height="240" fill="#49a6a8"/>
<rect x="1198.17" y="970" width="1.12" height="240" fill="#3b8ff0"/>
<rect x="1237.26" y="970" width="1.12" height="240" fill="#49a6a8"/>
<rect x="1238.38" y="970" width="1.12" height="240" fill="#3b8ff0"/>
<rect x="1248.22" y="970" width="1.97" height="240" fill="#5fbc64"/>
<rect x="1250.19" y="970" width="1.12" height="240" fill="#3b8ff0"/>
<rect x="1278.88" y="970" width="1.12" height="240" fill="#5fbc64"/>
<rect x="1280.00" y="970" width="1.41" height="240" fill="#5fbc64"/>
<rect x="1281.41" y="970" width="1.12" height="240" fill="#3b8ff0"/>
<rect x="1341.02" y="970" width="1.41" height="240" fill="#49a6a8"/>
<rect x="1342.43" y="970" width="1.12" height="240" fill="#3b8ff0"/>
<rect x="1386.02" y="970" width="1.41" height="240" fill="#49a6a8"/>
<rect x="1387.42" y="970" width="1.12" height="240" fill="#3b8ff0"/>
<rect x="1481.35" y="970" width="1.97" height="240" fill="#49a6a8"/>
<rect x="1484.44" y="970" width="1.97" height="240" fill="#8f9ba6"/>
<rect x="1487.82" y="970" width="1.69" height="240" fill="#4aa0c4"/>
<rect x="1490.35" y="970" width="1.12" height="240" fill="#49a6a8"/>
<rect x="1491.47" y="970" width="1.12" height="240" fill="#3b8ff0"/>
<rect x="1493.72" y="970" width="1.41" height="240" fill="#49a6a8"/>
<rect x="1495.13" y="970" width="1.12" height="240" fill="#3b8ff0"/>
<rect x="1516.22" y="970" width="2.81" height="240" fill="#49a6a8"/>
<rect x="1519.60" y="970" width="4.50" height="240" fill="#5fbc64"/>
<rect x="1524.09" y="970" width="1.41" height="240" fill="#3b8ff0"/>
<rect x="1569.90" y="970" width="1.12" height="240" fill="#8f9ba6"/>
<rect x="1603.93" y="970" width="1.69" height="240" fill="#8a86b0"/>
<rect x="1605.62" y="970" width="3.09" height="240" fill="#3b8ff0"/>
<rect x="1625.02" y="970" width="5.62" height="240" fill="#5fbc64"/>
<rect x="1630.64" y="970" width="1.41" height="240" fill="#3b8ff0"/>
<rect x="1635.99" y="970" width="2.25" height="240" fill="#5fbc64"/>
<rect x="1638.24" y="970" width="2.25" height="240" fill="#c9c850"/>
<rect x="1640.49" y="970" width="1.12" height="240" fill="#5fbc64"/>
<rect x="1641.61" y="970" width="1.41" height="240" fill="#ffd257"/>
<rect x="1643.02" y="970" width="3.94" height="240" fill="#5fbc64"/>
<rect x="1646.95" y="970" width="1.41" height="240" fill="#3b8ff0"/>
<rect x="1655.11" y="970" width="3.66" height="240" fill="#5fbc64"/>
<rect x="1658.76" y="970" width="1.41" height="240" fill="#3b8ff0"/>
<rect x="1666.08" y="970" width="3.66" height="240" fill="#49a6a8"/>
<rect x="1669.73" y="970" width="1.12" height="240" fill="#3b8ff0"/>
<rect x="1675.92" y="970" width="4.22" height="240" fill="#5fbc64"/>
<rect x="1681.54" y="970" width="1.41" height="240" fill="#ffd257"/>
<rect x="1682.95" y="970" width="1.12" height="240" fill="#3b8ff0"/>
<rect x="1693.07" y="970" width="3.66" height="240" fill="#5fbc64"/>
<rect x="1696.73" y="970" width="1.41" height="240" fill="#a5c850"/>
<rect x="1698.70" y="970" width="5.06" height="240" fill="#49a6a8"/>
<rect x="1704.60" y="970" width="2.53" height="240" fill="#4aa0c4"/>
<rect x="1712.20" y="970" width="3.66" height="240" fill="#5fbc64"/>
<rect x="1715.85" y="970" width="1.41" height="240" fill="#3b8ff0"/>
<rect x="1720.91" y="970" width="3.94" height="240" fill="#49a6a8"/>
<rect x="1726.26" y="970" width="1.69" height="240" fill="#5fbc64"/>
<rect x="1727.94" y="970" width="1.41" height="240" fill="#3b8ff0"/>
<rect x="1732.72" y="970" width="4.22" height="240" fill="#49a6a8"/>
<rect x="1736.94" y="970" width="1.41" height="240" fill="#3b8ff0"/>
<rect x="1755.22" y="970" width="6.75" height="240" fill="#49a6a8"/>
<rect x="1762.81" y="970" width="1.97" height="240" fill="#8f9ba6"/>
<rect x="1767.03" y="970" width="7.03" height="240" fill="#49a6a8"/>
</g></g>
<path d="M296.4 1038 H1775" stroke="rgba(40,40,232,0.52)" stroke-width="2" stroke-dasharray="3.3 4.7" fill="none"/>
<path d="M296.4 1098 H1775" stroke="rgba(40,40,232,0.52)" stroke-width="2" stroke-dasharray="3.3 4.7" fill="none"/>
<path d="M296.4 1158 H1775" stroke="rgba(40,40,232,0.52)" stroke-width="2" stroke-dasharray="3.3 4.7" fill="none"/>
<text x="302.2" y="1037.9" font-family="Liberation Sans, sans-serif" font-size="12" textLength="29.0" lengthAdjust="spacingAndGlyphs" fill="#000" stroke="#000" stroke-width="0.35">200m</text>
<text x="303.0" y="1098.0" font-family="Liberation Sans, sans-serif" font-size="12" textLength="28.2" lengthAdjust="spacingAndGlyphs" fill="#000" stroke="#000" stroke-width="0.35">100m</text>
<text x="302.2" y="1157.7" font-family="Liberation Sans, sans-serif" font-size="12" textLength="45.0" lengthAdjust="spacingAndGlyphs" fill="#000" stroke="#000" stroke-width="0.35">Sea level</text>
<path d="M380.4 948 V1168" stroke="#ff3c14" stroke-width="2" stroke-dasharray="4 2" fill="none"/>
<circle cx="380.4" cy="1180.1" r="13.2" fill="#fff"/><circle cx="380.4" cy="1180.1" r="10.2" fill="#ff4013"/>
<path d="M376.9 1174.4 V1185.9 M384.6 1174.4 L377.2 1181.6 M379.9 1179.2 L384.9 1185.9" stroke="#fff" stroke-width="1.9" fill="none"/>
<path d="M486.9 948 V1168" stroke="#000" stroke-width="2" stroke-dasharray="4 2" fill="none"/>
<circle cx="487.0" cy="1179.9" r="11.2" fill="#fff" stroke="#000" stroke-width="1.4"/><defs><clipPath id="fc"><circle cx="487.0" cy="1179.9" r="7.3"/></clipPath></defs><g clip-path="url(#fc)"><rect x="479.0" y="1171.9" width="16" height="16" fill="#fff"/><rect x="475.20" y="1171.05" width="2.95" height="2.95" fill="#000"/><rect x="475.20" y="1176.95" width="2.95" height="2.95" fill="#000"/><rect x="475.20" y="1182.85" width="2.95" height="2.95" fill="#000"/><rect x="475.20" y="1188.75" width="2.95" height="2.95" fill="#000"/><rect x="478.15" y="1168.10" width="2.95" height="2.95" fill="#000"/><rect x="478.15" y="1174.00" width="2.95" height="2.95" fill="#000"/><rect x="478.15" y="1179.90" width="2.95" height="2.95" fill="#000"/><rect x="478.15" y="1185.80" width="2.95" height="2.95" fill="#000"/><rect x="481.10" y="1171.05" width="2.95" height="2.95" fill="#000"/><rect x="481.10" y="1176.95" width="2.95" height="2.95" fill="#000"/><rect x="481.10" y="1182.85" width="2.95" height="2.95" fill="#000"/><rect x="481.10" y="1188.75" width="2.95" height="2.95" fill="#000"/><rect x="484.05" y="1168.10" width="2.95" height="2.95" fill="#000"/><rect x="484.05" y="1174.00" width="2.95" height="2.95" fill="#000"/><rect x="484.05" y="1179.90" width="2.95" height="2.95" fill="#000"/><rect x="484.05" y="1185.80" width="2.95" height="2.95" fill="#000"/><rect x="487.00" y="1171.05" width="2.95" height="2.95" fill="#000"/><rect x="487.00" y="1176.95" width="2.95" height="2.95" fill="#000"/><rect x="487.00" y="1182.85" width="2.95" height="2.95" fill="#000"/><rect x="487.00" y="1188.75" width="2.95" height="2.95" fill="#000"/><rect x="489.95" y="1168.10" width="2.95" height="2.95" fill="#000"/><rect x="489.95" y="1174.00" width="2.95" height="2.95" fill="#000"/><rect x="489.95" y="1179.90" width="2.95" height="2.95" fill="#000"/><rect x="489.95" y="1185.80" width="2.95" height="2.95" fill="#000"/><rect x="492.90" y="1171.05" width="2.95" height="2.95" fill="#000"/><rect x="492.90" y="1176.95" width="2.95" height="2.95" fill="#000"/><rect x="492.90" y="1182.85" width="2.95" height="2.95" fill="#000"/><rect x="492.90" y="1188.75" width="2.95" height="2.95" fill="#000"/><rect x="495.85" y="1168.10" width="2.95" height="2.95" fill="#000"/><rect x="495.85" y="1174.00" width="2.95" height="2.95" fill="#000"/><rect x="495.85" y="1179.90" width="2.95" height="2.95" fill="#000"/><rect x="495.85" y="1185.80" width="2.95" height="2.95" fill="#000"/></g><circle cx="487.0" cy="1179.9" r="7.3" fill="none" stroke="#000" stroke-width="1"/>
</svg></div>
<div id="status">
<span class="t" style="left:2.60px;top:5.72px;font-size:14.67px;color:#fff;transform:scaleX(1.0186);">Route loaded successfully</span>
<span class="t" style="left:1672.40px;top:5.72px;font-size:14.67px;color:#fff;transform:scaleX(0.9320);">Version: 0.6.11.1</span>
</div>
<svg id="winedge" style="position:absolute;left:1766px;top:0" width="12" height="1221" viewBox="1766 0 12 1221"><path d="M1769.5 0 H1778 V9 H1777 Q1777 0.5 1769.5 0 Z" fill="#e6e6e6"/><path d="M1769.5 -0.3 Q1777.5 0.3 1777.5 8.5 V1221" fill="none" stroke="#a9a9a9" stroke-width="1"/></svg>
</body></html>
